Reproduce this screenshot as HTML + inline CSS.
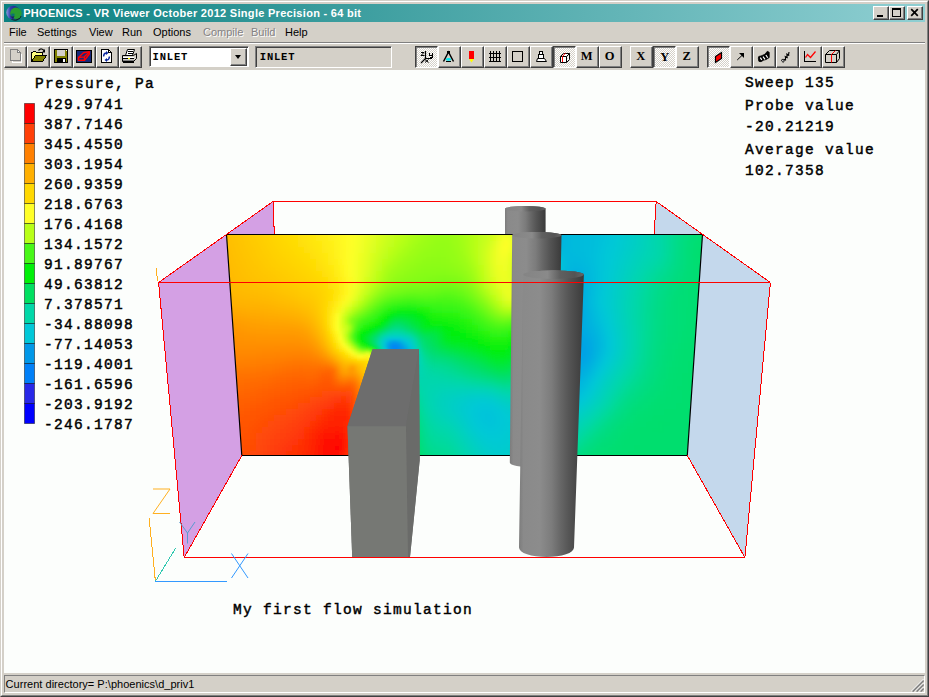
<!DOCTYPE html><html><head><meta charset="utf-8"><title>PHOENICS - VR Viewer</title><style>

*{margin:0;padding:0;box-sizing:border-box}
html,body{width:929px;height:697px;overflow:hidden;background:#d4d0c8}
body{position:relative;font-family:"Liberation Sans",sans-serif;font-size:11px;color:#000}
.abs{position:absolute}
#frame{position:absolute;left:0;top:0;width:929px;height:697px;background:#d4d0c8;
 border-top:1px solid #d4d0c8;border-left:1px solid #d4d0c8;border-right:1px solid #404040;border-bottom:1px solid #404040}
#frame2{position:absolute;left:1px;top:1px;width:927px;height:695px;border-top:1px solid #fff;border-left:1px solid #fff;border-right:1px solid #808080;border-bottom:1px solid #808080}
#title{position:absolute;left:4px;top:4px;width:921px;height:18px;background:linear-gradient(to right,#0a8080 0%,#8fcfd2 100%)}
#title .txt{position:absolute;left:19.2px;top:2px;color:#fff;font-weight:bold;font-size:11px;line-height:14px;white-space:nowrap;letter-spacing:0.295px}
.cap{position:absolute;top:2px;width:16px;height:14px;background:#d4d0c8;border-top:1px solid #fff;border-left:1px solid #fff;border-right:1px solid #404040;border-bottom:1px solid #404040;box-shadow:inset -1px -1px 0 #808080}
#menu{position:absolute;left:4px;top:22px;width:921px;height:20px}
#menu span{position:absolute;top:3px;line-height:14px;white-space:nowrap}
#menu span.dis{color:#848284;text-shadow:1px 1px 0 #fff}
#sep{position:absolute;left:4px;top:42px;width:921px;height:2px;border-top:1px solid #808080;border-bottom:1px solid #fff}
.tb{position:absolute;top:46px;width:23px;height:22px;background:#d4d0c8;border-top:1px solid #fff;border-left:1px solid #fff;border-right:1px solid #404040;border-bottom:1px solid #404040;box-shadow:inset -1px -1px 0 #808080}
.tb.on{border-top:1px solid #404040;border-left:1px solid #404040;border-right:1px solid #fff;border-bottom:1px solid #fff;box-shadow:inset 1px 1px 0 #808080;background:repeating-conic-gradient(#fff 0% 25%,#d4d0c8 0% 50%) 0 0/2px 2px}
.tb.on b{left:0.2px;top:1.4px}
.tb svg{position:absolute;left:0;top:0}
.tb b{position:absolute;left:-0.8px;top:0;width:21px;height:20px;text-align:center;font-family:"Liberation Serif",serif;font-weight:bold;font-size:12.5px;line-height:19px}
#combo{position:absolute;left:149px;top:46px;width:100px;height:21px;background:#fff;border-top:1px solid #808080;border-left:1px solid #808080;border-right:1px solid #fff;border-bottom:1px solid #fff;box-shadow:inset 1px 1px 0 #404040}
#combo .t,#stat .t{position:absolute;left:4.5px;top:3px;font-family:"Liberation Mono",monospace;font-weight:bold;font-size:10.5px;line-height:14px;letter-spacing:0.8px}
#combo .dd{position:absolute;right:1px;top:1px;width:17px;height:18px;background:#d4d0c8;border-top:1px solid #fff;border-left:1px solid #fff;border-right:1px solid #404040;border-bottom:1px solid #404040;box-shadow:inset -1px -1px 0 #808080}
#combo .dd i{position:absolute;left:3.5px;top:6px;width:0;height:0;border-left:3.5px solid transparent;border-right:3.5px solid transparent;border-top:4px solid #000}
#combo .t{left:2.6px !important}
#stat .t{left:3.8px !important}
#stat{position:absolute;left:255px;top:46px;width:137px;height:22px;background:#d4d0c8;border-top:1px solid #808080;border-left:1px solid #808080;border-right:1px solid #fff;border-bottom:1px solid #fff;box-shadow:inset 1px 1px 0 #404040}
#canvas{position:absolute;left:4px;top:70px;width:921px;height:603px;background:#fcfefc;overflow:hidden}
#canvas svg{position:absolute;left:-4px;top:-70px}
.m{font-family:"Liberation Mono",monospace;font-weight:bold}
.m2{font-family:"Liberation Mono",monospace;font-weight:normal;stroke:#000;stroke-width:0.45px;fill:#000}
#status{position:absolute;left:4px;top:675px;width:921px;height:18px;border-top:1px solid #808080;border-left:1px solid #808080;border-right:1px solid #fff;border-bottom:1px solid #fff}
#status span{position:absolute;left:0.6px;top:1px;line-height:14px;white-space:nowrap;letter-spacing:0.02px}

</style></head><body>
<div id="frame"></div><div id="frame2"></div>
<div id="title"><svg class="abs" style="left:1px;top:1px" width="18" height="16" viewBox="5 5 18 16"><defs><linearGradient id="crs" x1="0" x2="1" y1="0" y2="0"><stop offset="0" stop-color="#9098e0"/><stop offset="0.3" stop-color="#3040a8"/><stop offset="1" stop-color="#101c80"/></linearGradient></defs><path d="M11 18.6 A6.4 6.4 0 0 0 21 16" stroke="#0c2a2a" stroke-width="1.3" fill="none"/><circle cx="13.2" cy="12.6" r="6.9" fill="url(#crs)"/><circle cx="15.9" cy="13.3" r="5.7" fill="#2a9d30"/><path d="M11.3 13.6 h3.2 v2.6 h-3.2z" fill="#0a7070"/><path d="M10.5 16.5 L14.5 16.2 L13 19 Z" fill="#18206a"/></svg><span class="txt">PHOENICS - VR Viewer October 2012 Single Precision - 64 bit</span>
<div class="cap" style="left:869px"><svg width="14" height="12" class="abs" style="left:0;top:0" shape-rendering="crispEdges"><rect x="3" y="8" width="6" height="2" fill="#000"/></svg></div><div class="cap" style="left:885px"><svg width="14" height="12" class="abs" style="left:0;top:0" shape-rendering="crispEdges"><rect x="2.5" y="1.5" width="8" height="8" fill="none" stroke="#000"/><rect x="2" y="1" width="9" height="2" fill="#000"/></svg></div><div class="cap" style="left:903px"><svg width="14" height="12" class="abs" style="left:0;top:0"><path d="M3.2 2.2 L9.8 8.8 M9.8 2.2 L3.2 8.8" stroke="#000" stroke-width="1.7"/></svg></div></div>
<div id="menu"><span class="" style="left:5px">File</span><span class="" style="left:33px">Settings</span><span class="" style="left:85px">View</span><span class="" style="left:118px">Run</span><span class="" style="left:149px">Options</span><span class="dis" style="left:199px">Compile</span><span class="dis" style="left:247px">Build</span><span class="" style="left:281px">Help</span></div>
<div id="sep"></div>
<div class="tb" style="left:4px"><svg width="21" height="20" viewBox="5 47 21 20" shape-rendering="crispEdges"><path d="M11.5 50.5 H17.5 L20.5 53.5 V61.5 H11.5 Z" stroke="#fff" fill="none" stroke-width="1" transform="translate(1,1)"/><path d="M10.5 49.5 H17.5 L20.5 52.5 V60.5 H10.5 Z M17.5 49.5 V52.5 H20.5" stroke="#808080" fill="#d4d0c8" stroke-width="1" /></svg></div>
<div class="tb" style="left:27px"><svg width="21" height="20" viewBox="28 47 21 20" shape-rendering="crispEdges"><path d="M31.5 61.5 V52.5 H32.5 L33.5 51.5 H35.5 L36.5 52.5 H42.5 V54.5" stroke="#000" fill="#ffff80" stroke-width="1" /><path d="M31.5 61.5 L35.5 55.5 H46.5 L42.5 61.5 Z" stroke="#000" fill="#808000" stroke-width="1" /><path d="M38.5 50.5 Q41.5 47.3 44.3 50.8" stroke="#000" fill="none" stroke-width="1.2" shape-rendering="auto"/><path d="M45 49 V52.5 H41.8 Z" stroke="none" fill="#000" stroke-width="0" shape-rendering="auto"/></svg></div>
<div class="tb" style="left:50px"><svg width="21" height="20" viewBox="51 47 21 20" shape-rendering="crispEdges"><rect x="54" y="49" width="14" height="14" fill="#000"/><rect x="55" y="50" width="12" height="12" fill="#808000"/><rect x="57" y="50" width="8" height="6" fill="#d4d0c8"/><rect x="57" y="58" width="9" height="4" fill="#000"/><rect x="63" y="59" width="2" height="3" fill="#fff"/><rect x="66" y="50" width="1" height="1" fill="#fff"/></svg></div>
<div class="tb" style="left:73px"><svg width="21" height="20" viewBox="74 47 21 20" shape-rendering="crispEdges"><rect x="76" y="50" width="16" height="13" fill="#000"/><rect x="77" y="51" width="14" height="11" fill="#182878"/><path d="M78.5 57.5 L83.5 52.8 L89.3 51.8 L89.3 54 L84.5 60.3 L78.5 60.3 Z" stroke="#ff0000" fill="none" stroke-width="1.5" shape-rendering="auto" stroke-linejoin="round"/><path d="M78.5 57.5 L84.3 56.8 L89.3 52 M84.3 56.8 L84.5 60.3" stroke="#ff0000" fill="none" stroke-width="1.3" shape-rendering="auto"/></svg></div>
<div class="tb" style="left:96px"><svg width="21" height="20" viewBox="97 47 21 20" shape-rendering="crispEdges"><path d="M101.5 49.5 H108.5 L111.5 52.5 V62.5 H101.5 Z" stroke="#000" fill="#fff" stroke-width="1" /><path d="M108.5 49.5 V52.5 H111.5" stroke="#000" fill="none" stroke-width="1" /><path d="M103.6 56.5 A3 3.5 0 0 1 106.5 53 M109.4 56.5 A3 3.5 0 0 1 106.5 60" stroke="#0c28a0" fill="none" stroke-width="1.4" shape-rendering="auto"/><path d="M106 51 L108.5 53 L106 55 Z M107 62 L104.5 60 L107 58 Z" stroke="none" fill="#0c28a0" stroke-width="0" shape-rendering="auto"/></svg></div>
<div class="tb" style="left:119px"><svg width="21" height="20" viewBox="120 47 21 20" shape-rendering="crispEdges"><path d="M125.5 55.5 L127.5 49.5 H134.5 L132.5 55.5" stroke="#000" fill="#fff" stroke-width="1" shape-rendering="auto"/><path d="M128 51.5 H133 M127.5 53.5 H132.5" stroke="#000" fill="none" stroke-width="1" /><path d="M122.5 55.5 H133.5 L136.5 53.5 V58.5 L133.5 61.5 H122.5 Z" stroke="#000" fill="#d4d0c8" stroke-width="1" shape-rendering="auto"/><rect x="123" y="57" width="11" height="1" fill="#fff"/><rect x="123" y="58" width="11" height="1" fill="#000"/><rect x="128" y="58" width="2" height="1" fill="#ffff00"/><rect x="123" y="60" width="11" height="1" fill="#808080"/><path d="M123.5 61.5 H133.5 V62.5 H123.5 Z" stroke="#000" fill="#000" stroke-width="1" /></svg></div>
<div id="combo"><span class="t">INLET</span><div class="dd"><i></i></div></div>
<div id="stat"><span class="t">INLET</span></div>
<div class="tb on" style="left:415px"><svg width="21" height="20" viewBox="416 47 21 20" shape-rendering="crispEdges"><path d="M425.5 51 V58.5 H432 M425.5 58.5 L421 63" stroke="#000" fill="none" stroke-width="1.2" shape-rendering="auto"/><path d="M421 52.5 H424 L421 55.5 H424.5" stroke="#000" fill="none" stroke-width="1" shape-rendering="auto"/><path d="M429.5 53 V55.5 H432.5 M432.5 53 V57.5 H429.5" stroke="#000" fill="none" stroke-width="1" /><path d="M425 59.5 L428.5 62.5 M428.5 59.5 L425 62.5" stroke="#000" fill="none" stroke-width="1" shape-rendering="auto"/></svg></div>
<div class="tb" style="left:438px"><svg width="21" height="20" viewBox="439 47 21 20" shape-rendering="crispEdges"><path d="M443.5 61.5 L448.5 52 L453.5 61.5" stroke="#000" fill="none" stroke-width="1.5" shape-rendering="auto"/><rect x="447" y="51" width="3" height="2" fill="#000"/><ellipse cx="448.5" cy="59.4" rx="2.7" ry="1.3" fill="#00e8f0" shape-rendering="auto"/><rect x="446" y="61" width="5" height="1" fill="#000"/></svg></div>
<div class="tb" style="left:461px"><svg width="21" height="20" viewBox="462 47 21 20" shape-rendering="crispEdges"><rect x="469" y="51" width="5" height="8" fill="#ff0000"/><path d="M469 59 H474 L471.5 62.5 Z" stroke="none" fill="#ffff00" stroke-width="0" shape-rendering="auto"/></svg></div>
<div class="tb" style="left:484px"><svg width="21" height="20" viewBox="485 47 21 20" shape-rendering="crispEdges"><rect x="490" y="51" width="1" height="11" fill="#000"/><rect x="493" y="51" width="1" height="11" fill="#000"/><rect x="496" y="51" width="1" height="11" fill="#000"/><rect x="499" y="51" width="1" height="11" fill="#000"/><rect x="489" y="53" width="12" height="1" fill="#000"/><rect x="489" y="57" width="12" height="1" fill="#000"/><rect x="489" y="61" width="12" height="1" fill="#000"/></svg></div>
<div class="tb" style="left:507px"><svg width="21" height="20" viewBox="508 47 21 20" shape-rendering="crispEdges"><path d="M512.5 51.5 H522.5 V61.5 H512.5 Z" stroke="#000" fill="none" stroke-width="1" /></svg></div>
<div class="tb" style="left:530px"><svg width="21" height="20" viewBox="531 47 21 20" shape-rendering="crispEdges"><path d="M539.5 51.5 H542.5 V54.5 H539.5 Z" stroke="#000" fill="#fff" stroke-width="1" /><path d="M538.5 54.5 H543.5 V58.5 H538.5 Z" stroke="#000" fill="#fff" stroke-width="1" /><path d="M537.5 58.5 H544.5 L546.5 61.5 H536.5 Z" stroke="#000" fill="#fff" stroke-width="1" shape-rendering="auto"/></svg></div>
<div class="tb on" style="left:553px"><svg width="21" height="20" viewBox="554 47 21 20" shape-rendering="crispEdges"><path d="M560.5 56.5 H566.5 V62.5 H560.5 Z M560.5 56.5 L563.5 53.5 H569.5 L566.5 56.5 M569.5 53.5 V59.5 L566.5 62.5" stroke="#000" fill="#fff" stroke-width="1" shape-rendering="auto"/><path d="M562.5 62 V56.5 L565.5 53" stroke="#ff0000" fill="none" stroke-width="1" shape-rendering="auto"/></svg></div>
<div class="tb" style="left:576px"><b>M</b></div>
<div class="tb" style="left:599px"><b>O</b></div>
<div class="tb" style="left:630px"><b>X</b></div>
<div class="tb on" style="left:653px"><b>Y</b></div>
<div class="tb" style="left:676px"><b>Z</b></div>
<div class="tb on" style="left:707px"><svg width="21" height="20" viewBox="708 47 21 20" shape-rendering="crispEdges"><path d="M715.5 56.5 L721.5 52.5 V58.5 L715.5 62.5 Z" stroke="#000" fill="#ff0000" stroke-width="1.2" shape-rendering="auto"/></svg></div>
<div class="tb" style="left:730px"><svg width="21" height="20" viewBox="731 47 21 20" shape-rendering="crispEdges"><path d="M737.2 60 L743.5 54" stroke="#000" fill="none" stroke-width="1" shape-rendering="auto"/><path d="M739 53 H744 V58 Z" stroke="none" fill="#000" stroke-width="0" shape-rendering="auto"/></svg></div>
<div class="tb" style="left:753px"><svg width="21" height="20" viewBox="754 47 21 20" shape-rendering="crispEdges"><path d="M758.3 58 Q758 55.8 761 56 L765 54.2 L767.3 51.3 L769.2 52.3 L769.2 57.6 Q766 60 763.3 60.3 Q761 62.6 758.8 61.2 Z" stroke="#000" fill="#000" stroke-width="0.8" shape-rendering="auto" stroke-linejoin="round"/><path d="M760.3 57.6 L761.8 59.8 M763 56.6 L765 59.4 M765.9 55 L767.7 57.8" stroke="#fff" fill="none" stroke-width="1.2" shape-rendering="auto"/></svg></div>
<div class="tb" style="left:776px"><svg width="21" height="20" viewBox="777 47 21 20" shape-rendering="crispEdges"><path d="M783.2 61.5 L784 59.5 L785.5 60 L785.5 57 L787 57.5 L787 54.5 L788.5 55 L789 52" stroke="#000" fill="none" stroke-width="1.15" shape-rendering="auto"/><path d="M782.2 59.2 L784.3 60.6 L783.3 62.4 L781.6 61 Z" stroke="#000" fill="#fff" stroke-width="0.9" shape-rendering="auto"/><path d="M784.6 56.2 L787.6 57.8 M786.3 53.6 L789.3 55.3" stroke="#000" fill="none" stroke-width="0.9" shape-rendering="auto"/></svg></div>
<div class="tb" style="left:799px"><svg width="21" height="20" viewBox="800 47 21 20" shape-rendering="crispEdges"><path d="M804.5 51 V61.5 H816" stroke="#000" fill="none" stroke-width="1" /><path d="M805.5 57.5 L807.5 54.5 L810.5 57.5 L815.5 51.5" stroke="#ff0000" fill="none" stroke-width="1.25" shape-rendering="auto"/></svg></div>
<div class="tb" style="left:822px"><svg width="21" height="20" viewBox="823 47 21 20" shape-rendering="crispEdges"><path d="M825.5 54.5 H836.5 V62.5 H825.5 Z M825.5 54.5 L829.5 50.5 H839.5 L836.5 54.5 M839.5 50.5 V58.5 L836.5 62.5" stroke="#000" fill="none" stroke-width="1" shape-rendering="auto"/><path d="M831.5 62.5 V54.5 L835.5 50.5" stroke="#ff0000" fill="none" stroke-width="1" shape-rendering="auto"/></svg></div>
<div id="canvas"><svg width="929" height="697" viewBox="0 0 929 697"><defs>
<linearGradient id="cyl" x1="0" x2="1" y1="0" y2="0"><stop offset="0" stop-color="#7c7c7c"/><stop offset="0.07" stop-color="#8a8a8a"/><stop offset="0.32" stop-color="#8c8c8c"/><stop offset="0.5" stop-color="#7c7c7c"/><stop offset="0.63" stop-color="#686868"/><stop offset="0.76" stop-color="#565656"/><stop offset="0.9" stop-color="#464646"/><stop offset="1" stop-color="#3a3a3a"/></linearGradient>
<linearGradient id="captop" x1="0" x2="1" y1="0" y2="0"><stop offset="0" stop-color="#848484"/><stop offset="0.4" stop-color="#8a8a8a"/><stop offset="0.6" stop-color="#606060"/><stop offset="0.85" stop-color="#545454"/><stop offset="1" stop-color="#666"/></linearGradient>
<pattern id="dots" width="3" height="3" patternUnits="userSpaceOnUse"><rect width="3" height="3" fill="#6e6e6e"/><rect width="1" height="1" fill="#676767"/></pattern>
<filter id="bl" x="-5%" y="-5%" width="110%" height="110%"><feGaussianBlur stdDeviation="3.8"/></filter>
<filter id="bl2" x="-5%" y="-5%" width="110%" height="110%"><feGaussianBlur stdDeviation="1.5"/></filter>
<filter id="bl3" x="-20%" y="-20%" width="140%" height="140%"><feGaussianBlur stdDeviation="3"/></filter>
<mask id="m2" maskUnits="userSpaceOnUse" x="300" y="290" width="160" height="110"><rect x="328" y="314" width="100" height="58" fill="#fff" filter="url(#bl3)"/></mask>
<clipPath id="cp"><polygon points="226.5,234.5 702.5,234.5 687.3,455.5 241.8,455.5"/></clipPath>
</defs><path d="M505 208.8 L505 240 L545.6 240 L545.6 208.8 A20.3 2.8 0 0 0 505 208.8 Z" fill="url(#cyl)"/><ellipse cx="525.3" cy="208.8" rx="20.3" ry="2.8" fill="url(#captop)"/><polygon points="158.6,282.5 273,201.5 274.4,236 226.5,234.5 241.8,455.5 184.2,557.5" fill="#d4a0e4" /><polygon points="770.4,282.5 656.2,201.5 654,236 702.5,234.5 687.3,455.5 744.9,557.5" fill="#c4d8ec" /><line x1="273" y1="201.5" x2="656.2" y2="201.5" stroke="#ff0000" stroke-width="1" shape-rendering="crispEdges"/><line x1="273" y1="201.5" x2="274.4" y2="236" stroke="#ff0000" stroke-width="1" shape-rendering="crispEdges"/><line x1="656.2" y1="201.5" x2="654" y2="236" stroke="#ff0000" stroke-width="1" shape-rendering="crispEdges"/><g clip-path="url(#cp)"><g filter="url(#bl)"><path d="M214 223h6v6h-6z" fill="#ffbe00"/><path d="M220 223h6v6h-6z" fill="#ffc000"/><path d="M226 223h6v6h-6z" fill="#ffc200"/><path d="M232 223h6v6h-6z" fill="#ffc500"/><path d="M238 223h6v6h-6z" fill="#ffc800"/><path d="M244 223h6v6h-6z" fill="#ffca00"/><path d="M250 223h6v6h-6z" fill="#ffcd00"/><path d="M256 223h6v6h-6z" fill="#ffd000"/><path d="M262 223h6v6h-6z" fill="#ffd300"/><path d="M268 223h6v6h-6z" fill="#ffd600"/><path d="M274 223h6v6h-6z" fill="#ffd901"/><path d="M280 223h6v6h-6z" fill="#ffdb03"/><path d="M286 223h6v6h-6z" fill="#ffde06"/><path d="M292 223h6v6h-6z" fill="#ffe109"/><path d="M298 223h6v6h-6z" fill="#ffe40c"/><path d="M304 223h6v6h-6z" fill="#ffe60f"/><path d="M310 223h6v6h-6z" fill="#ffe912"/><path d="M316 223h6v6h-6z" fill="#ffec15"/><path d="M322 223h6v6h-6z" fill="#fff018"/><path d="M328 223h6v6h-6z" fill="#fff31b"/><path d="M334 223h6v6h-6z" fill="#fff61f"/><path d="M340 223h6v6h-6z" fill="#fffa23"/><path d="M346 223h6v6h-6z" fill="#fffd26"/><path d="M352 223h6v6h-6z" fill="#fbff27"/><path d="M358 223h6v6h-6z" fill="#f4ff26"/><path d="M364 223h6v6h-6z" fill="#edff24"/><path d="M370 223h6v6h-6z" fill="#e5ff22"/><path d="M376 223h6v6h-6z" fill="#dcff20"/><path d="M382 223h6v6h-6z" fill="#d4ff1e"/><path d="M388 223h6v6h-6z" fill="#ccff1d"/><path d="M394 223h6v6h-6z" fill="#c5ff1b"/><path d="M400 223h6v6h-6z" fill="#bfff19"/><path d="M406 223h6v6h-6z" fill="#b9ff18"/><path d="M412 223h6v6h-6z" fill="#b1ff18"/><path d="M418 223h6v6h-6z" fill="#aafe18"/><path d="M424 223h6v6h-6z" fill="#a5fe18"/><path d="M430 223h6v6h-6z" fill="#a1fe18"/><path d="M436 223h6v6h-6z" fill="#9efd18"/><path d="M442 223h12v6h-12z" fill="#9dfd18"/><path d="M454 223h6v6h-6z" fill="#a1fe18"/><path d="M460 223h6v6h-6z" fill="#a5fe18"/><path d="M466 223h6v6h-6z" fill="#acfe18"/><path d="M472 223h6v6h-6z" fill="#b4ff18"/><path d="M478 223h6v6h-6z" fill="#bbff19"/><path d="M484 223h6v6h-6z" fill="#c2ff1a"/><path d="M490 223h6v6h-6z" fill="#caff1c"/><path d="M496 223h6v6h-6z" fill="#d0ff1d"/><path d="M502 223h6v6h-6z" fill="#cfff1d"/><path d="M508 223h6v6h-6z" fill="#beff19"/><path d="M514 223h6v6h-6z" fill="#87fc18"/><path d="M520 223h6v6h-6z" fill="#39f615"/><path d="M526 223h6v6h-6z" fill="#00ee13"/><path d="M532 223h6v6h-6z" fill="#00df66"/><path d="M538 223h6v6h-6z" fill="#00d8a5"/><path d="M544 223h6v6h-6z" fill="#00cec7"/><path d="M550 223h6v6h-6z" fill="#00c4d9"/><path d="M556 223h6v6h-6z" fill="#00bbdc"/><path d="M562 223h12v6h-12z" fill="#00b9dd"/><path d="M574 223h6v6h-6z" fill="#00badd"/><path d="M580 223h6v6h-6z" fill="#00bbdc"/><path d="M586 223h6v6h-6z" fill="#00bddc"/><path d="M592 223h6v6h-6z" fill="#00bfdb"/><path d="M598 223h6v6h-6z" fill="#00c1da"/><path d="M604 223h6v6h-6z" fill="#00c4d9"/><path d="M610 223h6v6h-6z" fill="#00c8d8"/><path d="M616 223h6v6h-6z" fill="#00c9d4"/><path d="M622 223h6v6h-6z" fill="#00cbcf"/><path d="M628 223h6v6h-6z" fill="#00cdc9"/><path d="M634 223h6v6h-6z" fill="#00cfc3"/><path d="M640 223h6v6h-6z" fill="#00d1bd"/><path d="M646 223h6v6h-6z" fill="#00d3b6"/><path d="M652 223h6v6h-6z" fill="#00d6af"/><path d="M658 223h6v6h-6z" fill="#00d8a8"/><path d="M664 223h6v6h-6z" fill="#00d99e"/><path d="M670 223h6v6h-6z" fill="#00da94"/><path d="M676 223h6v6h-6z" fill="#00db8b"/><path d="M682 223h6v6h-6z" fill="#00dc83"/><path d="M688 223h6v6h-6z" fill="#00dd7d"/><path d="M694 223h6v6h-6z" fill="#00dd78"/><path d="M700 223h6v6h-6z" fill="#00de74"/><path d="M706 223h6v6h-6z" fill="#00de71"/><path d="M712 223h6v6h-6z" fill="#00de6e"/><path d="M214 229h6v6h-6z" fill="#ffbc00"/><path d="M220 229h6v6h-6z" fill="#ffbf00"/><path d="M226 229h6v6h-6z" fill="#ffc100"/><path d="M232 229h6v6h-6z" fill="#ffc400"/><path d="M238 229h6v6h-6z" fill="#ffc600"/><path d="M244 229h6v6h-6z" fill="#ffc900"/><path d="M250 229h6v6h-6z" fill="#ffcc00"/><path d="M256 229h6v6h-6z" fill="#ffcf00"/><path d="M262 229h6v6h-6z" fill="#ffd200"/><path d="M268 229h6v6h-6z" fill="#ffd500"/><path d="M274 229h6v6h-6z" fill="#ffd700"/><path d="M280 229h6v6h-6z" fill="#ffda02"/><path d="M286 229h6v6h-6z" fill="#ffdd05"/><path d="M292 229h6v6h-6z" fill="#ffe008"/><path d="M298 229h6v6h-6z" fill="#ffe20b"/><path d="M304 229h6v6h-6z" fill="#ffe50e"/><path d="M310 229h6v6h-6z" fill="#ffe811"/><path d="M316 229h6v6h-6z" fill="#ffeb14"/><path d="M322 229h6v6h-6z" fill="#ffee17"/><path d="M328 229h6v6h-6z" fill="#fff21b"/><path d="M334 229h6v6h-6z" fill="#fff61e"/><path d="M340 229h6v6h-6z" fill="#fff922"/><path d="M346 229h6v6h-6z" fill="#fffd26"/><path d="M352 229h6v6h-6z" fill="#fbff27"/><path d="M358 229h6v6h-6z" fill="#f4ff26"/><path d="M364 229h6v6h-6z" fill="#ecff24"/><path d="M370 229h6v6h-6z" fill="#e4ff22"/><path d="M376 229h6v6h-6z" fill="#dbff20"/><path d="M382 229h6v6h-6z" fill="#d2ff1e"/><path d="M388 229h6v6h-6z" fill="#caff1c"/><path d="M394 229h6v6h-6z" fill="#c2ff1a"/><path d="M400 229h6v6h-6z" fill="#bcff19"/><path d="M406 229h6v6h-6z" fill="#b5ff18"/><path d="M412 229h6v6h-6z" fill="#adfe18"/><path d="M418 229h6v6h-6z" fill="#a6fe18"/><path d="M424 229h6v6h-6z" fill="#a1fe18"/><path d="M430 229h6v6h-6z" fill="#9dfd18"/><path d="M436 229h6v6h-6z" fill="#9afd18"/><path d="M442 229h6v6h-6z" fill="#99fd18"/><path d="M448 229h6v6h-6z" fill="#9bfd18"/><path d="M454 229h6v6h-6z" fill="#9ffd18"/><path d="M460 229h6v6h-6z" fill="#a5fe18"/><path d="M466 229h6v6h-6z" fill="#adfe18"/><path d="M472 229h6v6h-6z" fill="#b6ff18"/><path d="M478 229h6v6h-6z" fill="#beff19"/><path d="M484 229h6v6h-6z" fill="#c6ff1b"/><path d="M490 229h6v6h-6z" fill="#d1ff1e"/><path d="M496 229h6v6h-6z" fill="#dfff21"/><path d="M502 229h6v6h-6z" fill="#e7ff23"/><path d="M508 229h6v6h-6z" fill="#dbff20"/><path d="M514 229h6v6h-6z" fill="#aefe18"/><path d="M520 229h6v6h-6z" fill="#4bf818"/><path d="M526 229h6v6h-6z" fill="#00f009"/><path d="M532 229h6v6h-6z" fill="#00df67"/><path d="M538 229h6v6h-6z" fill="#00d6ad"/><path d="M544 229h6v6h-6z" fill="#00cad3"/><path d="M550 229h6v6h-6z" fill="#00b8dd"/><path d="M556 229h6v6h-6z" fill="#00b3df"/><path d="M562 229h6v6h-6z" fill="#00b6de"/><path d="M568 229h6v6h-6z" fill="#00b9dd"/><path d="M574 229h6v6h-6z" fill="#00badd"/><path d="M580 229h6v6h-6z" fill="#00bbdc"/><path d="M586 229h6v6h-6z" fill="#00bddc"/><path d="M592 229h6v6h-6z" fill="#00bedb"/><path d="M598 229h6v6h-6z" fill="#00c1da"/><path d="M604 229h6v6h-6z" fill="#00c4d9"/><path d="M610 229h6v6h-6z" fill="#00c8d8"/><path d="M616 229h6v6h-6z" fill="#00c9d4"/><path d="M622 229h6v6h-6z" fill="#00cbcf"/><path d="M628 229h6v6h-6z" fill="#00cdc9"/><path d="M634 229h6v6h-6z" fill="#00cfc3"/><path d="M640 229h6v6h-6z" fill="#00d1bd"/><path d="M646 229h6v6h-6z" fill="#00d3b6"/><path d="M652 229h6v6h-6z" fill="#00d6af"/><path d="M658 229h6v6h-6z" fill="#00d8a7"/><path d="M664 229h6v6h-6z" fill="#00d99c"/><path d="M670 229h6v6h-6z" fill="#00da92"/><path d="M676 229h6v6h-6z" fill="#00dc88"/><path d="M682 229h6v6h-6z" fill="#00dc80"/><path d="M688 229h6v6h-6z" fill="#00dd7a"/><path d="M694 229h6v6h-6z" fill="#00de75"/><path d="M700 229h6v6h-6z" fill="#00de72"/><path d="M706 229h6v6h-6z" fill="#00de6f"/><path d="M712 229h6v6h-6z" fill="#00df6c"/><path d="M214 235h6v6h-6z" fill="#ffbb00"/><path d="M220 235h6v6h-6z" fill="#ffbe00"/><path d="M226 235h6v6h-6z" fill="#ffc000"/><path d="M232 235h6v6h-6z" fill="#ffc300"/><path d="M238 235h6v6h-6z" fill="#ffc500"/><path d="M244 235h6v6h-6z" fill="#ffc800"/><path d="M250 235h6v6h-6z" fill="#ffcb00"/><path d="M256 235h6v6h-6z" fill="#ffce00"/><path d="M262 235h6v6h-6z" fill="#ffd000"/><path d="M268 235h6v6h-6z" fill="#ffd300"/><path d="M274 235h6v6h-6z" fill="#ffd600"/><path d="M280 235h6v6h-6z" fill="#ffd901"/><path d="M286 235h6v6h-6z" fill="#ffdb03"/><path d="M292 235h6v6h-6z" fill="#ffde06"/><path d="M298 235h6v6h-6z" fill="#ffe109"/><path d="M304 235h6v6h-6z" fill="#ffe40c"/><path d="M310 235h6v6h-6z" fill="#ffe70f"/><path d="M316 235h6v6h-6z" fill="#ffea12"/><path d="M322 235h6v6h-6z" fill="#ffed16"/><path d="M328 235h6v6h-6z" fill="#fff11a"/><path d="M334 235h6v6h-6z" fill="#fff51e"/><path d="M340 235h6v6h-6z" fill="#fff922"/><path d="M346 235h6v6h-6z" fill="#fffd26"/><path d="M352 235h6v6h-6z" fill="#fbff27"/><path d="M358 235h6v6h-6z" fill="#f3ff25"/><path d="M364 235h6v6h-6z" fill="#ebff23"/><path d="M370 235h6v6h-6z" fill="#e2ff21"/><path d="M376 235h6v6h-6z" fill="#d8ff1f"/><path d="M382 235h6v6h-6z" fill="#cfff1d"/><path d="M388 235h6v6h-6z" fill="#c6ff1b"/><path d="M394 235h6v6h-6z" fill="#bfff19"/><path d="M400 235h6v6h-6z" fill="#b8ff18"/><path d="M406 235h6v6h-6z" fill="#affe18"/><path d="M412 235h6v6h-6z" fill="#a8fe18"/><path d="M418 235h6v6h-6z" fill="#a2fe18"/><path d="M424 235h6v6h-6z" fill="#9dfd18"/><path d="M430 235h6v6h-6z" fill="#9afd18"/><path d="M436 235h6v6h-6z" fill="#97fd18"/><path d="M442 235h6v6h-6z" fill="#96fd18"/><path d="M448 235h6v6h-6z" fill="#98fd18"/><path d="M454 235h6v6h-6z" fill="#9dfd18"/><path d="M460 235h6v6h-6z" fill="#a4fe18"/><path d="M466 235h6v6h-6z" fill="#adfe18"/><path d="M472 235h6v6h-6z" fill="#b8ff18"/><path d="M478 235h6v6h-6z" fill="#bfff1a"/><path d="M484 235h6v6h-6z" fill="#c9ff1c"/><path d="M490 235h6v6h-6z" fill="#d4ff1e"/><path d="M496 235h6v6h-6z" fill="#e9ff23"/><path d="M502 235h6v6h-6z" fill="#fcff27"/><path d="M508 235h6v6h-6z" fill="#f5ff26"/><path d="M514 235h6v6h-6z" fill="#c6ff1b"/><path d="M520 235h6v6h-6z" fill="#61fa18"/><path d="M526 235h6v6h-6z" fill="#07f10a"/><path d="M532 235h6v6h-6z" fill="#00df65"/><path d="M538 235h6v6h-6z" fill="#00d5b0"/><path d="M544 235h6v6h-6z" fill="#00c4d9"/><path d="M550 235h6v6h-6z" fill="#00afe0"/><path d="M556 235h6v6h-6z" fill="#00b0e0"/><path d="M562 235h6v6h-6z" fill="#00b7de"/><path d="M568 235h6v6h-6z" fill="#00badd"/><path d="M574 235h6v6h-6z" fill="#00bbdc"/><path d="M580 235h6v6h-6z" fill="#00bcdc"/><path d="M586 235h6v6h-6z" fill="#00bddc"/><path d="M592 235h6v6h-6z" fill="#00bfdb"/><path d="M598 235h6v6h-6z" fill="#00c1da"/><path d="M604 235h6v6h-6z" fill="#00c4d9"/><path d="M610 235h6v6h-6z" fill="#00c8d8"/><path d="M616 235h6v6h-6z" fill="#00cad3"/><path d="M622 235h6v6h-6z" fill="#00cbce"/><path d="M628 235h6v6h-6z" fill="#00cdc9"/><path d="M634 235h6v6h-6z" fill="#00cfc3"/><path d="M640 235h6v6h-6z" fill="#00d1bc"/><path d="M646 235h6v6h-6z" fill="#00d3b6"/><path d="M652 235h6v6h-6z" fill="#00d6ae"/><path d="M658 235h6v6h-6z" fill="#00d8a6"/><path d="M664 235h6v6h-6z" fill="#00d99b"/><path d="M670 235h6v6h-6z" fill="#00db90"/><path d="M676 235h6v6h-6z" fill="#00dc86"/><path d="M682 235h6v6h-6z" fill="#00dd7e"/><path d="M688 235h6v6h-6z" fill="#00dd78"/><path d="M694 235h6v6h-6z" fill="#00de73"/><path d="M700 235h6v6h-6z" fill="#00de70"/><path d="M706 235h6v6h-6z" fill="#00df6d"/><path d="M712 235h6v6h-6z" fill="#00df6b"/><path d="M214 241h6v6h-6z" fill="#ffba00"/><path d="M220 241h6v6h-6z" fill="#ffbd00"/><path d="M226 241h6v6h-6z" fill="#ffbf00"/><path d="M232 241h6v6h-6z" fill="#ffc100"/><path d="M238 241h6v6h-6z" fill="#ffc400"/><path d="M244 241h6v6h-6z" fill="#ffc700"/><path d="M250 241h6v6h-6z" fill="#ffca00"/><path d="M256 241h6v6h-6z" fill="#ffcc00"/><path d="M262 241h6v6h-6z" fill="#ffcf00"/><path d="M268 241h6v6h-6z" fill="#ffd200"/><path d="M274 241h6v6h-6z" fill="#ffd400"/><path d="M280 241h6v6h-6z" fill="#ffd700"/><path d="M286 241h6v6h-6z" fill="#ffda02"/><path d="M292 241h6v6h-6z" fill="#ffdc04"/><path d="M298 241h6v6h-6z" fill="#ffdf07"/><path d="M304 241h6v6h-6z" fill="#ffe20a"/><path d="M310 241h6v6h-6z" fill="#ffe50d"/><path d="M316 241h6v6h-6z" fill="#ffe811"/><path d="M322 241h6v6h-6z" fill="#ffec14"/><path d="M328 241h6v6h-6z" fill="#fff019"/><path d="M334 241h6v6h-6z" fill="#fff41d"/><path d="M340 241h6v6h-6z" fill="#fff921"/><path d="M346 241h6v6h-6z" fill="#fffd26"/><path d="M352 241h6v6h-6z" fill="#faff27"/><path d="M358 241h6v6h-6z" fill="#f2ff25"/><path d="M364 241h6v6h-6z" fill="#e9ff23"/><path d="M370 241h6v6h-6z" fill="#dfff21"/><path d="M376 241h6v6h-6z" fill="#d5ff1e"/><path d="M382 241h6v6h-6z" fill="#cbff1c"/><path d="M388 241h6v6h-6z" fill="#c2ff1a"/><path d="M394 241h6v6h-6z" fill="#baff19"/><path d="M400 241h6v6h-6z" fill="#b2ff18"/><path d="M406 241h6v6h-6z" fill="#aafe18"/><path d="M412 241h6v6h-6z" fill="#a3fe18"/><path d="M418 241h6v6h-6z" fill="#9efd18"/><path d="M424 241h6v6h-6z" fill="#9afd18"/><path d="M430 241h6v6h-6z" fill="#96fd18"/><path d="M436 241h12v6h-12z" fill="#94fd18"/><path d="M448 241h6v6h-6z" fill="#96fd18"/><path d="M454 241h6v6h-6z" fill="#9bfd18"/><path d="M460 241h6v6h-6z" fill="#a2fe18"/><path d="M466 241h6v6h-6z" fill="#acfe18"/><path d="M472 241h6v6h-6z" fill="#b8ff18"/><path d="M478 241h6v6h-6z" fill="#c1ff1a"/><path d="M484 241h6v6h-6z" fill="#cdff1d"/><path d="M490 241h6v6h-6z" fill="#dbff20"/><path d="M496 241h6v6h-6z" fill="#f0ff25"/><path d="M502 241h6v6h-6z" fill="#fffd26"/><path d="M508 241h6v6h-6z" fill="#faff27"/><path d="M514 241h6v6h-6z" fill="#cdff1d"/><path d="M520 241h6v6h-6z" fill="#6efa18"/><path d="M526 241h6v6h-6z" fill="#0ff20b"/><path d="M532 241h6v6h-6z" fill="#00e15d"/><path d="M538 241h6v6h-6z" fill="#00d7ac"/><path d="M544 241h6v6h-6z" fill="#00c8d7"/><path d="M550 241h6v6h-6z" fill="#00b3df"/><path d="M556 241h6v6h-6z" fill="#00b2df"/><path d="M562 241h6v6h-6z" fill="#00b7de"/><path d="M568 241h6v6h-6z" fill="#00badd"/><path d="M574 241h6v6h-6z" fill="#00bbdc"/><path d="M580 241h6v6h-6z" fill="#00bcdc"/><path d="M586 241h6v6h-6z" fill="#00bddc"/><path d="M592 241h6v6h-6z" fill="#00bfdb"/><path d="M598 241h6v6h-6z" fill="#00c2da"/><path d="M604 241h6v6h-6z" fill="#00c5d9"/><path d="M610 241h6v6h-6z" fill="#00c8d7"/><path d="M616 241h6v6h-6z" fill="#00cad2"/><path d="M622 241h6v6h-6z" fill="#00cccd"/><path d="M628 241h6v6h-6z" fill="#00cdc8"/><path d="M634 241h6v6h-6z" fill="#00cfc2"/><path d="M640 241h6v6h-6z" fill="#00d1bc"/><path d="M646 241h6v6h-6z" fill="#00d4b5"/><path d="M652 241h6v6h-6z" fill="#00d6ae"/><path d="M658 241h6v6h-6z" fill="#00d8a7"/><path d="M664 241h6v6h-6z" fill="#00d99b"/><path d="M670 241h6v6h-6z" fill="#00db90"/><path d="M676 241h6v6h-6z" fill="#00dc85"/><path d="M682 241h6v6h-6z" fill="#00dd7d"/><path d="M688 241h6v6h-6z" fill="#00de76"/><path d="M694 241h6v6h-6z" fill="#00de72"/><path d="M700 241h6v6h-6z" fill="#00de6e"/><path d="M706 241h6v6h-6z" fill="#00df6c"/><path d="M712 241h6v6h-6z" fill="#00df6a"/><path d="M214 247h6v6h-6z" fill="#ffb900"/><path d="M220 247h6v6h-6z" fill="#ffbc00"/><path d="M226 247h6v6h-6z" fill="#ffbe00"/><path d="M232 247h6v6h-6z" fill="#ffc100"/><path d="M238 247h6v6h-6z" fill="#ffc300"/><path d="M244 247h6v6h-6z" fill="#ffc600"/><path d="M250 247h6v6h-6z" fill="#ffc800"/><path d="M256 247h6v6h-6z" fill="#ffcb00"/><path d="M262 247h6v6h-6z" fill="#ffce00"/><path d="M268 247h6v6h-6z" fill="#ffd000"/><path d="M274 247h6v6h-6z" fill="#ffd300"/><path d="M280 247h6v6h-6z" fill="#ffd500"/><path d="M286 247h6v6h-6z" fill="#ffd800"/><path d="M292 247h6v6h-6z" fill="#ffda02"/><path d="M298 247h6v6h-6z" fill="#ffdd05"/><path d="M304 247h6v6h-6z" fill="#ffe008"/><path d="M310 247h6v6h-6z" fill="#ffe30b"/><path d="M316 247h6v6h-6z" fill="#ffe60f"/><path d="M322 247h6v6h-6z" fill="#ffea13"/><path d="M328 247h6v6h-6z" fill="#ffef17"/><path d="M334 247h6v6h-6z" fill="#fff31c"/><path d="M340 247h6v6h-6z" fill="#fff821"/><path d="M346 247h6v6h-6z" fill="#fffd26"/><path d="M352 247h6v6h-6z" fill="#f9ff27"/><path d="M358 247h6v6h-6z" fill="#f0ff25"/><path d="M364 247h6v6h-6z" fill="#e6ff22"/><path d="M370 247h6v6h-6z" fill="#dbff20"/><path d="M376 247h6v6h-6z" fill="#d0ff1d"/><path d="M382 247h6v6h-6z" fill="#c6ff1b"/><path d="M388 247h6v6h-6z" fill="#bdff19"/><path d="M394 247h6v6h-6z" fill="#b4ff18"/><path d="M400 247h6v6h-6z" fill="#abfe18"/><path d="M406 247h6v6h-6z" fill="#a4fe18"/><path d="M412 247h6v6h-6z" fill="#9efd18"/><path d="M418 247h6v6h-6z" fill="#99fd18"/><path d="M424 247h6v6h-6z" fill="#96fd18"/><path d="M430 247h6v6h-6z" fill="#94fd18"/><path d="M436 247h12v6h-12z" fill="#92fd18"/><path d="M448 247h6v6h-6z" fill="#95fd18"/><path d="M454 247h6v6h-6z" fill="#99fd18"/><path d="M460 247h6v6h-6z" fill="#a0fe18"/><path d="M466 247h6v6h-6z" fill="#abfe18"/><path d="M472 247h6v6h-6z" fill="#b8ff18"/><path d="M478 247h6v6h-6z" fill="#c3ff1b"/><path d="M484 247h6v6h-6z" fill="#d1ff1e"/><path d="M490 247h6v6h-6z" fill="#e2ff21"/><path d="M496 247h6v6h-6z" fill="#f4ff25"/><path d="M502 247h6v6h-6z" fill="#feff28"/><path d="M508 247h6v6h-6z" fill="#f2ff25"/><path d="M514 247h6v6h-6z" fill="#caff1c"/><path d="M520 247h6v6h-6z" fill="#72fb18"/><path d="M526 247h6v6h-6z" fill="#17f30d"/><path d="M532 247h6v6h-6z" fill="#00e34e"/><path d="M538 247h6v6h-6z" fill="#00d99d"/><path d="M544 247h6v6h-6z" fill="#00cdc9"/><path d="M550 247h6v6h-6z" fill="#00c0db"/><path d="M556 247h12v6h-12z" fill="#00b8dd"/><path d="M568 247h6v6h-6z" fill="#00badd"/><path d="M574 247h6v6h-6z" fill="#00bbdc"/><path d="M580 247h6v6h-6z" fill="#00bcdc"/><path d="M586 247h6v6h-6z" fill="#00bddc"/><path d="M592 247h6v6h-6z" fill="#00c0db"/><path d="M598 247h6v6h-6z" fill="#00c3da"/><path d="M604 247h6v6h-6z" fill="#00c7d8"/><path d="M610 247h6v6h-6z" fill="#00c9d5"/><path d="M616 247h6v6h-6z" fill="#00cad1"/><path d="M622 247h6v6h-6z" fill="#00cccb"/><path d="M628 247h6v6h-6z" fill="#00cec6"/><path d="M634 247h6v6h-6z" fill="#00d0c0"/><path d="M640 247h6v6h-6z" fill="#00d2ba"/><path d="M646 247h6v6h-6z" fill="#00d4b4"/><path d="M652 247h6v6h-6z" fill="#00d6ae"/><path d="M658 247h6v6h-6z" fill="#00d8a7"/><path d="M664 247h6v6h-6z" fill="#00d99b"/><path d="M670 247h6v6h-6z" fill="#00db8f"/><path d="M676 247h6v6h-6z" fill="#00dc85"/><path d="M682 247h6v6h-6z" fill="#00dd7c"/><path d="M688 247h6v6h-6z" fill="#00de75"/><path d="M694 247h6v6h-6z" fill="#00de71"/><path d="M700 247h6v6h-6z" fill="#00df6d"/><path d="M706 247h6v6h-6z" fill="#00df6b"/><path d="M712 247h6v6h-6z" fill="#00df69"/><path d="M214 253h6v6h-6z" fill="#ffb800"/><path d="M220 253h6v6h-6z" fill="#ffbb00"/><path d="M226 253h6v6h-6z" fill="#ffbd00"/><path d="M232 253h6v6h-6z" fill="#ffc000"/><path d="M238 253h6v6h-6z" fill="#ffc200"/><path d="M244 253h6v6h-6z" fill="#ffc500"/><path d="M250 253h6v6h-6z" fill="#ffc700"/><path d="M256 253h6v6h-6z" fill="#ffca00"/><path d="M262 253h6v6h-6z" fill="#ffcc00"/><path d="M268 253h6v6h-6z" fill="#ffce00"/><path d="M274 253h6v6h-6z" fill="#ffd100"/><path d="M280 253h6v6h-6z" fill="#ffd300"/><path d="M286 253h6v6h-6z" fill="#ffd600"/><path d="M292 253h6v6h-6z" fill="#ffd800"/><path d="M298 253h6v6h-6z" fill="#ffdb03"/><path d="M304 253h6v6h-6z" fill="#ffdd05"/><path d="M310 253h6v6h-6z" fill="#ffe009"/><path d="M316 253h6v6h-6z" fill="#ffe40c"/><path d="M322 253h6v6h-6z" fill="#ffe811"/><path d="M328 253h6v6h-6z" fill="#ffed15"/><path d="M334 253h6v6h-6z" fill="#fff21b"/><path d="M340 253h6v6h-6z" fill="#fff821"/><path d="M346 253h6v6h-6z" fill="#fffe27"/><path d="M352 253h6v6h-6z" fill="#f8ff26"/><path d="M358 253h6v6h-6z" fill="#eeff24"/><path d="M364 253h6v6h-6z" fill="#e3ff22"/><path d="M370 253h6v6h-6z" fill="#d7ff1f"/><path d="M376 253h6v6h-6z" fill="#cbff1c"/><path d="M382 253h6v6h-6z" fill="#c0ff1a"/><path d="M388 253h6v6h-6z" fill="#b6ff18"/><path d="M394 253h6v6h-6z" fill="#acfe18"/><path d="M400 253h6v6h-6z" fill="#a4fe18"/><path d="M406 253h6v6h-6z" fill="#9efd18"/><path d="M412 253h6v6h-6z" fill="#99fd18"/><path d="M418 253h6v6h-6z" fill="#95fd18"/><path d="M424 253h6v6h-6z" fill="#92fd18"/><path d="M430 253h6v6h-6z" fill="#91fd18"/><path d="M436 253h6v6h-6z" fill="#90fd18"/><path d="M442 253h6v6h-6z" fill="#91fd18"/><path d="M448 253h6v6h-6z" fill="#93fd18"/><path d="M454 253h6v6h-6z" fill="#97fd18"/><path d="M460 253h6v6h-6z" fill="#9efd18"/><path d="M466 253h6v6h-6z" fill="#a8fe18"/><path d="M472 253h6v6h-6z" fill="#b6ff18"/><path d="M478 253h6v6h-6z" fill="#c3ff1b"/><path d="M484 253h6v6h-6z" fill="#d3ff1e"/><path d="M490 253h6v6h-6z" fill="#e4ff22"/><path d="M496 253h6v6h-6z" fill="#f3ff25"/><path d="M502 253h6v6h-6z" fill="#f8ff26"/><path d="M508 253h6v6h-6z" fill="#eaff23"/><path d="M514 253h6v6h-6z" fill="#c5ff1b"/><path d="M520 253h6v6h-6z" fill="#74fb18"/><path d="M526 253h6v6h-6z" fill="#1ef30f"/><path d="M532 253h6v6h-6z" fill="#00e63e"/><path d="M538 253h6v6h-6z" fill="#00db8a"/><path d="M544 253h6v6h-6z" fill="#00d2ba"/><path d="M550 253h6v6h-6z" fill="#00c9d4"/><path d="M556 253h6v6h-6z" fill="#00bfdb"/><path d="M562 253h6v6h-6z" fill="#00badd"/><path d="M568 253h6v6h-6z" fill="#00b9dd"/><path d="M574 253h6v6h-6z" fill="#00badd"/><path d="M580 253h6v6h-6z" fill="#00bbdc"/><path d="M586 253h6v6h-6z" fill="#00bddc"/><path d="M592 253h6v6h-6z" fill="#00c0db"/><path d="M598 253h6v6h-6z" fill="#00c4d9"/><path d="M604 253h6v6h-6z" fill="#00c8d8"/><path d="M610 253h6v6h-6z" fill="#00c9d4"/><path d="M616 253h6v6h-6z" fill="#00cbcf"/><path d="M622 253h6v6h-6z" fill="#00cdc9"/><path d="M628 253h6v6h-6z" fill="#00cfc3"/><path d="M634 253h6v6h-6z" fill="#00d1bd"/><path d="M640 253h6v6h-6z" fill="#00d3b8"/><path d="M646 253h6v6h-6z" fill="#00d5b2"/><path d="M652 253h6v6h-6z" fill="#00d6ad"/><path d="M658 253h6v6h-6z" fill="#00d8a6"/><path d="M664 253h6v6h-6z" fill="#00da9a"/><path d="M670 253h6v6h-6z" fill="#00db8e"/><path d="M676 253h6v6h-6z" fill="#00dc84"/><path d="M682 253h6v6h-6z" fill="#00dd7b"/><path d="M688 253h6v6h-6z" fill="#00de75"/><path d="M694 253h6v6h-6z" fill="#00de70"/><path d="M700 253h6v6h-6z" fill="#00df6d"/><path d="M706 253h6v6h-6z" fill="#00df6b"/><path d="M712 253h6v6h-6z" fill="#00df69"/><path d="M214 259h6v6h-6z" fill="#ffb800"/><path d="M220 259h6v6h-6z" fill="#ffba00"/><path d="M226 259h6v6h-6z" fill="#ffbc00"/><path d="M232 259h6v6h-6z" fill="#ffbf00"/><path d="M238 259h6v6h-6z" fill="#ffc100"/><path d="M244 259h6v6h-6z" fill="#ffc300"/><path d="M250 259h6v6h-6z" fill="#ffc600"/><path d="M256 259h6v6h-6z" fill="#ffc800"/><path d="M262 259h6v6h-6z" fill="#ffca00"/><path d="M268 259h6v6h-6z" fill="#ffcd00"/><path d="M274 259h6v6h-6z" fill="#ffcf00"/><path d="M280 259h6v6h-6z" fill="#ffd100"/><path d="M286 259h6v6h-6z" fill="#ffd300"/><path d="M292 259h6v6h-6z" fill="#ffd600"/><path d="M298 259h6v6h-6z" fill="#ffd800"/><path d="M304 259h6v6h-6z" fill="#ffdb03"/><path d="M310 259h6v6h-6z" fill="#ffde06"/><path d="M316 259h6v6h-6z" fill="#ffe10a"/><path d="M322 259h6v6h-6z" fill="#ffe60e"/><path d="M328 259h6v6h-6z" fill="#ffeb13"/><path d="M334 259h6v6h-6z" fill="#fff119"/><path d="M340 259h6v6h-6z" fill="#fff720"/><path d="M346 259h6v6h-6z" fill="#fffe27"/><path d="M352 259h6v6h-6z" fill="#f6ff26"/><path d="M358 259h6v6h-6z" fill="#ecff24"/><path d="M364 259h6v6h-6z" fill="#e1ff21"/><path d="M370 259h6v6h-6z" fill="#d3ff1e"/><path d="M376 259h6v6h-6z" fill="#c6ff1b"/><path d="M382 259h6v6h-6z" fill="#b9ff18"/><path d="M388 259h6v6h-6z" fill="#adfe18"/><path d="M394 259h6v6h-6z" fill="#a4fe18"/><path d="M400 259h6v6h-6z" fill="#9dfd18"/><path d="M406 259h6v6h-6z" fill="#98fd18"/><path d="M412 259h6v6h-6z" fill="#94fd18"/><path d="M418 259h6v6h-6z" fill="#91fd18"/><path d="M424 259h6v6h-6z" fill="#8ffc18"/><path d="M430 259h12v6h-12z" fill="#8efc18"/><path d="M442 259h6v6h-6z" fill="#8ffc18"/><path d="M448 259h6v6h-6z" fill="#91fd18"/><path d="M454 259h6v6h-6z" fill="#94fd18"/><path d="M460 259h6v6h-6z" fill="#9afd18"/><path d="M466 259h6v6h-6z" fill="#a3fe18"/><path d="M472 259h6v6h-6z" fill="#b1ff18"/><path d="M478 259h6v6h-6z" fill="#c1ff1a"/><path d="M484 259h6v6h-6z" fill="#d2ff1e"/><path d="M490 259h6v6h-6z" fill="#e4ff22"/><path d="M496 259h6v6h-6z" fill="#f1ff25"/><path d="M502 259h6v6h-6z" fill="#f3ff25"/><path d="M508 259h6v6h-6z" fill="#e5ff22"/><path d="M514 259h6v6h-6z" fill="#c2ff1a"/><path d="M520 259h6v6h-6z" fill="#77fb18"/><path d="M526 259h6v6h-6z" fill="#26f410"/><path d="M532 259h6v6h-6z" fill="#00e92f"/><path d="M538 259h6v6h-6z" fill="#00dd7a"/><path d="M544 259h6v6h-6z" fill="#00d6af"/><path d="M550 259h6v6h-6z" fill="#00cccb"/><path d="M556 259h6v6h-6z" fill="#00c4d9"/><path d="M562 259h6v6h-6z" fill="#00bbdc"/><path d="M568 259h12v6h-12z" fill="#00b8dd"/><path d="M580 259h6v6h-6z" fill="#00b9dd"/><path d="M586 259h6v6h-6z" fill="#00bcdc"/><path d="M592 259h6v6h-6z" fill="#00c0db"/><path d="M598 259h6v6h-6z" fill="#00c4d9"/><path d="M604 259h6v6h-6z" fill="#00c8d8"/><path d="M610 259h6v6h-6z" fill="#00cad3"/><path d="M616 259h6v6h-6z" fill="#00cccd"/><path d="M622 259h6v6h-6z" fill="#00cec7"/><path d="M628 259h6v6h-6z" fill="#00d0c1"/><path d="M634 259h6v6h-6z" fill="#00d2ba"/><path d="M640 259h6v6h-6z" fill="#00d4b4"/><path d="M646 259h6v6h-6z" fill="#00d6ae"/><path d="M652 259h6v6h-6z" fill="#00d8a9"/><path d="M658 259h6v6h-6z" fill="#00d9a0"/><path d="M664 259h6v6h-6z" fill="#00da96"/><path d="M670 259h6v6h-6z" fill="#00db8c"/><path d="M676 259h6v6h-6z" fill="#00dc83"/><path d="M682 259h6v6h-6z" fill="#00dd7b"/><path d="M688 259h6v6h-6z" fill="#00de75"/><path d="M694 259h6v6h-6z" fill="#00de71"/><path d="M700 259h6v6h-6z" fill="#00de6e"/><path d="M706 259h6v6h-6z" fill="#00df6b"/><path d="M712 259h6v6h-6z" fill="#00df69"/><path d="M214 265h6v6h-6z" fill="#ffb700"/><path d="M220 265h6v6h-6z" fill="#ffb900"/><path d="M226 265h6v6h-6z" fill="#ffbb00"/><path d="M232 265h6v6h-6z" fill="#ffbe00"/><path d="M238 265h6v6h-6z" fill="#ffc000"/><path d="M244 265h6v6h-6z" fill="#ffc200"/><path d="M250 265h6v6h-6z" fill="#ffc400"/><path d="M256 265h6v6h-6z" fill="#ffc600"/><path d="M262 265h6v6h-6z" fill="#ffc900"/><path d="M268 265h6v6h-6z" fill="#ffcb00"/><path d="M274 265h6v6h-6z" fill="#ffcd00"/><path d="M280 265h6v6h-6z" fill="#ffcf00"/><path d="M286 265h6v6h-6z" fill="#ffd100"/><path d="M292 265h6v6h-6z" fill="#ffd300"/><path d="M298 265h6v6h-6z" fill="#ffd500"/><path d="M304 265h6v6h-6z" fill="#ffd800"/><path d="M310 265h6v6h-6z" fill="#ffdb03"/><path d="M316 265h6v6h-6z" fill="#ffde07"/><path d="M322 265h6v6h-6z" fill="#ffe30b"/><path d="M328 265h6v6h-6z" fill="#ffe811"/><path d="M334 265h6v6h-6z" fill="#ffef17"/><path d="M340 265h6v6h-6z" fill="#fff61f"/><path d="M346 265h6v6h-6z" fill="#fffe27"/><path d="M352 265h6v6h-6z" fill="#f5ff26"/><path d="M358 265h6v6h-6z" fill="#eaff23"/><path d="M364 265h6v6h-6z" fill="#dfff21"/><path d="M370 265h6v6h-6z" fill="#d0ff1d"/><path d="M376 265h6v6h-6z" fill="#c0ff1a"/><path d="M382 265h6v6h-6z" fill="#b0fe18"/><path d="M388 265h6v6h-6z" fill="#a4fe18"/><path d="M394 265h6v6h-6z" fill="#9cfd18"/><path d="M400 265h6v6h-6z" fill="#97fd18"/><path d="M406 265h6v6h-6z" fill="#93fd18"/><path d="M412 265h6v6h-6z" fill="#8ffc18"/><path d="M418 265h6v6h-6z" fill="#8cfc18"/><path d="M424 265h6v6h-6z" fill="#8bfc18"/><path d="M430 265h12v6h-12z" fill="#8afc18"/><path d="M442 265h6v6h-6z" fill="#8bfc18"/><path d="M448 265h6v6h-6z" fill="#8dfc18"/><path d="M454 265h6v6h-6z" fill="#90fc18"/><path d="M460 265h6v6h-6z" fill="#95fd18"/><path d="M466 265h6v6h-6z" fill="#9dfd18"/><path d="M472 265h6v6h-6z" fill="#aafe18"/><path d="M478 265h6v6h-6z" fill="#bcff19"/><path d="M484 265h6v6h-6z" fill="#cfff1d"/><path d="M490 265h6v6h-6z" fill="#e1ff21"/><path d="M496 265h6v6h-6z" fill="#efff24"/><path d="M502 265h6v6h-6z" fill="#f1ff25"/><path d="M508 265h6v6h-6z" fill="#e3ff22"/><path d="M514 265h6v6h-6z" fill="#c3ff1a"/><path d="M520 265h6v6h-6z" fill="#7dfb18"/><path d="M526 265h6v6h-6z" fill="#2df512"/><path d="M532 265h6v6h-6z" fill="#00eb22"/><path d="M538 265h6v6h-6z" fill="#00de6e"/><path d="M544 265h6v6h-6z" fill="#00d8a7"/><path d="M550 265h6v6h-6z" fill="#00cec5"/><path d="M556 265h6v6h-6z" fill="#00c6d9"/><path d="M562 265h6v6h-6z" fill="#00bbdc"/><path d="M568 265h6v6h-6z" fill="#00b6de"/><path d="M574 265h6v6h-6z" fill="#00b5de"/><path d="M580 265h6v6h-6z" fill="#00b7de"/><path d="M586 265h6v6h-6z" fill="#00badd"/><path d="M592 265h6v6h-6z" fill="#00bfdb"/><path d="M598 265h6v6h-6z" fill="#00c4d9"/><path d="M604 265h6v6h-6z" fill="#00c8d7"/><path d="M610 265h6v6h-6z" fill="#00cad1"/><path d="M616 265h6v6h-6z" fill="#00cccb"/><path d="M622 265h6v6h-6z" fill="#00cfc4"/><path d="M628 265h6v6h-6z" fill="#00d1be"/><path d="M634 265h6v6h-6z" fill="#00d3b7"/><path d="M640 265h6v6h-6z" fill="#00d5b0"/><path d="M646 265h6v6h-6z" fill="#00d7aa"/><path d="M652 265h6v6h-6z" fill="#00d9a2"/><path d="M658 265h6v6h-6z" fill="#00da9a"/><path d="M664 265h6v6h-6z" fill="#00db91"/><path d="M670 265h6v6h-6z" fill="#00dc88"/><path d="M676 265h6v6h-6z" fill="#00dc81"/><path d="M682 265h6v6h-6z" fill="#00dd7a"/><path d="M688 265h6v6h-6z" fill="#00de75"/><path d="M694 265h6v6h-6z" fill="#00de72"/><path d="M700 265h6v6h-6z" fill="#00de6f"/><path d="M706 265h6v6h-6z" fill="#00df6c"/><path d="M712 265h6v6h-6z" fill="#00df6a"/><path d="M214 271h6v6h-6z" fill="#ffb600"/><path d="M220 271h6v6h-6z" fill="#ffb800"/><path d="M226 271h6v6h-6z" fill="#ffba00"/><path d="M232 271h6v6h-6z" fill="#ffbc00"/><path d="M238 271h6v6h-6z" fill="#ffbf00"/><path d="M244 271h6v6h-6z" fill="#ffc100"/><path d="M250 271h6v6h-6z" fill="#ffc300"/><path d="M256 271h6v6h-6z" fill="#ffc500"/><path d="M262 271h6v6h-6z" fill="#ffc600"/><path d="M268 271h6v6h-6z" fill="#ffc800"/><path d="M274 271h6v6h-6z" fill="#ffca00"/><path d="M280 271h6v6h-6z" fill="#ffcc00"/><path d="M286 271h6v6h-6z" fill="#ffce00"/><path d="M292 271h6v6h-6z" fill="#ffd000"/><path d="M298 271h6v6h-6z" fill="#ffd300"/><path d="M304 271h6v6h-6z" fill="#ffd500"/><path d="M310 271h6v6h-6z" fill="#ffd800"/><path d="M316 271h6v6h-6z" fill="#ffdb03"/><path d="M322 271h6v6h-6z" fill="#ffdf08"/><path d="M328 271h6v6h-6z" fill="#ffe50d"/><path d="M334 271h6v6h-6z" fill="#ffec14"/><path d="M340 271h6v6h-6z" fill="#fff41d"/><path d="M346 271h6v6h-6z" fill="#fffd25"/><path d="M352 271h6v6h-6z" fill="#f6ff26"/><path d="M358 271h6v6h-6z" fill="#e9ff23"/><path d="M364 271h6v6h-6z" fill="#dbff20"/><path d="M370 271h6v6h-6z" fill="#cbff1c"/><path d="M376 271h6v6h-6z" fill="#bbff19"/><path d="M382 271h6v6h-6z" fill="#a9fe18"/><path d="M388 271h6v6h-6z" fill="#9dfd18"/><path d="M394 271h6v6h-6z" fill="#96fd18"/><path d="M400 271h6v6h-6z" fill="#92fd18"/><path d="M406 271h6v6h-6z" fill="#8efc18"/><path d="M412 271h6v6h-6z" fill="#8bfc18"/><path d="M418 271h6v6h-6z" fill="#88fc18"/><path d="M424 271h6v6h-6z" fill="#87fc18"/><path d="M430 271h6v6h-6z" fill="#86fc18"/><path d="M436 271h12v6h-12z" fill="#85fc18"/><path d="M448 271h6v6h-6z" fill="#87fc18"/><path d="M454 271h6v6h-6z" fill="#89fc18"/><path d="M460 271h6v6h-6z" fill="#8efc18"/><path d="M466 271h6v6h-6z" fill="#96fd18"/><path d="M472 271h6v6h-6z" fill="#a4fe18"/><path d="M478 271h6v6h-6z" fill="#b9ff18"/><path d="M484 271h6v6h-6z" fill="#cbff1c"/><path d="M490 271h6v6h-6z" fill="#deff20"/><path d="M496 271h6v6h-6z" fill="#ecff24"/><path d="M502 271h6v6h-6z" fill="#efff24"/><path d="M508 271h6v6h-6z" fill="#e3ff22"/><path d="M514 271h6v6h-6z" fill="#c5ff1b"/><path d="M520 271h6v6h-6z" fill="#85fc18"/><path d="M526 271h6v6h-6z" fill="#34f614"/><path d="M532 271h6v6h-6z" fill="#00ed18"/><path d="M538 271h6v6h-6z" fill="#00df67"/><path d="M544 271h6v6h-6z" fill="#00d9a2"/><path d="M550 271h6v6h-6z" fill="#00cfc4"/><path d="M556 271h6v6h-6z" fill="#00c5d9"/><path d="M562 271h6v6h-6z" fill="#00b8dd"/><path d="M568 271h6v6h-6z" fill="#00b2df"/><path d="M574 271h6v6h-6z" fill="#00b1e0"/><path d="M580 271h6v6h-6z" fill="#00b4df"/><path d="M586 271h6v6h-6z" fill="#00b9dd"/><path d="M592 271h6v6h-6z" fill="#00bedb"/><path d="M598 271h6v6h-6z" fill="#00c4d9"/><path d="M604 271h6v6h-6z" fill="#00c9d6"/><path d="M610 271h6v6h-6z" fill="#00cbd0"/><path d="M616 271h6v6h-6z" fill="#00cdc9"/><path d="M622 271h6v6h-6z" fill="#00cfc2"/><path d="M628 271h6v6h-6z" fill="#00d2ba"/><path d="M634 271h6v6h-6z" fill="#00d4b3"/><path d="M640 271h6v6h-6z" fill="#00d7ac"/><path d="M646 271h6v6h-6z" fill="#00d9a3"/><path d="M652 271h6v6h-6z" fill="#00d99b"/><path d="M658 271h6v6h-6z" fill="#00da93"/><path d="M664 271h6v6h-6z" fill="#00db8c"/><path d="M670 271h6v6h-6z" fill="#00dc85"/><path d="M676 271h6v6h-6z" fill="#00dd7e"/><path d="M682 271h6v6h-6z" fill="#00dd79"/><path d="M688 271h6v6h-6z" fill="#00de75"/><path d="M694 271h6v6h-6z" fill="#00de72"/><path d="M700 271h6v6h-6z" fill="#00de70"/><path d="M706 271h6v6h-6z" fill="#00df6d"/><path d="M712 271h6v6h-6z" fill="#00df6b"/><path d="M214 277h6v6h-6z" fill="#ffb400"/><path d="M220 277h6v6h-6z" fill="#ffb700"/><path d="M226 277h6v6h-6z" fill="#ffb900"/><path d="M232 277h6v6h-6z" fill="#ffbb00"/><path d="M238 277h6v6h-6z" fill="#ffbd00"/><path d="M244 277h6v6h-6z" fill="#ffbf00"/><path d="M250 277h6v6h-6z" fill="#ffc100"/><path d="M256 277h6v6h-6z" fill="#ffc200"/><path d="M262 277h6v6h-6z" fill="#ffc400"/><path d="M268 277h6v6h-6z" fill="#ffc600"/><path d="M274 277h6v6h-6z" fill="#ffc800"/><path d="M280 277h6v6h-6z" fill="#ffca00"/><path d="M286 277h6v6h-6z" fill="#ffcc00"/><path d="M292 277h6v6h-6z" fill="#ffce00"/><path d="M298 277h6v6h-6z" fill="#ffd000"/><path d="M304 277h6v6h-6z" fill="#ffd200"/><path d="M310 277h6v6h-6z" fill="#ffd400"/><path d="M316 277h6v6h-6z" fill="#ffd800"/><path d="M322 277h6v6h-6z" fill="#ffdc04"/><path d="M328 277h6v6h-6z" fill="#ffe20a"/><path d="M334 277h6v6h-6z" fill="#ffe911"/><path d="M340 277h6v6h-6z" fill="#fff11a"/><path d="M346 277h6v6h-6z" fill="#fffa23"/><path d="M352 277h6v6h-6z" fill="#f6ff26"/><path d="M358 277h6v6h-6z" fill="#e6ff22"/><path d="M364 277h6v6h-6z" fill="#d5ff1f"/><path d="M370 277h6v6h-6z" fill="#c5ff1b"/><path d="M376 277h6v6h-6z" fill="#b5ff18"/><path d="M382 277h6v6h-6z" fill="#a2fe18"/><path d="M388 277h6v6h-6z" fill="#96fd18"/><path d="M394 277h6v6h-6z" fill="#8ffc18"/><path d="M400 277h6v6h-6z" fill="#8bfc18"/><path d="M406 277h6v6h-6z" fill="#88fc18"/><path d="M412 277h6v6h-6z" fill="#85fc18"/><path d="M418 277h6v6h-6z" fill="#83fc18"/><path d="M424 277h6v6h-6z" fill="#81fc18"/><path d="M430 277h6v6h-6z" fill="#7ffb18"/><path d="M436 277h6v6h-6z" fill="#7dfb18"/><path d="M442 277h6v6h-6z" fill="#7cfb18"/><path d="M448 277h6v6h-6z" fill="#7dfb18"/><path d="M454 277h6v6h-6z" fill="#80fb18"/><path d="M460 277h6v6h-6z" fill="#85fc18"/><path d="M466 277h6v6h-6z" fill="#8ffc18"/><path d="M472 277h6v6h-6z" fill="#9efd18"/><path d="M478 277h6v6h-6z" fill="#b3ff18"/><path d="M484 277h6v6h-6z" fill="#c6ff1b"/><path d="M490 277h6v6h-6z" fill="#d9ff1f"/><path d="M496 277h6v6h-6z" fill="#e8ff23"/><path d="M502 277h6v6h-6z" fill="#eeff24"/><path d="M508 277h6v6h-6z" fill="#e5ff22"/><path d="M514 277h6v6h-6z" fill="#caff1c"/><path d="M520 277h6v6h-6z" fill="#8efc18"/><path d="M526 277h6v6h-6z" fill="#3af615"/><path d="M532 277h6v6h-6z" fill="#00ee12"/><path d="M538 277h6v6h-6z" fill="#00e064"/><path d="M544 277h6v6h-6z" fill="#00d9a2"/><path d="M550 277h6v6h-6z" fill="#00cec7"/><path d="M556 277h6v6h-6z" fill="#00c1da"/><path d="M562 277h6v6h-6z" fill="#00b3df"/><path d="M568 277h12v6h-12z" fill="#00ade1"/><path d="M580 277h6v6h-6z" fill="#00b2df"/><path d="M586 277h6v6h-6z" fill="#00b8dd"/><path d="M592 277h6v6h-6z" fill="#00bedb"/><path d="M598 277h6v6h-6z" fill="#00c4d9"/><path d="M604 277h6v6h-6z" fill="#00c9d5"/><path d="M610 277h6v6h-6z" fill="#00cbce"/><path d="M616 277h6v6h-6z" fill="#00cec7"/><path d="M622 277h6v6h-6z" fill="#00d0bf"/><path d="M628 277h6v6h-6z" fill="#00d3b7"/><path d="M634 277h6v6h-6z" fill="#00d5b0"/><path d="M640 277h6v6h-6z" fill="#00d8a8"/><path d="M646 277h6v6h-6z" fill="#00d99e"/><path d="M652 277h6v6h-6z" fill="#00da96"/><path d="M658 277h6v6h-6z" fill="#00db8e"/><path d="M664 277h6v6h-6z" fill="#00dc87"/><path d="M670 277h6v6h-6z" fill="#00dc81"/><path d="M676 277h6v6h-6z" fill="#00dd7c"/><path d="M682 277h6v6h-6z" fill="#00dd78"/><path d="M688 277h6v6h-6z" fill="#00de75"/><path d="M694 277h6v6h-6z" fill="#00de72"/><path d="M700 277h6v6h-6z" fill="#00de70"/><path d="M706 277h6v6h-6z" fill="#00de6e"/><path d="M712 277h6v6h-6z" fill="#00df6c"/><path d="M214 283h6v6h-6z" fill="#ffb300"/><path d="M220 283h6v6h-6z" fill="#ffb500"/><path d="M226 283h6v6h-6z" fill="#ffb800"/><path d="M232 283h6v6h-6z" fill="#ffba00"/><path d="M238 283h6v6h-6z" fill="#ffbc00"/><path d="M244 283h6v6h-6z" fill="#ffbd00"/><path d="M250 283h6v6h-6z" fill="#ffbe00"/><path d="M256 283h6v6h-6z" fill="#ffc000"/><path d="M262 283h6v6h-6z" fill="#ffc100"/><path d="M268 283h6v6h-6z" fill="#ffc300"/><path d="M274 283h6v6h-6z" fill="#ffc500"/><path d="M280 283h6v6h-6z" fill="#ffc700"/><path d="M286 283h6v6h-6z" fill="#ffc900"/><path d="M292 283h6v6h-6z" fill="#ffcb00"/><path d="M298 283h6v6h-6z" fill="#ffcd00"/><path d="M304 283h6v6h-6z" fill="#ffcf00"/><path d="M310 283h6v6h-6z" fill="#ffd100"/><path d="M316 283h6v6h-6z" fill="#ffd400"/><path d="M322 283h6v6h-6z" fill="#ffd901"/><path d="M328 283h6v6h-6z" fill="#ffdf07"/><path d="M334 283h6v6h-6z" fill="#ffe60f"/><path d="M340 283h6v6h-6z" fill="#ffef18"/><path d="M346 283h6v6h-6z" fill="#fff922"/><path d="M352 283h6v6h-6z" fill="#f5ff26"/><path d="M358 283h6v6h-6z" fill="#e1ff21"/><path d="M364 283h6v6h-6z" fill="#cdff1d"/><path d="M370 283h6v6h-6z" fill="#bcff19"/><path d="M376 283h6v6h-6z" fill="#a8fe18"/><path d="M382 283h6v6h-6z" fill="#97fd18"/><path d="M388 283h6v6h-6z" fill="#8cfc18"/><path d="M394 283h6v6h-6z" fill="#85fc18"/><path d="M400 283h6v6h-6z" fill="#81fc18"/><path d="M406 283h6v6h-6z" fill="#7efb18"/><path d="M412 283h6v6h-6z" fill="#7cfb18"/><path d="M418 283h6v6h-6z" fill="#7afb18"/><path d="M424 283h6v6h-6z" fill="#78fb18"/><path d="M430 283h6v6h-6z" fill="#75fb18"/><path d="M436 283h6v6h-6z" fill="#72fb18"/><path d="M442 283h6v6h-6z" fill="#70fb18"/><path d="M448 283h6v6h-6z" fill="#71fb18"/><path d="M454 283h6v6h-6z" fill="#74fb18"/><path d="M460 283h6v6h-6z" fill="#7afb18"/><path d="M466 283h6v6h-6z" fill="#85fc18"/><path d="M472 283h6v6h-6z" fill="#94fd18"/><path d="M478 283h6v6h-6z" fill="#a9fe18"/><path d="M484 283h6v6h-6z" fill="#bfff1a"/><path d="M490 283h6v6h-6z" fill="#d1ff1e"/><path d="M496 283h6v6h-6z" fill="#e2ff21"/><path d="M502 283h6v6h-6z" fill="#edff24"/><path d="M508 283h6v6h-6z" fill="#e9ff23"/><path d="M514 283h6v6h-6z" fill="#d0ff1d"/><path d="M520 283h6v6h-6z" fill="#98fd18"/><path d="M526 283h6v6h-6z" fill="#3ff716"/><path d="M532 283h6v6h-6z" fill="#00ef0f"/><path d="M538 283h6v6h-6z" fill="#00df65"/><path d="M544 283h6v6h-6z" fill="#00d8a8"/><path d="M550 283h6v6h-6z" fill="#00cccd"/><path d="M556 283h6v6h-6z" fill="#00b9dd"/><path d="M562 283h6v6h-6z" fill="#00ace1"/><path d="M568 283h6v6h-6z" fill="#00a7e3"/><path d="M574 283h6v6h-6z" fill="#00aae2"/><path d="M580 283h6v6h-6z" fill="#00b0e0"/><path d="M586 283h6v6h-6z" fill="#00b7de"/><path d="M592 283h6v6h-6z" fill="#00bedb"/><path d="M598 283h6v6h-6z" fill="#00c5d9"/><path d="M604 283h6v6h-6z" fill="#00c9d4"/><path d="M610 283h6v6h-6z" fill="#00cccd"/><path d="M616 283h6v6h-6z" fill="#00cec5"/><path d="M622 283h6v6h-6z" fill="#00d1bd"/><path d="M628 283h6v6h-6z" fill="#00d4b5"/><path d="M634 283h6v6h-6z" fill="#00d6ad"/><path d="M640 283h6v6h-6z" fill="#00d8a4"/><path d="M646 283h6v6h-6z" fill="#00da9a"/><path d="M652 283h6v6h-6z" fill="#00da92"/><path d="M658 283h6v6h-6z" fill="#00db8a"/><path d="M664 283h6v6h-6z" fill="#00dc84"/><path d="M670 283h6v6h-6z" fill="#00dd7e"/><path d="M676 283h6v6h-6z" fill="#00dd7a"/><path d="M682 283h6v6h-6z" fill="#00de76"/><path d="M688 283h6v6h-6z" fill="#00de74"/><path d="M694 283h6v6h-6z" fill="#00de72"/><path d="M700 283h6v6h-6z" fill="#00de70"/><path d="M706 283h6v6h-6z" fill="#00de6e"/><path d="M712 283h6v6h-6z" fill="#00df6c"/><path d="M214 289h6v6h-6z" fill="#ffb100"/><path d="M220 289h6v6h-6z" fill="#ffb300"/><path d="M226 289h6v6h-6z" fill="#ffb600"/><path d="M232 289h6v6h-6z" fill="#ffb800"/><path d="M238 289h6v6h-6z" fill="#ffb900"/><path d="M244 289h6v6h-6z" fill="#ffbb00"/><path d="M250 289h6v6h-6z" fill="#ffbc00"/><path d="M256 289h6v6h-6z" fill="#ffbd00"/><path d="M262 289h6v6h-6z" fill="#ffbe00"/><path d="M268 289h6v6h-6z" fill="#ffbf00"/><path d="M274 289h6v6h-6z" fill="#ffc100"/><path d="M280 289h6v6h-6z" fill="#ffc300"/><path d="M286 289h6v6h-6z" fill="#ffc500"/><path d="M292 289h6v6h-6z" fill="#ffc700"/><path d="M298 289h6v6h-6z" fill="#ffca00"/><path d="M304 289h6v6h-6z" fill="#ffcc00"/><path d="M310 289h6v6h-6z" fill="#ffce00"/><path d="M316 289h6v6h-6z" fill="#ffd100"/><path d="M322 289h6v6h-6z" fill="#ffd600"/><path d="M328 289h6v6h-6z" fill="#ffdd05"/><path d="M334 289h6v6h-6z" fill="#ffe50d"/><path d="M340 289h6v6h-6z" fill="#ffef17"/><path d="M346 289h6v6h-6z" fill="#fffa23"/><path d="M352 289h6v6h-6z" fill="#f0ff25"/><path d="M358 289h6v6h-6z" fill="#d8ff1f"/><path d="M364 289h6v6h-6z" fill="#c2ff1a"/><path d="M370 289h6v6h-6z" fill="#abfe18"/><path d="M376 289h6v6h-6z" fill="#95fd18"/><path d="M382 289h6v6h-6z" fill="#85fc18"/><path d="M388 289h6v6h-6z" fill="#7afb18"/><path d="M394 289h6v6h-6z" fill="#74fb18"/><path d="M400 289h6v6h-6z" fill="#6ffa18"/><path d="M406 289h6v6h-6z" fill="#6cfa18"/><path d="M412 289h12v6h-12z" fill="#6bfa18"/><path d="M424 289h6v6h-6z" fill="#69fa18"/><path d="M430 289h6v6h-6z" fill="#66fa18"/><path d="M436 289h6v6h-6z" fill="#63fa18"/><path d="M442 289h12v6h-12z" fill="#61fa18"/><path d="M454 289h6v6h-6z" fill="#65fa18"/><path d="M460 289h6v6h-6z" fill="#6cfa18"/><path d="M466 289h6v6h-6z" fill="#77fb18"/><path d="M472 289h6v6h-6z" fill="#87fc18"/><path d="M478 289h6v6h-6z" fill="#9bfd18"/><path d="M484 289h6v6h-6z" fill="#b3ff18"/><path d="M490 289h6v6h-6z" fill="#c6ff1b"/><path d="M496 289h6v6h-6z" fill="#d8ff1f"/><path d="M502 289h6v6h-6z" fill="#eaff23"/><path d="M508 289h6v6h-6z" fill="#edff24"/><path d="M514 289h6v6h-6z" fill="#d6ff1f"/><path d="M520 289h6v6h-6z" fill="#9efd18"/><path d="M526 289h6v6h-6z" fill="#41f717"/><path d="M532 289h6v6h-6z" fill="#00ef0e"/><path d="M538 289h6v6h-6z" fill="#00df68"/><path d="M544 289h6v6h-6z" fill="#00d6ad"/><path d="M550 289h6v6h-6z" fill="#00c9d6"/><path d="M556 289h6v6h-6z" fill="#00b0e0"/><path d="M562 289h6v6h-6z" fill="#00a4e4"/><path d="M568 289h6v6h-6z" fill="#00a2e5"/><path d="M574 289h6v6h-6z" fill="#00a6e3"/><path d="M580 289h6v6h-6z" fill="#00aee1"/><path d="M586 289h6v6h-6z" fill="#00b7de"/><path d="M592 289h6v6h-6z" fill="#00bfdb"/><path d="M598 289h6v6h-6z" fill="#00c6d9"/><path d="M604 289h6v6h-6z" fill="#00cad3"/><path d="M610 289h6v6h-6z" fill="#00cccb"/><path d="M616 289h6v6h-6z" fill="#00cfc3"/><path d="M622 289h6v6h-6z" fill="#00d2bb"/><path d="M628 289h6v6h-6z" fill="#00d5b2"/><path d="M634 289h6v6h-6z" fill="#00d7aa"/><path d="M640 289h6v6h-6z" fill="#00d9a1"/><path d="M646 289h6v6h-6z" fill="#00da97"/><path d="M652 289h6v6h-6z" fill="#00db8e"/><path d="M658 289h6v6h-6z" fill="#00dc87"/><path d="M664 289h6v6h-6z" fill="#00dc81"/><path d="M670 289h6v6h-6z" fill="#00dd7c"/><path d="M676 289h6v6h-6z" fill="#00dd78"/><path d="M682 289h6v6h-6z" fill="#00de75"/><path d="M688 289h6v6h-6z" fill="#00de73"/><path d="M694 289h6v6h-6z" fill="#00de72"/><path d="M700 289h6v6h-6z" fill="#00de70"/><path d="M706 289h6v6h-6z" fill="#00de6e"/><path d="M712 289h6v6h-6z" fill="#00df6c"/><path d="M214 295h6v6h-6z" fill="#ffae00"/><path d="M220 295h6v6h-6z" fill="#ffb100"/><path d="M226 295h6v6h-6z" fill="#ffb300"/><path d="M232 295h6v6h-6z" fill="#ffb500"/><path d="M238 295h6v6h-6z" fill="#ffb600"/><path d="M244 295h6v6h-6z" fill="#ffb700"/><path d="M250 295h6v6h-6z" fill="#ffb800"/><path d="M256 295h6v6h-6z" fill="#ffb900"/><path d="M262 295h6v6h-6z" fill="#ffba00"/><path d="M268 295h6v6h-6z" fill="#ffbb00"/><path d="M274 295h6v6h-6z" fill="#ffbd00"/><path d="M280 295h6v6h-6z" fill="#ffbf00"/><path d="M286 295h6v6h-6z" fill="#ffc100"/><path d="M292 295h6v6h-6z" fill="#ffc300"/><path d="M298 295h6v6h-6z" fill="#ffc600"/><path d="M304 295h6v6h-6z" fill="#ffc800"/><path d="M310 295h6v6h-6z" fill="#ffcb00"/><path d="M316 295h6v6h-6z" fill="#ffcf00"/><path d="M322 295h6v6h-6z" fill="#ffd500"/><path d="M328 295h6v6h-6z" fill="#ffdd05"/><path d="M334 295h6v6h-6z" fill="#ffe710"/><path d="M340 295h6v6h-6z" fill="#fff21b"/><path d="M346 295h6v6h-6z" fill="#ffff28"/><path d="M352 295h6v6h-6z" fill="#e4ff22"/><path d="M358 295h6v6h-6z" fill="#c9ff1c"/><path d="M364 295h6v6h-6z" fill="#affe18"/><path d="M370 295h6v6h-6z" fill="#93fd18"/><path d="M376 295h6v6h-6z" fill="#7dfb18"/><path d="M382 295h6v6h-6z" fill="#6bfa18"/><path d="M388 295h6v6h-6z" fill="#5ff918"/><path d="M394 295h6v6h-6z" fill="#58f918"/><path d="M400 295h6v6h-6z" fill="#52f918"/><path d="M406 295h6v6h-6z" fill="#4df818"/><path d="M412 295h6v6h-6z" fill="#4ff818"/><path d="M418 295h12v6h-12z" fill="#53f918"/><path d="M430 295h6v6h-6z" fill="#51f918"/><path d="M436 295h6v6h-6z" fill="#50f818"/><path d="M442 295h6v6h-6z" fill="#4ef818"/><path d="M448 295h6v6h-6z" fill="#4ff818"/><path d="M454 295h6v6h-6z" fill="#53f918"/><path d="M460 295h6v6h-6z" fill="#5bf918"/><path d="M466 295h6v6h-6z" fill="#67fa18"/><path d="M472 295h6v6h-6z" fill="#77fb18"/><path d="M478 295h6v6h-6z" fill="#8afc18"/><path d="M484 295h6v6h-6z" fill="#9ffd18"/><path d="M490 295h6v6h-6z" fill="#b7ff18"/><path d="M496 295h6v6h-6z" fill="#c9ff1c"/><path d="M502 295h6v6h-6z" fill="#e1ff21"/><path d="M508 295h6v6h-6z" fill="#edff24"/><path d="M514 295h6v6h-6z" fill="#d4ff1e"/><path d="M520 295h6v6h-6z" fill="#99fd18"/><path d="M526 295h6v6h-6z" fill="#3ef716"/><path d="M532 295h6v6h-6z" fill="#00ee12"/><path d="M538 295h6v6h-6z" fill="#00df6b"/><path d="M544 295h6v6h-6z" fill="#00d4b3"/><path d="M550 295h6v6h-6z" fill="#00c2da"/><path d="M556 295h6v6h-6z" fill="#00a8e3"/><path d="M562 295h12v6h-12z" fill="#009fe6"/><path d="M574 295h6v6h-6z" fill="#00a4e4"/><path d="M580 295h6v6h-6z" fill="#00aee1"/><path d="M586 295h6v6h-6z" fill="#00b8dd"/><path d="M592 295h6v6h-6z" fill="#00c0db"/><path d="M598 295h6v6h-6z" fill="#00c7d8"/><path d="M604 295h6v6h-6z" fill="#00cad2"/><path d="M610 295h6v6h-6z" fill="#00cccb"/><path d="M616 295h6v6h-6z" fill="#00cfc2"/><path d="M622 295h6v6h-6z" fill="#00d2b9"/><path d="M628 295h6v6h-6z" fill="#00d5b1"/><path d="M634 295h6v6h-6z" fill="#00d8a9"/><path d="M640 295h6v6h-6z" fill="#00d99e"/><path d="M646 295h6v6h-6z" fill="#00da95"/><path d="M652 295h6v6h-6z" fill="#00db8c"/><path d="M658 295h6v6h-6z" fill="#00dc85"/><path d="M664 295h6v6h-6z" fill="#00dd7f"/><path d="M670 295h6v6h-6z" fill="#00dd7a"/><path d="M676 295h6v6h-6z" fill="#00de76"/><path d="M682 295h6v6h-6z" fill="#00de74"/><path d="M688 295h6v6h-6z" fill="#00de73"/><path d="M694 295h6v6h-6z" fill="#00de72"/><path d="M700 295h6v6h-6z" fill="#00de70"/><path d="M706 295h6v6h-6z" fill="#00de6e"/><path d="M712 295h6v6h-6z" fill="#00df6d"/><path d="M214 301h6v6h-6z" fill="#ffaa00"/><path d="M220 301h6v6h-6z" fill="#ffac00"/><path d="M226 301h6v6h-6z" fill="#ffaf00"/><path d="M232 301h6v6h-6z" fill="#ffb100"/><path d="M238 301h6v6h-6z" fill="#ffb200"/><path d="M244 301h6v6h-6z" fill="#ffb300"/><path d="M250 301h12v6h-12z" fill="#ffb400"/><path d="M262 301h6v6h-6z" fill="#ffb500"/><path d="M268 301h6v6h-6z" fill="#ffb600"/><path d="M274 301h6v6h-6z" fill="#ffb800"/><path d="M280 301h6v6h-6z" fill="#ffba00"/><path d="M286 301h6v6h-6z" fill="#ffbc00"/><path d="M292 301h6v6h-6z" fill="#ffbe00"/><path d="M298 301h6v6h-6z" fill="#ffc100"/><path d="M304 301h6v6h-6z" fill="#ffc300"/><path d="M310 301h6v6h-6z" fill="#ffc700"/><path d="M316 301h6v6h-6z" fill="#ffcd00"/><path d="M322 301h6v6h-6z" fill="#ffd500"/><path d="M328 301h6v6h-6z" fill="#ffe008"/><path d="M334 301h6v6h-6z" fill="#ffed16"/><path d="M340 301h6v6h-6z" fill="#fffb24"/><path d="M346 301h6v6h-6z" fill="#ebff23"/><path d="M352 301h6v6h-6z" fill="#ceff1d"/><path d="M358 301h6v6h-6z" fill="#b4ff18"/><path d="M364 301h6v6h-6z" fill="#92fd18"/><path d="M370 301h6v6h-6z" fill="#77fb18"/><path d="M376 301h6v6h-6z" fill="#5ff918"/><path d="M382 301h6v6h-6z" fill="#49f818"/><path d="M388 301h6v6h-6z" fill="#3df716"/><path d="M394 301h6v6h-6z" fill="#35f614"/><path d="M400 301h6v6h-6z" fill="#30f513"/><path d="M406 301h6v6h-6z" fill="#2df512"/><path d="M412 301h6v6h-6z" fill="#30f513"/><path d="M418 301h6v6h-6z" fill="#37f614"/><path d="M424 301h6v6h-6z" fill="#3bf715"/><path d="M430 301h6v6h-6z" fill="#3df716"/><path d="M436 301h6v6h-6z" fill="#3ef716"/><path d="M442 301h6v6h-6z" fill="#3ff716"/><path d="M448 301h6v6h-6z" fill="#40f716"/><path d="M454 301h6v6h-6z" fill="#43f717"/><path d="M460 301h6v6h-6z" fill="#49f818"/><path d="M466 301h6v6h-6z" fill="#55f918"/><path d="M472 301h6v6h-6z" fill="#64fa18"/><path d="M478 301h6v6h-6z" fill="#76fb18"/><path d="M484 301h6v6h-6z" fill="#8afc18"/><path d="M490 301h6v6h-6z" fill="#a0fe18"/><path d="M496 301h6v6h-6z" fill="#b9ff18"/><path d="M502 301h6v6h-6z" fill="#ceff1d"/><path d="M508 301h6v6h-6z" fill="#d7ff1f"/><path d="M514 301h6v6h-6z" fill="#c2ff1a"/><path d="M520 301h6v6h-6z" fill="#82fc18"/><path d="M526 301h6v6h-6z" fill="#32f613"/><path d="M532 301h6v6h-6z" fill="#00ec1c"/><path d="M538 301h6v6h-6z" fill="#00de71"/><path d="M544 301h6v6h-6z" fill="#00d4b4"/><path d="M550 301h6v6h-6z" fill="#00c2da"/><path d="M556 301h6v6h-6z" fill="#00a8e3"/><path d="M562 301h12v6h-12z" fill="#009ee6"/><path d="M574 301h6v6h-6z" fill="#00a4e4"/><path d="M580 301h6v6h-6z" fill="#00ade1"/><path d="M586 301h6v6h-6z" fill="#00b7de"/><path d="M592 301h6v6h-6z" fill="#00bfdb"/><path d="M598 301h6v6h-6z" fill="#00c7d8"/><path d="M604 301h6v6h-6z" fill="#00cad2"/><path d="M610 301h6v6h-6z" fill="#00cdca"/><path d="M616 301h6v6h-6z" fill="#00d0c1"/><path d="M622 301h6v6h-6z" fill="#00d3b8"/><path d="M628 301h6v6h-6z" fill="#00d5b0"/><path d="M634 301h6v6h-6z" fill="#00d8a7"/><path d="M640 301h6v6h-6z" fill="#00d99d"/><path d="M646 301h6v6h-6z" fill="#00da93"/><path d="M652 301h6v6h-6z" fill="#00db8b"/><path d="M658 301h6v6h-6z" fill="#00dc84"/><path d="M664 301h6v6h-6z" fill="#00dd7e"/><path d="M670 301h6v6h-6z" fill="#00dd79"/><path d="M676 301h6v6h-6z" fill="#00de76"/><path d="M682 301h6v6h-6z" fill="#00de74"/><path d="M688 301h6v6h-6z" fill="#00de73"/><path d="M694 301h6v6h-6z" fill="#00de71"/><path d="M700 301h6v6h-6z" fill="#00de70"/><path d="M706 301h6v6h-6z" fill="#00de6e"/><path d="M712 301h6v6h-6z" fill="#00df6d"/><path d="M214 307h6v6h-6z" fill="#ffa500"/><path d="M220 307h6v6h-6z" fill="#ffa700"/><path d="M226 307h6v6h-6z" fill="#ffa900"/><path d="M232 307h6v6h-6z" fill="#ffab00"/><path d="M238 307h6v6h-6z" fill="#ffac00"/><path d="M244 307h6v6h-6z" fill="#ffad00"/><path d="M250 307h6v6h-6z" fill="#ffae00"/><path d="M256 307h6v6h-6z" fill="#ffaf00"/><path d="M262 307h6v6h-6z" fill="#ffb000"/><path d="M268 307h6v6h-6z" fill="#ffb100"/><path d="M274 307h6v6h-6z" fill="#ffb200"/><path d="M280 307h6v6h-6z" fill="#ffb400"/><path d="M286 307h6v6h-6z" fill="#ffb500"/><path d="M292 307h6v6h-6z" fill="#ffb700"/><path d="M298 307h6v6h-6z" fill="#ffba00"/><path d="M304 307h6v6h-6z" fill="#ffbe00"/><path d="M310 307h6v6h-6z" fill="#ffc300"/><path d="M316 307h6v6h-6z" fill="#ffcb00"/><path d="M322 307h6v6h-6z" fill="#ffd600"/><path d="M328 307h6v6h-6z" fill="#ffe50d"/><path d="M334 307h6v6h-6z" fill="#fff61f"/><path d="M340 307h6v6h-6z" fill="#eeff24"/><path d="M346 307h6v6h-6z" fill="#cdff1d"/><path d="M352 307h6v6h-6z" fill="#affe18"/><path d="M358 307h6v6h-6z" fill="#8efc18"/><path d="M364 307h6v6h-6z" fill="#72fb18"/><path d="M370 307h6v6h-6z" fill="#59f918"/><path d="M376 307h6v6h-6z" fill="#42f717"/><path d="M382 307h6v6h-6z" fill="#2ff512"/><path d="M388 307h6v6h-6z" fill="#1cf30e"/><path d="M394 307h6v6h-6z" fill="#0ff20b"/><path d="M400 307h6v6h-6z" fill="#09f10a"/><path d="M406 307h6v6h-6z" fill="#08f10a"/><path d="M412 307h6v6h-6z" fill="#0ef20b"/><path d="M418 307h6v6h-6z" fill="#19f30d"/><path d="M424 307h6v6h-6z" fill="#23f410"/><path d="M430 307h6v6h-6z" fill="#2bf512"/><path d="M436 307h6v6h-6z" fill="#2ff512"/><path d="M442 307h6v6h-6z" fill="#30f513"/><path d="M448 307h6v6h-6z" fill="#32f613"/><path d="M454 307h6v6h-6z" fill="#35f614"/><path d="M460 307h6v6h-6z" fill="#3bf715"/><path d="M466 307h6v6h-6z" fill="#43f717"/><path d="M472 307h6v6h-6z" fill="#51f918"/><path d="M478 307h6v6h-6z" fill="#62fa18"/><path d="M484 307h6v6h-6z" fill="#75fb18"/><path d="M490 307h6v6h-6z" fill="#8afc18"/><path d="M496 307h6v6h-6z" fill="#a0fd18"/><path d="M502 307h6v6h-6z" fill="#b3ff18"/><path d="M508 307h6v6h-6z" fill="#b6ff18"/><path d="M514 307h6v6h-6z" fill="#9afd18"/><path d="M520 307h6v6h-6z" fill="#5ef918"/><path d="M526 307h6v6h-6z" fill="#21f40f"/><path d="M532 307h6v6h-6z" fill="#00ea2c"/><path d="M538 307h6v6h-6z" fill="#00dd78"/><path d="M544 307h6v6h-6z" fill="#00d4b4"/><path d="M550 307h6v6h-6z" fill="#00c8d8"/><path d="M556 307h6v6h-6z" fill="#00afe0"/><path d="M562 307h6v6h-6z" fill="#00a3e4"/><path d="M568 307h6v6h-6z" fill="#00a0e5"/><path d="M574 307h6v6h-6z" fill="#00a4e4"/><path d="M580 307h6v6h-6z" fill="#00ace1"/><path d="M586 307h6v6h-6z" fill="#00b5de"/><path d="M592 307h6v6h-6z" fill="#00bddc"/><path d="M598 307h6v6h-6z" fill="#00c5d9"/><path d="M604 307h6v6h-6z" fill="#00cad3"/><path d="M610 307h6v6h-6z" fill="#00cccb"/><path d="M616 307h6v6h-6z" fill="#00cfc2"/><path d="M622 307h6v6h-6z" fill="#00d3b8"/><path d="M628 307h6v6h-6z" fill="#00d6af"/><path d="M634 307h6v6h-6z" fill="#00d8a7"/><path d="M640 307h6v6h-6z" fill="#00d99b"/><path d="M646 307h6v6h-6z" fill="#00da92"/><path d="M652 307h6v6h-6z" fill="#00db89"/><path d="M658 307h6v6h-6z" fill="#00dc83"/><path d="M664 307h6v6h-6z" fill="#00dd7d"/><path d="M670 307h6v6h-6z" fill="#00dd79"/><path d="M676 307h6v6h-6z" fill="#00de76"/><path d="M682 307h6v6h-6z" fill="#00de74"/><path d="M688 307h6v6h-6z" fill="#00de72"/><path d="M694 307h6v6h-6z" fill="#00de71"/><path d="M700 307h6v6h-6z" fill="#00de70"/><path d="M706 307h6v6h-6z" fill="#00de6e"/><path d="M712 307h6v6h-6z" fill="#00df6d"/><path d="M214 313h6v6h-6z" fill="#ffa000"/><path d="M220 313h6v6h-6z" fill="#ffa100"/><path d="M226 313h6v6h-6z" fill="#ffa300"/><path d="M232 313h6v6h-6z" fill="#ffa400"/><path d="M238 313h6v6h-6z" fill="#ffa500"/><path d="M244 313h6v6h-6z" fill="#ffa700"/><path d="M250 313h6v6h-6z" fill="#ffa800"/><path d="M256 313h6v6h-6z" fill="#ffa900"/><path d="M262 313h6v6h-6z" fill="#ffaa00"/><path d="M268 313h6v6h-6z" fill="#ffab00"/><path d="M274 313h6v6h-6z" fill="#ffac00"/><path d="M280 313h6v6h-6z" fill="#ffad00"/><path d="M286 313h6v6h-6z" fill="#ffae00"/><path d="M292 313h6v6h-6z" fill="#ffb000"/><path d="M298 313h6v6h-6z" fill="#ffb300"/><path d="M304 313h6v6h-6z" fill="#ffb700"/><path d="M310 313h6v6h-6z" fill="#ffbe00"/><path d="M316 313h6v6h-6z" fill="#ffc800"/><path d="M322 313h6v6h-6z" fill="#ffd600"/><path d="M328 313h6v6h-6z" fill="#ffe810"/><path d="M334 313h6v6h-6z" fill="#fffd26"/><path d="M340 313h6v6h-6z" fill="#d8ff1f"/><path d="M346 313h6v6h-6z" fill="#acfe18"/><path d="M352 313h6v6h-6z" fill="#84fc18"/><path d="M358 313h6v6h-6z" fill="#68fa18"/><path d="M364 313h6v6h-6z" fill="#50f918"/><path d="M370 313h6v6h-6z" fill="#3ef716"/><path d="M376 313h6v6h-6z" fill="#2bf512"/><path d="M382 313h6v6h-6z" fill="#12f20c"/><path d="M388 313h6v6h-6z" fill="#00ee13"/><path d="M394 313h6v6h-6z" fill="#00ea27"/><path d="M400 313h6v6h-6z" fill="#00ea2b"/><path d="M406 313h6v6h-6z" fill="#00ea27"/><path d="M412 313h6v6h-6z" fill="#00ec1c"/><path d="M418 313h6v6h-6z" fill="#00ef0c"/><path d="M424 313h6v6h-6z" fill="#0df10b"/><path d="M430 313h6v6h-6z" fill="#1af30e"/><path d="M436 313h6v6h-6z" fill="#1ff30f"/><path d="M442 313h6v6h-6z" fill="#20f40f"/><path d="M448 313h6v6h-6z" fill="#22f410"/><path d="M454 313h6v6h-6z" fill="#26f411"/><path d="M460 313h6v6h-6z" fill="#2df512"/><path d="M466 313h6v6h-6z" fill="#36f614"/><path d="M472 313h6v6h-6z" fill="#40f716"/><path d="M478 313h6v6h-6z" fill="#4df818"/><path d="M484 313h6v6h-6z" fill="#5ff918"/><path d="M490 313h6v6h-6z" fill="#71fb18"/><path d="M496 313h6v6h-6z" fill="#81fc18"/><path d="M502 313h6v6h-6z" fill="#8bfc18"/><path d="M508 313h6v6h-6z" fill="#86fc18"/><path d="M514 313h6v6h-6z" fill="#6afa18"/><path d="M520 313h6v6h-6z" fill="#3cf715"/><path d="M526 313h6v6h-6z" fill="#0df10b"/><path d="M532 313h6v6h-6z" fill="#00e73c"/><path d="M538 313h6v6h-6z" fill="#00dd7e"/><path d="M544 313h6v6h-6z" fill="#00d5b2"/><path d="M550 313h6v6h-6z" fill="#00cad3"/><path d="M556 313h6v6h-6z" fill="#00b6de"/><path d="M562 313h6v6h-6z" fill="#00a9e2"/><path d="M568 313h6v6h-6z" fill="#00a4e4"/><path d="M574 313h6v6h-6z" fill="#00a6e3"/><path d="M580 313h6v6h-6z" fill="#00ace1"/><path d="M586 313h6v6h-6z" fill="#00b3df"/><path d="M592 313h6v6h-6z" fill="#00bbdc"/><path d="M598 313h6v6h-6z" fill="#00c3da"/><path d="M604 313h6v6h-6z" fill="#00c9d4"/><path d="M610 313h6v6h-6z" fill="#00cccc"/><path d="M616 313h6v6h-6z" fill="#00cfc2"/><path d="M622 313h6v6h-6z" fill="#00d2b9"/><path d="M628 313h6v6h-6z" fill="#00d6af"/><path d="M634 313h6v6h-6z" fill="#00d8a6"/><path d="M640 313h6v6h-6z" fill="#00d99b"/><path d="M646 313h6v6h-6z" fill="#00db91"/><path d="M652 313h6v6h-6z" fill="#00db89"/><path d="M658 313h6v6h-6z" fill="#00dc82"/><path d="M664 313h6v6h-6z" fill="#00dd7d"/><path d="M670 313h6v6h-6z" fill="#00dd79"/><path d="M676 313h6v6h-6z" fill="#00de76"/><path d="M682 313h6v6h-6z" fill="#00de74"/><path d="M688 313h6v6h-6z" fill="#00de72"/><path d="M694 313h6v6h-6z" fill="#00de71"/><path d="M700 313h6v6h-6z" fill="#00de6f"/><path d="M706 313h6v6h-6z" fill="#00de6e"/><path d="M712 313h6v6h-6z" fill="#00df6d"/><path d="M214 319h6v6h-6z" fill="#ff9b00"/><path d="M220 319h6v6h-6z" fill="#ff9c00"/><path d="M226 319h6v6h-6z" fill="#ff9d00"/><path d="M232 319h6v6h-6z" fill="#ff9e00"/><path d="M238 319h6v6h-6z" fill="#ff9f00"/><path d="M244 319h6v6h-6z" fill="#ffa000"/><path d="M250 319h6v6h-6z" fill="#ffa200"/><path d="M256 319h6v6h-6z" fill="#ffa300"/><path d="M262 319h6v6h-6z" fill="#ffa400"/><path d="M268 319h12v6h-12z" fill="#ffa500"/><path d="M280 319h6v6h-6z" fill="#ffa600"/><path d="M286 319h6v6h-6z" fill="#ffa700"/><path d="M292 319h6v6h-6z" fill="#ffa800"/><path d="M298 319h6v6h-6z" fill="#ffab00"/><path d="M304 319h6v6h-6z" fill="#ffb000"/><path d="M310 319h6v6h-6z" fill="#ffb700"/><path d="M316 319h6v6h-6z" fill="#ffc300"/><path d="M322 319h6v6h-6z" fill="#ffd300"/><path d="M328 319h6v6h-6z" fill="#ffe811"/><path d="M334 319h6v6h-6z" fill="#ffff28"/><path d="M340 319h6v6h-6z" fill="#d2ff1e"/><path d="M346 319h6v6h-6z" fill="#97fd18"/><path d="M352 319h6v6h-6z" fill="#6afa18"/><path d="M358 319h6v6h-6z" fill="#46f818"/><path d="M364 319h6v6h-6z" fill="#35f614"/><path d="M370 319h6v6h-6z" fill="#26f410"/><path d="M376 319h6v6h-6z" fill="#11f20c"/><path d="M382 319h6v6h-6z" fill="#00ed19"/><path d="M388 319h6v6h-6z" fill="#00e544"/><path d="M394 319h6v6h-6z" fill="#00e15a"/><path d="M400 319h6v6h-6z" fill="#00e254"/><path d="M406 319h6v6h-6z" fill="#00e545"/><path d="M412 319h6v6h-6z" fill="#00e835"/><path d="M418 319h6v6h-6z" fill="#00eb25"/><path d="M424 319h6v6h-6z" fill="#00ef0b"/><path d="M430 319h6v6h-6z" fill="#0cf10b"/><path d="M436 319h6v6h-6z" fill="#0df10b"/><path d="M442 319h6v6h-6z" fill="#0ff20b"/><path d="M448 319h6v6h-6z" fill="#12f20c"/><path d="M454 319h6v6h-6z" fill="#17f30d"/><path d="M460 319h6v6h-6z" fill="#1ff30f"/><path d="M466 319h6v6h-6z" fill="#28f411"/><path d="M472 319h6v6h-6z" fill="#32f613"/><path d="M478 319h6v6h-6z" fill="#3df716"/><path d="M484 319h6v6h-6z" fill="#48f818"/><path d="M490 319h6v6h-6z" fill="#56f918"/><path d="M496 319h6v6h-6z" fill="#61fa18"/><path d="M502 319h6v6h-6z" fill="#64fa18"/><path d="M508 319h6v6h-6z" fill="#5af918"/><path d="M514 319h6v6h-6z" fill="#41f717"/><path d="M520 319h6v6h-6z" fill="#23f410"/><path d="M526 319h6v6h-6z" fill="#00ee11"/><path d="M532 319h6v6h-6z" fill="#00e44c"/><path d="M538 319h6v6h-6z" fill="#00dc84"/><path d="M544 319h6v6h-6z" fill="#00d5b1"/><path d="M550 319h6v6h-6z" fill="#00cbce"/><path d="M556 319h6v6h-6z" fill="#00bcdc"/><path d="M562 319h6v6h-6z" fill="#00aee1"/><path d="M568 319h12v6h-12z" fill="#00a7e3"/><path d="M580 319h6v6h-6z" fill="#00abe2"/><path d="M586 319h6v6h-6z" fill="#00b2df"/><path d="M592 319h6v6h-6z" fill="#00b9dd"/><path d="M598 319h6v6h-6z" fill="#00c1da"/><path d="M604 319h6v6h-6z" fill="#00c8d7"/><path d="M610 319h6v6h-6z" fill="#00cccd"/><path d="M616 319h6v6h-6z" fill="#00cfc3"/><path d="M622 319h6v6h-6z" fill="#00d2b9"/><path d="M628 319h6v6h-6z" fill="#00d5b0"/><path d="M634 319h6v6h-6z" fill="#00d8a6"/><path d="M640 319h6v6h-6z" fill="#00d99b"/><path d="M646 319h6v6h-6z" fill="#00db91"/><path d="M652 319h6v6h-6z" fill="#00dc88"/><path d="M658 319h6v6h-6z" fill="#00dc82"/><path d="M664 319h6v6h-6z" fill="#00dd7d"/><path d="M670 319h6v6h-6z" fill="#00dd79"/><path d="M676 319h6v6h-6z" fill="#00de76"/><path d="M682 319h6v6h-6z" fill="#00de74"/><path d="M688 319h6v6h-6z" fill="#00de72"/><path d="M694 319h6v6h-6z" fill="#00de70"/><path d="M700 319h6v6h-6z" fill="#00de6f"/><path d="M706 319h6v6h-6z" fill="#00de6e"/><path d="M712 319h6v6h-6z" fill="#00df6c"/><path d="M214 325h6v6h-6z" fill="#ff9600"/><path d="M220 325h12v6h-12z" fill="#ff9700"/><path d="M232 325h6v6h-6z" fill="#ff9800"/><path d="M238 325h6v6h-6z" fill="#ff9900"/><path d="M244 325h6v6h-6z" fill="#ff9b00"/><path d="M250 325h6v6h-6z" fill="#ff9c00"/><path d="M256 325h6v6h-6z" fill="#ff9d00"/><path d="M262 325h6v6h-6z" fill="#ff9e00"/><path d="M268 325h24v6h-24z" fill="#ff9f00"/><path d="M292 325h6v6h-6z" fill="#ffa000"/><path d="M298 325h6v6h-6z" fill="#ffa200"/><path d="M304 325h6v6h-6z" fill="#ffa700"/><path d="M310 325h6v6h-6z" fill="#ffb000"/><path d="M316 325h6v6h-6z" fill="#ffbc00"/><path d="M322 325h6v6h-6z" fill="#ffce00"/><path d="M328 325h6v6h-6z" fill="#ffe60e"/><path d="M334 325h6v6h-6z" fill="#ffff28"/><path d="M340 325h6v6h-6z" fill="#dbff20"/><path d="M346 325h6v6h-6z" fill="#b8ff18"/><path d="M352 325h6v6h-6z" fill="#5df918"/><path d="M358 325h6v6h-6z" fill="#2df512"/><path d="M364 325h6v6h-6z" fill="#15f20d"/><path d="M370 325h6v6h-6z" fill="#03f009"/><path d="M376 325h6v6h-6z" fill="#00eb24"/><path d="M382 325h6v6h-6z" fill="#00e34f"/><path d="M388 325h6v6h-6z" fill="#00de75"/><path d="M394 325h6v6h-6z" fill="#00dc82"/><path d="M400 325h6v6h-6z" fill="#00dd79"/><path d="M406 325h6v6h-6z" fill="#00df65"/><path d="M412 325h6v6h-6z" fill="#00e34f"/><path d="M418 325h6v6h-6z" fill="#00e834"/><path d="M424 325h6v6h-6z" fill="#00ed1b"/><path d="M430 325h6v6h-6z" fill="#00ee15"/><path d="M436 325h6v6h-6z" fill="#00ee16"/><path d="M442 325h6v6h-6z" fill="#00ef0b"/><path d="M448 325h6v6h-6z" fill="#04f009"/><path d="M454 325h6v6h-6z" fill="#0af10a"/><path d="M460 325h6v6h-6z" fill="#12f20c"/><path d="M466 325h6v6h-6z" fill="#1bf30e"/><path d="M472 325h6v6h-6z" fill="#24f410"/><path d="M478 325h6v6h-6z" fill="#2ef512"/><path d="M484 325h6v6h-6z" fill="#37f614"/><path d="M490 325h6v6h-6z" fill="#3ff716"/><path d="M496 325h6v6h-6z" fill="#44f817"/><path d="M502 325h6v6h-6z" fill="#43f717"/><path d="M508 325h6v6h-6z" fill="#3bf715"/><path d="M514 325h6v6h-6z" fill="#28f411"/><path d="M520 325h6v6h-6z" fill="#0cf10b"/><path d="M526 325h6v6h-6z" fill="#00ea27"/><path d="M532 325h6v6h-6z" fill="#00e15c"/><path d="M538 325h6v6h-6z" fill="#00db8b"/><path d="M544 325h6v6h-6z" fill="#00d5b2"/><path d="M550 325h6v6h-6z" fill="#00cccc"/><path d="M556 325h6v6h-6z" fill="#00bfdb"/><path d="M562 325h6v6h-6z" fill="#00b1e0"/><path d="M568 325h6v6h-6z" fill="#00a9e2"/><path d="M574 325h6v6h-6z" fill="#00a8e3"/><path d="M580 325h6v6h-6z" fill="#00aae2"/><path d="M586 325h6v6h-6z" fill="#00b0e0"/><path d="M592 325h6v6h-6z" fill="#00b6de"/><path d="M598 325h6v6h-6z" fill="#00bedb"/><path d="M604 325h6v6h-6z" fill="#00c7d8"/><path d="M610 325h6v6h-6z" fill="#00cbcf"/><path d="M616 325h6v6h-6z" fill="#00cec5"/><path d="M622 325h6v6h-6z" fill="#00d2ba"/><path d="M628 325h6v6h-6z" fill="#00d5b0"/><path d="M634 325h6v6h-6z" fill="#00d8a7"/><path d="M640 325h6v6h-6z" fill="#00d99b"/><path d="M646 325h6v6h-6z" fill="#00db90"/><path d="M652 325h6v6h-6z" fill="#00dc88"/><path d="M658 325h6v6h-6z" fill="#00dc81"/><path d="M664 325h6v6h-6z" fill="#00dd7c"/><path d="M670 325h6v6h-6z" fill="#00dd78"/><path d="M676 325h6v6h-6z" fill="#00de76"/><path d="M682 325h6v6h-6z" fill="#00de73"/><path d="M688 325h6v6h-6z" fill="#00de71"/><path d="M694 325h6v6h-6z" fill="#00de70"/><path d="M700 325h6v6h-6z" fill="#00de6f"/><path d="M706 325h6v6h-6z" fill="#00df6d"/><path d="M712 325h6v6h-6z" fill="#00df6c"/><path d="M214 331h12v6h-12z" fill="#ff9200"/><path d="M226 331h6v6h-6z" fill="#ff9300"/><path d="M232 331h6v6h-6z" fill="#ff9400"/><path d="M238 331h6v6h-6z" fill="#ff9500"/><path d="M244 331h6v6h-6z" fill="#ff9600"/><path d="M250 331h6v6h-6z" fill="#ff9700"/><path d="M256 331h12v6h-12z" fill="#ff9800"/><path d="M268 331h30v6h-30z" fill="#ff9900"/><path d="M298 331h6v6h-6z" fill="#ff9b00"/><path d="M304 331h6v6h-6z" fill="#ff9f00"/><path d="M310 331h6v6h-6z" fill="#ffa800"/><path d="M316 331h6v6h-6z" fill="#ffb500"/><path d="M322 331h6v6h-6z" fill="#ffc600"/><path d="M328 331h6v6h-6z" fill="#ffde06"/><path d="M334 331h6v6h-6z" fill="#fff720"/><path d="M340 331h6v6h-6z" fill="#dfff21"/><path d="M346 331h6v6h-6z" fill="#98fd18"/><path d="M352 331h6v6h-6z" fill="#3ef716"/><path d="M358 331h6v6h-6z" fill="#0cf10b"/><path d="M364 331h6v6h-6z" fill="#00ec1e"/><path d="M370 331h6v6h-6z" fill="#00e63f"/><path d="M376 331h6v6h-6z" fill="#00df6c"/><path d="M382 331h6v6h-6z" fill="#00da97"/><path d="M388 331h6v6h-6z" fill="#00d6af"/><path d="M394 331h6v6h-6z" fill="#00d5b2"/><path d="M400 331h6v6h-6z" fill="#00d7ac"/><path d="M406 331h6v6h-6z" fill="#00da98"/><path d="M412 331h6v6h-6z" fill="#00dd7b"/><path d="M418 331h6v6h-6z" fill="#00e15b"/><path d="M424 331h6v6h-6z" fill="#00e447"/><path d="M430 331h6v6h-6z" fill="#00e44b"/><path d="M436 331h6v6h-6z" fill="#00e834"/><path d="M442 331h6v6h-6z" fill="#00ec1b"/><path d="M448 331h6v6h-6z" fill="#00ef0e"/><path d="M454 331h6v6h-6z" fill="#00f008"/><path d="M460 331h6v6h-6z" fill="#06f109"/><path d="M466 331h6v6h-6z" fill="#0df10b"/><path d="M472 331h6v6h-6z" fill="#15f20d"/><path d="M478 331h6v6h-6z" fill="#1ef30f"/><path d="M484 331h6v6h-6z" fill="#27f411"/><path d="M490 331h6v6h-6z" fill="#2ef512"/><path d="M496 331h6v6h-6z" fill="#31f513"/><path d="M502 331h6v6h-6z" fill="#2ef512"/><path d="M508 331h6v6h-6z" fill="#25f410"/><path d="M514 331h6v6h-6z" fill="#13f20c"/><path d="M520 331h6v6h-6z" fill="#00ee12"/><path d="M526 331h6v6h-6z" fill="#00e73b"/><path d="M532 331h6v6h-6z" fill="#00df69"/><path d="M538 331h6v6h-6z" fill="#00da92"/><path d="M544 331h6v6h-6z" fill="#00d4b4"/><path d="M550 331h6v6h-6z" fill="#00cccc"/><path d="M556 331h6v6h-6z" fill="#00c1da"/><path d="M562 331h6v6h-6z" fill="#00b3df"/><path d="M568 331h6v6h-6z" fill="#00aae2"/><path d="M574 331h6v6h-6z" fill="#00a7e3"/><path d="M580 331h6v6h-6z" fill="#00a8e3"/><path d="M586 331h6v6h-6z" fill="#00ade1"/><path d="M592 331h6v6h-6z" fill="#00b3df"/><path d="M598 331h6v6h-6z" fill="#00bbdc"/><path d="M604 331h6v6h-6z" fill="#00c5d9"/><path d="M610 331h6v6h-6z" fill="#00cad1"/><path d="M616 331h6v6h-6z" fill="#00cec6"/><path d="M622 331h6v6h-6z" fill="#00d1bc"/><path d="M628 331h6v6h-6z" fill="#00d5b1"/><path d="M634 331h6v6h-6z" fill="#00d8a7"/><path d="M640 331h6v6h-6z" fill="#00da9a"/><path d="M646 331h6v6h-6z" fill="#00db90"/><path d="M652 331h6v6h-6z" fill="#00dc87"/><path d="M658 331h6v6h-6z" fill="#00dc80"/><path d="M664 331h6v6h-6z" fill="#00dd7b"/><path d="M670 331h6v6h-6z" fill="#00dd78"/><path d="M676 331h6v6h-6z" fill="#00de75"/><path d="M682 331h6v6h-6z" fill="#00de73"/><path d="M688 331h6v6h-6z" fill="#00de71"/><path d="M694 331h6v6h-6z" fill="#00de6f"/><path d="M700 331h6v6h-6z" fill="#00de6e"/><path d="M706 331h6v6h-6z" fill="#00df6d"/><path d="M712 331h6v6h-6z" fill="#00df6c"/><path d="M214 337h6v6h-6z" fill="#ff8e00"/><path d="M220 337h6v6h-6z" fill="#ff8f00"/><path d="M226 337h12v6h-12z" fill="#ff9000"/><path d="M238 337h6v6h-6z" fill="#ff9100"/><path d="M244 337h12v6h-12z" fill="#ff9200"/><path d="M256 337h42v6h-42z" fill="#ff9300"/><path d="M298 337h6v6h-6z" fill="#ff9400"/><path d="M304 337h6v6h-6z" fill="#ff9800"/><path d="M310 337h6v6h-6z" fill="#ff9f00"/><path d="M316 337h6v6h-6z" fill="#ffac00"/><path d="M322 337h6v6h-6z" fill="#ffbe00"/><path d="M328 337h6v6h-6z" fill="#ffd400"/><path d="M334 337h6v6h-6z" fill="#ffed16"/><path d="M340 337h6v6h-6z" fill="#ecff24"/><path d="M346 337h6v6h-6z" fill="#a4fe18"/><path d="M352 337h6v6h-6z" fill="#40f716"/><path d="M358 337h6v6h-6z" fill="#03f009"/><path d="M364 337h6v6h-6z" fill="#00e833"/><path d="M370 337h6v6h-6z" fill="#00df65"/><path d="M376 337h6v6h-6z" fill="#00d99f"/><path d="M382 337h6v6h-6z" fill="#00cccd"/><path d="M388 337h6v6h-6z" fill="#00b7de"/><path d="M394 337h6v6h-6z" fill="#00b6de"/><path d="M400 337h6v6h-6z" fill="#00c6d9"/><path d="M406 337h6v6h-6z" fill="#00cdc8"/><path d="M412 337h6v6h-6z" fill="#00d8a8"/><path d="M418 337h6v6h-6z" fill="#00dd7a"/><path d="M424 337h6v6h-6z" fill="#00e062"/><path d="M430 337h6v6h-6z" fill="#00e257"/><path d="M436 337h6v6h-6z" fill="#00e640"/><path d="M442 337h6v6h-6z" fill="#00eb24"/><path d="M448 337h6v6h-6z" fill="#00ed19"/><path d="M454 337h6v6h-6z" fill="#00ee15"/><path d="M460 337h6v6h-6z" fill="#00ee11"/><path d="M466 337h6v6h-6z" fill="#00f00a"/><path d="M472 337h6v6h-6z" fill="#06f109"/><path d="M478 337h6v6h-6z" fill="#0ef20b"/><path d="M484 337h6v6h-6z" fill="#16f20d"/><path d="M490 337h6v6h-6z" fill="#1cf30e"/><path d="M496 337h6v6h-6z" fill="#1ff30f"/><path d="M502 337h6v6h-6z" fill="#1cf30e"/><path d="M508 337h6v6h-6z" fill="#12f20c"/><path d="M514 337h6v6h-6z" fill="#00f008"/><path d="M520 337h6v6h-6z" fill="#00ea27"/><path d="M526 337h6v6h-6z" fill="#00e34d"/><path d="M532 337h6v6h-6z" fill="#00de74"/><path d="M538 337h6v6h-6z" fill="#00da99"/><path d="M544 337h6v6h-6z" fill="#00d3b6"/><path d="M550 337h6v6h-6z" fill="#00cccc"/><path d="M556 337h6v6h-6z" fill="#00c1da"/><path d="M562 337h6v6h-6z" fill="#00b3df"/><path d="M568 337h6v6h-6z" fill="#00a9e2"/><path d="M574 337h12v6h-12z" fill="#00a5e4"/><path d="M586 337h6v6h-6z" fill="#00a9e2"/><path d="M592 337h6v6h-6z" fill="#00b1e0"/><path d="M598 337h6v6h-6z" fill="#00b9dd"/><path d="M604 337h6v6h-6z" fill="#00c3da"/><path d="M610 337h6v6h-6z" fill="#00cad3"/><path d="M616 337h6v6h-6z" fill="#00cec7"/><path d="M622 337h6v6h-6z" fill="#00d1bc"/><path d="M628 337h6v6h-6z" fill="#00d5b1"/><path d="M634 337h6v6h-6z" fill="#00d8a7"/><path d="M640 337h6v6h-6z" fill="#00da9a"/><path d="M646 337h6v6h-6z" fill="#00db8f"/><path d="M652 337h6v6h-6z" fill="#00dc86"/><path d="M658 337h6v6h-6z" fill="#00dc80"/><path d="M664 337h6v6h-6z" fill="#00dd7a"/><path d="M670 337h6v6h-6z" fill="#00dd77"/><path d="M676 337h6v6h-6z" fill="#00de74"/><path d="M682 337h6v6h-6z" fill="#00de72"/><path d="M688 337h6v6h-6z" fill="#00de70"/><path d="M694 337h6v6h-6z" fill="#00de6f"/><path d="M700 337h6v6h-6z" fill="#00de6e"/><path d="M706 337h6v6h-6z" fill="#00df6d"/><path d="M712 337h6v6h-6z" fill="#00df6c"/><path d="M214 343h6v6h-6z" fill="#ff8a00"/><path d="M220 343h6v6h-6z" fill="#ff8b00"/><path d="M226 343h6v6h-6z" fill="#ff8c00"/><path d="M232 343h6v6h-6z" fill="#ff8d00"/><path d="M238 343h24v6h-24z" fill="#ff8e00"/><path d="M262 343h42v6h-42z" fill="#ff8d00"/><path d="M304 343h6v6h-6z" fill="#ff9000"/><path d="M310 343h6v6h-6z" fill="#ff9600"/><path d="M316 343h6v6h-6z" fill="#ffa100"/><path d="M322 343h6v6h-6z" fill="#ffb300"/><path d="M328 343h6v6h-6z" fill="#ffc900"/><path d="M334 343h6v6h-6z" fill="#ffe109"/><path d="M340 343h6v6h-6z" fill="#fff821"/><path d="M346 343h6v6h-6z" fill="#d9ff1f"/><path d="M352 343h6v6h-6z" fill="#8bfc18"/><path d="M358 343h6v6h-6z" fill="#34f614"/><path d="M364 343h6v6h-6z" fill="#0bf10a"/><path d="M370 343h6v6h-6z" fill="#00e641"/><path d="M376 343h6v6h-6z" fill="#00da96"/><path d="M382 343h6v6h-6z" fill="#00c1da"/><path d="M388 343h6v6h-6z" fill="#008fee"/><path d="M394 343h6v6h-6z" fill="#0088f2"/><path d="M400 343h6v6h-6z" fill="#00a2e5"/><path d="M406 343h6v6h-6z" fill="#00c0db"/><path d="M412 343h6v6h-6z" fill="#00d2bb"/><path d="M418 343h6v6h-6z" fill="#00db8b"/><path d="M424 343h6v6h-6z" fill="#00df6d"/><path d="M430 343h6v6h-6z" fill="#00e05f"/><path d="M436 343h6v6h-6z" fill="#00e34d"/><path d="M442 343h6v6h-6z" fill="#00e739"/><path d="M448 343h6v6h-6z" fill="#00e92f"/><path d="M454 343h6v6h-6z" fill="#00ea2a"/><path d="M460 343h6v6h-6z" fill="#00eb25"/><path d="M466 343h6v6h-6z" fill="#00ec1f"/><path d="M472 343h6v6h-6z" fill="#00ed16"/><path d="M478 343h6v6h-6z" fill="#00ef0c"/><path d="M484 343h6v6h-6z" fill="#05f109"/><path d="M490 343h6v6h-6z" fill="#0bf10a"/><path d="M496 343h6v6h-6z" fill="#0ef20b"/><path d="M502 343h6v6h-6z" fill="#0bf10a"/><path d="M508 343h6v6h-6z" fill="#01f008"/><path d="M514 343h6v6h-6z" fill="#00ec1c"/><path d="M520 343h6v6h-6z" fill="#00e73a"/><path d="M526 343h6v6h-6z" fill="#00e15d"/><path d="M532 343h6v6h-6z" fill="#00dd7e"/><path d="M538 343h6v6h-6z" fill="#00d9a0"/><path d="M544 343h6v6h-6z" fill="#00d2b9"/><path d="M550 343h6v6h-6z" fill="#00cbce"/><path d="M556 343h6v6h-6z" fill="#00c0db"/><path d="M562 343h6v6h-6z" fill="#00b2df"/><path d="M568 343h6v6h-6z" fill="#00a8e3"/><path d="M574 343h6v6h-6z" fill="#00a3e4"/><path d="M580 343h6v6h-6z" fill="#00a2e5"/><path d="M586 343h6v6h-6z" fill="#00a7e3"/><path d="M592 343h6v6h-6z" fill="#00afe0"/><path d="M598 343h6v6h-6z" fill="#00b8dd"/><path d="M604 343h6v6h-6z" fill="#00c2da"/><path d="M610 343h6v6h-6z" fill="#00cad3"/><path d="M616 343h6v6h-6z" fill="#00cec7"/><path d="M622 343h6v6h-6z" fill="#00d1bc"/><path d="M628 343h6v6h-6z" fill="#00d5b1"/><path d="M634 343h6v6h-6z" fill="#00d8a6"/><path d="M640 343h6v6h-6z" fill="#00da99"/><path d="M646 343h6v6h-6z" fill="#00db8e"/><path d="M652 343h6v6h-6z" fill="#00dc85"/><path d="M658 343h6v6h-6z" fill="#00dd7e"/><path d="M664 343h6v6h-6z" fill="#00dd79"/><path d="M670 343h6v6h-6z" fill="#00de76"/><path d="M676 343h6v6h-6z" fill="#00de73"/><path d="M682 343h6v6h-6z" fill="#00de71"/><path d="M688 343h6v6h-6z" fill="#00de70"/><path d="M694 343h12v6h-12z" fill="#00de6e"/><path d="M706 343h6v6h-6z" fill="#00df6d"/><path d="M712 343h6v6h-6z" fill="#00df6c"/><path d="M214 349h6v6h-6z" fill="#ff8600"/><path d="M220 349h6v6h-6z" fill="#ff8700"/><path d="M226 349h6v6h-6z" fill="#ff8800"/><path d="M232 349h24v6h-24z" fill="#ff8900"/><path d="M256 349h18v6h-18z" fill="#ff8800"/><path d="M274 349h12v6h-12z" fill="#ff8700"/><path d="M286 349h18v6h-18z" fill="#ff8600"/><path d="M304 349h6v6h-6z" fill="#ff8700"/><path d="M310 349h6v6h-6z" fill="#ff8c00"/><path d="M316 349h6v6h-6z" fill="#ff9500"/><path d="M322 349h6v6h-6z" fill="#ffa400"/><path d="M328 349h6v6h-6z" fill="#ffb900"/><path d="M334 349h6v6h-6z" fill="#ffce00"/><path d="M340 349h6v6h-6z" fill="#ffe20a"/><path d="M346 349h6v6h-6z" fill="#fff51e"/><path d="M352 349h6v6h-6z" fill="#e0ff21"/><path d="M358 349h6v6h-6z" fill="#b9ff18"/><path d="M364 349h6v6h-6z" fill="#c2ff1a"/><path d="M370 349h6v6h-6z" fill="#64fa18"/><path d="M376 349h6v6h-6z" fill="#00e640"/><path d="M382 349h6v6h-6z" fill="#00d0c1"/><path d="M388 349h6v6h-6z" fill="#0098e8"/><path d="M394 349h6v6h-6z" fill="#008cf0"/><path d="M400 349h6v6h-6z" fill="#0097e9"/><path d="M406 349h6v6h-6z" fill="#00b7de"/><path d="M412 349h6v6h-6z" fill="#00cfc4"/><path d="M418 349h6v6h-6z" fill="#00d99f"/><path d="M424 349h6v6h-6z" fill="#00dd7e"/><path d="M430 349h6v6h-6z" fill="#00de6e"/><path d="M436 349h6v6h-6z" fill="#00e063"/><path d="M442 349h6v6h-6z" fill="#00e158"/><path d="M448 349h6v6h-6z" fill="#00e34e"/><path d="M454 349h6v6h-6z" fill="#00e546"/><path d="M460 349h6v6h-6z" fill="#00e63e"/><path d="M466 349h6v6h-6z" fill="#00e836"/><path d="M472 349h6v6h-6z" fill="#00e92e"/><path d="M478 349h6v6h-6z" fill="#00eb24"/><path d="M484 349h6v6h-6z" fill="#00ed19"/><path d="M490 349h6v6h-6z" fill="#00ef0f"/><path d="M496 349h6v6h-6z" fill="#00f00a"/><path d="M502 349h6v6h-6z" fill="#00ef0d"/><path d="M508 349h6v6h-6z" fill="#00ed1a"/><path d="M514 349h6v6h-6z" fill="#00e92f"/><path d="M520 349h6v6h-6z" fill="#00e44b"/><path d="M526 349h6v6h-6z" fill="#00df6a"/><path d="M532 349h6v6h-6z" fill="#00dc88"/><path d="M538 349h6v6h-6z" fill="#00d8a8"/><path d="M544 349h6v6h-6z" fill="#00d1bd"/><path d="M550 349h6v6h-6z" fill="#00cbd0"/><path d="M556 349h6v6h-6z" fill="#00bfdb"/><path d="M562 349h6v6h-6z" fill="#00b2df"/><path d="M568 349h6v6h-6z" fill="#00a7e3"/><path d="M574 349h6v6h-6z" fill="#00a2e5"/><path d="M580 349h6v6h-6z" fill="#00a1e5"/><path d="M586 349h6v6h-6z" fill="#00a6e3"/><path d="M592 349h6v6h-6z" fill="#00b0e0"/><path d="M598 349h6v6h-6z" fill="#00badd"/><path d="M604 349h6v6h-6z" fill="#00c4d9"/><path d="M610 349h6v6h-6z" fill="#00cad2"/><path d="M616 349h6v6h-6z" fill="#00cec6"/><path d="M622 349h6v6h-6z" fill="#00d2ba"/><path d="M628 349h6v6h-6z" fill="#00d6af"/><path d="M634 349h6v6h-6z" fill="#00d8a4"/><path d="M640 349h6v6h-6z" fill="#00da97"/><path d="M646 349h6v6h-6z" fill="#00db8c"/><path d="M652 349h6v6h-6z" fill="#00dc84"/><path d="M658 349h6v6h-6z" fill="#00dd7d"/><path d="M664 349h6v6h-6z" fill="#00dd78"/><path d="M670 349h6v6h-6z" fill="#00de75"/><path d="M676 349h6v6h-6z" fill="#00de72"/><path d="M682 349h6v6h-6z" fill="#00de70"/><path d="M688 349h6v6h-6z" fill="#00de6f"/><path d="M694 349h6v6h-6z" fill="#00de6e"/><path d="M700 349h6v6h-6z" fill="#00df6d"/><path d="M706 349h12v6h-12z" fill="#00df6c"/><path d="M214 355h6v6h-6z" fill="#ff8200"/><path d="M220 355h6v6h-6z" fill="#ff8300"/><path d="M226 355h30v6h-30z" fill="#ff8400"/><path d="M256 355h6v6h-6z" fill="#ff8300"/><path d="M262 355h12v6h-12z" fill="#ff8200"/><path d="M274 355h6v6h-6z" fill="#ff8100"/><path d="M280 355h6v6h-6z" fill="#ff8000"/><path d="M286 355h6v6h-6z" fill="#ff7f00"/><path d="M292 355h12v6h-12z" fill="#ff7e00"/><path d="M304 355h6v6h-6z" fill="#ff7f00"/><path d="M310 355h6v6h-6z" fill="#ff8200"/><path d="M316 355h6v6h-6z" fill="#ff8700"/><path d="M322 355h6v6h-6z" fill="#ff9100"/><path d="M328 355h6v6h-6z" fill="#ffa200"/><path d="M334 355h6v6h-6z" fill="#ffb700"/><path d="M340 355h6v6h-6z" fill="#ffcb00"/><path d="M346 355h6v6h-6z" fill="#ffd800"/><path d="M352 355h6v6h-6z" fill="#ffe60e"/><path d="M358 355h6v6h-6z" fill="#fff21b"/><path d="M364 355h6v6h-6z" fill="#ffee17"/><path d="M370 355h6v6h-6z" fill="#daff20"/><path d="M376 355h6v6h-6z" fill="#27f411"/><path d="M382 355h6v6h-6z" fill="#00dd7f"/><path d="M388 355h6v6h-6z" fill="#00c9d6"/><path d="M394 355h6v6h-6z" fill="#00a7e3"/><path d="M400 355h6v6h-6z" fill="#00a8e3"/><path d="M406 355h6v6h-6z" fill="#00bddc"/><path d="M412 355h6v6h-6z" fill="#00cec7"/><path d="M418 355h6v6h-6z" fill="#00d7ab"/><path d="M424 355h6v6h-6z" fill="#00db90"/><path d="M430 355h6v6h-6z" fill="#00dc81"/><path d="M436 355h6v6h-6z" fill="#00dd7a"/><path d="M442 355h6v6h-6z" fill="#00de75"/><path d="M448 355h6v6h-6z" fill="#00df6c"/><path d="M454 355h6v6h-6z" fill="#00e063"/><path d="M460 355h6v6h-6z" fill="#00e159"/><path d="M466 355h6v6h-6z" fill="#00e350"/><path d="M472 355h6v6h-6z" fill="#00e546"/><path d="M478 355h6v6h-6z" fill="#00e73c"/><path d="M484 355h6v6h-6z" fill="#00e930"/><path d="M490 355h6v6h-6z" fill="#00eb25"/><path d="M496 355h6v6h-6z" fill="#00ec1e"/><path d="M502 355h6v6h-6z" fill="#00ec20"/><path d="M508 355h6v6h-6z" fill="#00e92c"/><path d="M514 355h6v6h-6z" fill="#00e640"/><path d="M520 355h6v6h-6z" fill="#00e15b"/><path d="M526 355h6v6h-6z" fill="#00de76"/><path d="M532 355h6v6h-6z" fill="#00da93"/><path d="M538 355h6v6h-6z" fill="#00d6ad"/><path d="M544 355h6v6h-6z" fill="#00d0c0"/><path d="M550 355h6v6h-6z" fill="#00cad2"/><path d="M556 355h6v6h-6z" fill="#00bedb"/><path d="M562 355h6v6h-6z" fill="#00b1e0"/><path d="M568 355h6v6h-6z" fill="#00a8e3"/><path d="M574 355h6v6h-6z" fill="#00a3e4"/><path d="M580 355h6v6h-6z" fill="#00a2e5"/><path d="M586 355h6v6h-6z" fill="#00a8e3"/><path d="M592 355h6v6h-6z" fill="#00b3df"/><path d="M598 355h6v6h-6z" fill="#00bddc"/><path d="M604 355h6v6h-6z" fill="#00c8d8"/><path d="M610 355h6v6h-6z" fill="#00cbce"/><path d="M616 355h6v6h-6z" fill="#00cfc2"/><path d="M622 355h6v6h-6z" fill="#00d3b7"/><path d="M628 355h6v6h-6z" fill="#00d6ad"/><path d="M634 355h6v6h-6z" fill="#00d9a1"/><path d="M640 355h6v6h-6z" fill="#00da95"/><path d="M646 355h6v6h-6z" fill="#00db8b"/><path d="M652 355h6v6h-6z" fill="#00dc83"/><path d="M658 355h6v6h-6z" fill="#00dd7c"/><path d="M664 355h6v6h-6z" fill="#00dd77"/><path d="M670 355h6v6h-6z" fill="#00de74"/><path d="M676 355h6v6h-6z" fill="#00de71"/><path d="M682 355h6v6h-6z" fill="#00de70"/><path d="M688 355h6v6h-6z" fill="#00de6f"/><path d="M694 355h6v6h-6z" fill="#00de6e"/><path d="M700 355h6v6h-6z" fill="#00df6d"/><path d="M706 355h12v6h-12z" fill="#00df6c"/><path d="M214 361h12v6h-12z" fill="#ff7e00"/><path d="M226 361h18v6h-18z" fill="#ff7f00"/><path d="M244 361h12v6h-12z" fill="#ff7e00"/><path d="M256 361h6v6h-6z" fill="#ff7d00"/><path d="M262 361h6v6h-6z" fill="#ff7c01"/><path d="M268 361h6v6h-6z" fill="#ff7b01"/><path d="M274 361h6v6h-6z" fill="#ff7901"/><path d="M280 361h6v6h-6z" fill="#ff7801"/><path d="M286 361h6v6h-6z" fill="#ff7601"/><path d="M292 361h18v6h-18z" fill="#ff7501"/><path d="M310 361h6v6h-6z" fill="#ff7701"/><path d="M316 361h6v6h-6z" fill="#ff7801"/><path d="M322 361h6v6h-6z" fill="#ff7c00"/><path d="M328 361h6v6h-6z" fill="#ff8700"/><path d="M334 361h6v6h-6z" fill="#ff9c00"/><path d="M340 361h6v6h-6z" fill="#ffb400"/><path d="M346 361h6v6h-6z" fill="#ffb900"/><path d="M352 361h6v6h-6z" fill="#ffbb00"/><path d="M358 361h6v6h-6z" fill="#ffca00"/><path d="M364 361h6v6h-6z" fill="#ffd800"/><path d="M370 361h6v6h-6z" fill="#fcff27"/><path d="M376 361h6v6h-6z" fill="#6afa18"/><path d="M382 361h6v6h-6z" fill="#00e931"/><path d="M388 361h6v6h-6z" fill="#00d9a1"/><path d="M394 361h6v6h-6z" fill="#00cccd"/><path d="M400 361h6v6h-6z" fill="#00c6d9"/><path d="M406 361h6v6h-6z" fill="#00c9d4"/><path d="M412 361h6v6h-6z" fill="#00cfc3"/><path d="M418 361h6v6h-6z" fill="#00d6af"/><path d="M424 361h6v6h-6z" fill="#00d99d"/><path d="M430 361h6v6h-6z" fill="#00da92"/><path d="M436 361h6v6h-6z" fill="#00db8e"/><path d="M442 361h6v6h-6z" fill="#00db8b"/><path d="M448 361h6v6h-6z" fill="#00dc83"/><path d="M454 361h6v6h-6z" fill="#00dd78"/><path d="M460 361h6v6h-6z" fill="#00de6f"/><path d="M466 361h6v6h-6z" fill="#00df66"/><path d="M472 361h6v6h-6z" fill="#00e05e"/><path d="M478 361h6v6h-6z" fill="#00e254"/><path d="M484 361h6v6h-6z" fill="#00e447"/><path d="M490 361h6v6h-6z" fill="#00e73c"/><path d="M496 361h12v6h-12z" fill="#00e834"/><path d="M508 361h6v6h-6z" fill="#00e63f"/><path d="M514 361h6v6h-6z" fill="#00e253"/><path d="M520 361h6v6h-6z" fill="#00df6a"/><path d="M526 361h6v6h-6z" fill="#00dc82"/><path d="M532 361h6v6h-6z" fill="#00d99d"/><path d="M538 361h6v6h-6z" fill="#00d4b3"/><path d="M544 361h6v6h-6z" fill="#00cfc4"/><path d="M550 361h6v6h-6z" fill="#00c9d4"/><path d="M556 361h6v6h-6z" fill="#00bddc"/><path d="M562 361h6v6h-6z" fill="#00b2df"/><path d="M568 361h6v6h-6z" fill="#00aae2"/><path d="M574 361h6v6h-6z" fill="#00a6e3"/><path d="M580 361h6v6h-6z" fill="#00a7e3"/><path d="M586 361h6v6h-6z" fill="#00ade1"/><path d="M592 361h6v6h-6z" fill="#00b7de"/><path d="M598 361h6v6h-6z" fill="#00c2da"/><path d="M604 361h6v6h-6z" fill="#00cad3"/><path d="M610 361h6v6h-6z" fill="#00cdc8"/><path d="M616 361h6v6h-6z" fill="#00d1be"/><path d="M622 361h6v6h-6z" fill="#00d4b3"/><path d="M628 361h6v6h-6z" fill="#00d7aa"/><path d="M634 361h6v6h-6z" fill="#00d99e"/><path d="M640 361h6v6h-6z" fill="#00da92"/><path d="M646 361h6v6h-6z" fill="#00db89"/><path d="M652 361h6v6h-6z" fill="#00dc81"/><path d="M658 361h6v6h-6z" fill="#00dd7b"/><path d="M664 361h6v6h-6z" fill="#00de76"/><path d="M670 361h6v6h-6z" fill="#00de73"/><path d="M676 361h6v6h-6z" fill="#00de71"/><path d="M682 361h6v6h-6z" fill="#00de6f"/><path d="M688 361h12v6h-12z" fill="#00de6e"/><path d="M700 361h6v6h-6z" fill="#00df6d"/><path d="M706 361h12v6h-12z" fill="#00df6c"/><path d="M214 367h24v6h-24z" fill="#ff7901"/><path d="M238 367h12v6h-12z" fill="#ff7801"/><path d="M250 367h6v6h-6z" fill="#ff7701"/><path d="M256 367h6v6h-6z" fill="#ff7601"/><path d="M262 367h6v6h-6z" fill="#ff7501"/><path d="M268 367h6v6h-6z" fill="#ff7402"/><path d="M274 367h6v6h-6z" fill="#ff7202"/><path d="M280 367h6v6h-6z" fill="#ff7002"/><path d="M286 367h6v6h-6z" fill="#ff6e02"/><path d="M292 367h6v6h-6z" fill="#ff6d02"/><path d="M298 367h6v6h-6z" fill="#ff6c02"/><path d="M304 367h6v6h-6z" fill="#ff6d02"/><path d="M310 367h6v6h-6z" fill="#ff6e02"/><path d="M316 367h6v6h-6z" fill="#ff6b03"/><path d="M322 367h6v6h-6z" fill="#ff6703"/><path d="M328 367h6v6h-6z" fill="#ff6803"/><path d="M334 367h6v6h-6z" fill="#ff8300"/><path d="M340 367h6v6h-6z" fill="#ffa300"/><path d="M346 367h6v6h-6z" fill="#ff9d00"/><path d="M352 367h6v6h-6z" fill="#ffa100"/><path d="M358 367h6v6h-6z" fill="#ffbb00"/><path d="M364 367h6v6h-6z" fill="#ffd100"/><path d="M370 367h6v6h-6z" fill="#fff820"/><path d="M376 367h6v6h-6z" fill="#9ffd18"/><path d="M382 367h6v6h-6z" fill="#12f20c"/><path d="M388 367h6v6h-6z" fill="#00e064"/><path d="M394 367h6v6h-6z" fill="#00d8a6"/><path d="M400 367h6v6h-6z" fill="#00d1bd"/><path d="M406 367h6v6h-6z" fill="#00d0c1"/><path d="M412 367h6v6h-6z" fill="#00d2bb"/><path d="M418 367h6v6h-6z" fill="#00d5b0"/><path d="M424 367h6v6h-6z" fill="#00d8a7"/><path d="M430 367h6v6h-6z" fill="#00d99f"/><path d="M436 367h6v6h-6z" fill="#00d99c"/><path d="M442 367h6v6h-6z" fill="#00da98"/><path d="M448 367h6v6h-6z" fill="#00da92"/><path d="M454 367h6v6h-6z" fill="#00db8a"/><path d="M460 367h6v6h-6z" fill="#00dc81"/><path d="M466 367h6v6h-6z" fill="#00dd79"/><path d="M472 367h6v6h-6z" fill="#00de71"/><path d="M478 367h6v6h-6z" fill="#00df69"/><path d="M484 367h6v6h-6z" fill="#00e060"/><path d="M490 367h6v6h-6z" fill="#00e255"/><path d="M496 367h6v6h-6z" fill="#00e34d"/><path d="M502 367h6v6h-6z" fill="#00e44c"/><path d="M508 367h6v6h-6z" fill="#00e256"/><path d="M514 367h6v6h-6z" fill="#00df66"/><path d="M520 367h6v6h-6z" fill="#00dd79"/><path d="M526 367h6v6h-6z" fill="#00db8f"/><path d="M532 367h6v6h-6z" fill="#00d8a8"/><path d="M538 367h6v6h-6z" fill="#00d3b8"/><path d="M544 367h6v6h-6z" fill="#00cdc8"/><path d="M550 367h6v6h-6z" fill="#00c8d7"/><path d="M556 367h6v6h-6z" fill="#00bddc"/><path d="M562 367h6v6h-6z" fill="#00b3df"/><path d="M568 367h6v6h-6z" fill="#00ace1"/><path d="M574 367h6v6h-6z" fill="#00aae2"/><path d="M580 367h6v6h-6z" fill="#00ace1"/><path d="M586 367h6v6h-6z" fill="#00b3df"/><path d="M592 367h6v6h-6z" fill="#00bddc"/><path d="M598 367h6v6h-6z" fill="#00c8d8"/><path d="M604 367h6v6h-6z" fill="#00cccd"/><path d="M610 367h6v6h-6z" fill="#00cfc2"/><path d="M616 367h6v6h-6z" fill="#00d3b8"/><path d="M622 367h6v6h-6z" fill="#00d6af"/><path d="M628 367h6v6h-6z" fill="#00d8a5"/><path d="M634 367h6v6h-6z" fill="#00da99"/><path d="M640 367h6v6h-6z" fill="#00db8f"/><path d="M646 367h6v6h-6z" fill="#00dc86"/><path d="M652 367h6v6h-6z" fill="#00dd7f"/><path d="M658 367h6v6h-6z" fill="#00dd7a"/><path d="M664 367h6v6h-6z" fill="#00de75"/><path d="M670 367h6v6h-6z" fill="#00de72"/><path d="M676 367h6v6h-6z" fill="#00de70"/><path d="M682 367h6v6h-6z" fill="#00de6f"/><path d="M688 367h6v6h-6z" fill="#00de6e"/><path d="M694 367h12v6h-12z" fill="#00df6d"/><path d="M706 367h12v6h-12z" fill="#00df6c"/><path d="M214 373h18v6h-18z" fill="#ff7402"/><path d="M232 373h6v6h-6z" fill="#ff7302"/><path d="M238 373h12v6h-12z" fill="#ff7202"/><path d="M250 373h6v6h-6z" fill="#ff7102"/><path d="M256 373h6v6h-6z" fill="#ff7002"/><path d="M262 373h6v6h-6z" fill="#ff6f02"/><path d="M268 373h6v6h-6z" fill="#ff6d02"/><path d="M274 373h6v6h-6z" fill="#ff6b03"/><path d="M280 373h6v6h-6z" fill="#ff6903"/><path d="M286 373h6v6h-6z" fill="#ff6703"/><path d="M292 373h6v6h-6z" fill="#ff6603"/><path d="M298 373h6v6h-6z" fill="#ff6503"/><path d="M304 373h6v6h-6z" fill="#ff6703"/><path d="M310 373h6v6h-6z" fill="#ff6803"/><path d="M316 373h6v6h-6z" fill="#ff6403"/><path d="M322 373h6v6h-6z" fill="#ff5c04"/><path d="M328 373h6v6h-6z" fill="#ff5c05"/><path d="M334 373h6v6h-6z" fill="#ff7601"/><path d="M340 373h6v6h-6z" fill="#ff9800"/><path d="M346 373h12v6h-12z" fill="#ff9000"/><path d="M358 373h6v6h-6z" fill="#ffac00"/><path d="M364 373h6v6h-6z" fill="#ffc900"/><path d="M370 373h6v6h-6z" fill="#fff119"/><path d="M376 373h6v6h-6z" fill="#bfff1a"/><path d="M382 373h6v6h-6z" fill="#36f614"/><path d="M388 373h6v6h-6z" fill="#00e92f"/><path d="M394 373h6v6h-6z" fill="#00dd7a"/><path d="M400 373h6v6h-6z" fill="#00d9a2"/><path d="M406 373h6v6h-6z" fill="#00d5b0"/><path d="M412 373h6v6h-6z" fill="#00d5b2"/><path d="M418 373h6v6h-6z" fill="#00d6af"/><path d="M424 373h6v6h-6z" fill="#00d7ab"/><path d="M430 373h6v6h-6z" fill="#00d8a8"/><path d="M436 373h6v6h-6z" fill="#00d8a6"/><path d="M442 373h6v6h-6z" fill="#00d9a3"/><path d="M448 373h6v6h-6z" fill="#00d99f"/><path d="M454 373h6v6h-6z" fill="#00da9a"/><path d="M460 373h6v6h-6z" fill="#00da93"/><path d="M466 373h6v6h-6z" fill="#00db8b"/><path d="M472 373h6v6h-6z" fill="#00dc84"/><path d="M478 373h6v6h-6z" fill="#00dd7e"/><path d="M484 373h6v6h-6z" fill="#00dd77"/><path d="M490 373h6v6h-6z" fill="#00de6f"/><path d="M496 373h6v6h-6z" fill="#00df68"/><path d="M502 373h6v6h-6z" fill="#00df66"/><path d="M508 373h6v6h-6z" fill="#00df6b"/><path d="M514 373h6v6h-6z" fill="#00dd78"/><path d="M520 373h6v6h-6z" fill="#00db89"/><path d="M526 373h6v6h-6z" fill="#00d99d"/><path d="M532 373h6v6h-6z" fill="#00d6af"/><path d="M538 373h6v6h-6z" fill="#00d1be"/><path d="M544 373h6v6h-6z" fill="#00cccc"/><path d="M550 373h6v6h-6z" fill="#00c8d8"/><path d="M556 373h6v6h-6z" fill="#00bddc"/><path d="M562 373h6v6h-6z" fill="#00b5de"/><path d="M568 373h6v6h-6z" fill="#00afe0"/><path d="M574 373h6v6h-6z" fill="#00aee1"/><path d="M580 373h6v6h-6z" fill="#00b1e0"/><path d="M586 373h6v6h-6z" fill="#00b9dd"/><path d="M592 373h6v6h-6z" fill="#00c3da"/><path d="M598 373h6v6h-6z" fill="#00cad1"/><path d="M604 373h6v6h-6z" fill="#00cec6"/><path d="M610 373h6v6h-6z" fill="#00d1bc"/><path d="M616 373h6v6h-6z" fill="#00d5b2"/><path d="M622 373h6v6h-6z" fill="#00d8a9"/><path d="M628 373h6v6h-6z" fill="#00d99e"/><path d="M634 373h6v6h-6z" fill="#00da94"/><path d="M640 373h6v6h-6z" fill="#00db8b"/><path d="M646 373h6v6h-6z" fill="#00dc84"/><path d="M652 373h6v6h-6z" fill="#00dd7d"/><path d="M658 373h6v6h-6z" fill="#00dd78"/><path d="M664 373h6v6h-6z" fill="#00de74"/><path d="M670 373h6v6h-6z" fill="#00de71"/><path d="M676 373h6v6h-6z" fill="#00de6f"/><path d="M682 373h6v6h-6z" fill="#00de6e"/><path d="M688 373h18v6h-18z" fill="#00df6d"/><path d="M706 373h12v6h-12z" fill="#00df6c"/><path d="M214 379h18v6h-18z" fill="#ff6f02"/><path d="M232 379h6v6h-6z" fill="#ff6e02"/><path d="M238 379h6v6h-6z" fill="#ff6d02"/><path d="M244 379h6v6h-6z" fill="#ff6c02"/><path d="M250 379h6v6h-6z" fill="#ff6b03"/><path d="M256 379h6v6h-6z" fill="#ff6a03"/><path d="M262 379h6v6h-6z" fill="#ff6903"/><path d="M268 379h6v6h-6z" fill="#ff6703"/><path d="M274 379h6v6h-6z" fill="#ff6503"/><path d="M280 379h6v6h-6z" fill="#ff6404"/><path d="M286 379h6v6h-6z" fill="#ff6204"/><path d="M292 379h24v6h-24z" fill="#ff6004"/><path d="M316 379h6v6h-6z" fill="#ff5c04"/><path d="M322 379h6v6h-6z" fill="#ff5705"/><path d="M328 379h6v6h-6z" fill="#ff5905"/><path d="M334 379h6v6h-6z" fill="#ff6703"/><path d="M340 379h6v6h-6z" fill="#ff7501"/><path d="M346 379h6v6h-6z" fill="#ff6803"/><path d="M352 379h6v6h-6z" fill="#ff6e02"/><path d="M358 379h6v6h-6z" fill="#ff9500"/><path d="M364 379h6v6h-6z" fill="#ffbe00"/><path d="M370 379h6v6h-6z" fill="#ffe912"/><path d="M376 379h6v6h-6z" fill="#cfff1d"/><path d="M382 379h6v6h-6z" fill="#51f918"/><path d="M388 379h6v6h-6z" fill="#00ef0b"/><path d="M394 379h6v6h-6z" fill="#00e158"/><path d="M400 379h6v6h-6z" fill="#00dc85"/><path d="M406 379h6v6h-6z" fill="#00d99f"/><path d="M412 379h6v6h-6z" fill="#00d7aa"/><path d="M418 379h24v6h-24z" fill="#00d6ad"/><path d="M442 379h6v6h-6z" fill="#00d7ac"/><path d="M448 379h6v6h-6z" fill="#00d7ab"/><path d="M454 379h6v6h-6z" fill="#00d8a9"/><path d="M460 379h6v6h-6z" fill="#00d8a7"/><path d="M466 379h6v6h-6z" fill="#00d9a1"/><path d="M472 379h6v6h-6z" fill="#00d99b"/><path d="M478 379h6v6h-6z" fill="#00da98"/><path d="M484 379h6v6h-6z" fill="#00da93"/><path d="M490 379h6v6h-6z" fill="#00db8c"/><path d="M496 379h6v6h-6z" fill="#00dc83"/><path d="M502 379h6v6h-6z" fill="#00dd7f"/><path d="M508 379h6v6h-6z" fill="#00dc82"/><path d="M514 379h6v6h-6z" fill="#00db8c"/><path d="M520 379h6v6h-6z" fill="#00da9a"/><path d="M526 379h6v6h-6z" fill="#00d7aa"/><path d="M532 379h6v6h-6z" fill="#00d3b7"/><path d="M538 379h6v6h-6z" fill="#00cfc3"/><path d="M544 379h6v6h-6z" fill="#00cbd0"/><path d="M550 379h6v6h-6z" fill="#00c6d9"/><path d="M556 379h6v6h-6z" fill="#00bddc"/><path d="M562 379h6v6h-6z" fill="#00b6de"/><path d="M568 379h12v6h-12z" fill="#00b3df"/><path d="M580 379h6v6h-6z" fill="#00b7de"/><path d="M586 379h6v6h-6z" fill="#00bfdb"/><path d="M592 379h6v6h-6z" fill="#00c9d6"/><path d="M598 379h6v6h-6z" fill="#00cccb"/><path d="M604 379h6v6h-6z" fill="#00d0c0"/><path d="M610 379h6v6h-6z" fill="#00d3b6"/><path d="M616 379h6v6h-6z" fill="#00d7ac"/><path d="M622 379h6v6h-6z" fill="#00d9a2"/><path d="M628 379h6v6h-6z" fill="#00da97"/><path d="M634 379h6v6h-6z" fill="#00db8e"/><path d="M640 379h6v6h-6z" fill="#00dc87"/><path d="M646 379h6v6h-6z" fill="#00dc80"/><path d="M652 379h6v6h-6z" fill="#00dd7b"/><path d="M658 379h6v6h-6z" fill="#00de76"/><path d="M664 379h6v6h-6z" fill="#00de73"/><path d="M670 379h6v6h-6z" fill="#00de70"/><path d="M676 379h6v6h-6z" fill="#00de6f"/><path d="M682 379h6v6h-6z" fill="#00de6e"/><path d="M688 379h18v6h-18z" fill="#00df6d"/><path d="M706 379h12v6h-12z" fill="#00df6c"/><path d="M214 385h12v6h-12z" fill="#ff6b03"/><path d="M226 385h12v6h-12z" fill="#ff6a03"/><path d="M238 385h6v6h-6z" fill="#ff6903"/><path d="M244 385h6v6h-6z" fill="#ff6803"/><path d="M250 385h6v6h-6z" fill="#ff6703"/><path d="M256 385h6v6h-6z" fill="#ff6503"/><path d="M262 385h6v6h-6z" fill="#ff6404"/><path d="M268 385h6v6h-6z" fill="#ff6204"/><path d="M274 385h6v6h-6z" fill="#ff6004"/><path d="M280 385h6v6h-6z" fill="#ff5e04"/><path d="M286 385h6v6h-6z" fill="#ff5d04"/><path d="M292 385h6v6h-6z" fill="#ff5b05"/><path d="M298 385h12v6h-12z" fill="#ff5a05"/><path d="M310 385h6v6h-6z" fill="#ff5805"/><path d="M316 385h6v6h-6z" fill="#ff5505"/><path d="M322 385h12v6h-12z" fill="#ff5206"/><path d="M334 385h6v6h-6z" fill="#ff5505"/><path d="M340 385h6v6h-6z" fill="#ff5605"/><path d="M346 385h6v6h-6z" fill="#ff5206"/><path d="M352 385h6v6h-6z" fill="#ff6004"/><path d="M358 385h6v6h-6z" fill="#ff8800"/><path d="M364 385h6v6h-6z" fill="#ffb600"/><path d="M370 385h6v6h-6z" fill="#ffe30c"/><path d="M376 385h6v6h-6z" fill="#daff20"/><path d="M382 385h6v6h-6z" fill="#68fa18"/><path d="M388 385h6v6h-6z" fill="#11f20c"/><path d="M394 385h6v6h-6z" fill="#00e63d"/><path d="M400 385h6v6h-6z" fill="#00de71"/><path d="M406 385h6v6h-6z" fill="#00db8f"/><path d="M412 385h6v6h-6z" fill="#00d9a2"/><path d="M418 385h6v6h-6z" fill="#00d7ab"/><path d="M424 385h6v6h-6z" fill="#00d6af"/><path d="M430 385h6v6h-6z" fill="#00d5b1"/><path d="M436 385h6v6h-6z" fill="#00d4b3"/><path d="M442 385h6v6h-6z" fill="#00d4b4"/><path d="M448 385h18v6h-18z" fill="#00d4b5"/><path d="M466 385h6v6h-6z" fill="#00d4b4"/><path d="M472 385h6v6h-6z" fill="#00d5b2"/><path d="M478 385h6v6h-6z" fill="#00d5b1"/><path d="M484 385h6v6h-6z" fill="#00d6af"/><path d="M490 385h6v6h-6z" fill="#00d7aa"/><path d="M496 385h6v6h-6z" fill="#00d9a1"/><path d="M502 385h6v6h-6z" fill="#00d99b"/><path d="M508 385h6v6h-6z" fill="#00da9a"/><path d="M514 385h6v6h-6z" fill="#00d9a1"/><path d="M520 385h6v6h-6z" fill="#00d7ab"/><path d="M526 385h6v6h-6z" fill="#00d4b4"/><path d="M532 385h6v6h-6z" fill="#00d0bf"/><path d="M538 385h6v6h-6z" fill="#00cdc9"/><path d="M544 385h6v6h-6z" fill="#00cad3"/><path d="M550 385h6v6h-6z" fill="#00c4d9"/><path d="M556 385h6v6h-6z" fill="#00bddc"/><path d="M562 385h6v6h-6z" fill="#00b9dd"/><path d="M568 385h6v6h-6z" fill="#00b7de"/><path d="M574 385h6v6h-6z" fill="#00b8dd"/><path d="M580 385h6v6h-6z" fill="#00bcdc"/><path d="M586 385h6v6h-6z" fill="#00c5d9"/><path d="M592 385h6v6h-6z" fill="#00cad1"/><path d="M598 385h6v6h-6z" fill="#00cec5"/><path d="M604 385h6v6h-6z" fill="#00d2ba"/><path d="M610 385h6v6h-6z" fill="#00d5b0"/><path d="M616 385h6v6h-6z" fill="#00d8a6"/><path d="M622 385h6v6h-6z" fill="#00da9a"/><path d="M628 385h6v6h-6z" fill="#00db90"/><path d="M634 385h6v6h-6z" fill="#00dc88"/><path d="M640 385h6v6h-6z" fill="#00dc82"/><path d="M646 385h6v6h-6z" fill="#00dd7d"/><path d="M652 385h6v6h-6z" fill="#00dd78"/><path d="M658 385h6v6h-6z" fill="#00de75"/><path d="M664 385h6v6h-6z" fill="#00de72"/><path d="M670 385h6v6h-6z" fill="#00de70"/><path d="M676 385h12v6h-12z" fill="#00de6e"/><path d="M688 385h24v6h-24z" fill="#00df6d"/><path d="M712 385h6v6h-6z" fill="#00df6c"/><path d="M214 391h12v6h-12z" fill="#ff6703"/><path d="M226 391h12v6h-12z" fill="#ff6603"/><path d="M238 391h6v6h-6z" fill="#ff6503"/><path d="M244 391h6v6h-6z" fill="#ff6304"/><path d="M250 391h6v6h-6z" fill="#ff6204"/><path d="M256 391h6v6h-6z" fill="#ff6104"/><path d="M262 391h6v6h-6z" fill="#ff5f04"/><path d="M268 391h6v6h-6z" fill="#ff5d04"/><path d="M274 391h6v6h-6z" fill="#ff5c05"/><path d="M280 391h6v6h-6z" fill="#ff5a05"/><path d="M286 391h6v6h-6z" fill="#ff5805"/><path d="M292 391h6v6h-6z" fill="#ff5605"/><path d="M298 391h6v6h-6z" fill="#ff5505"/><path d="M304 391h6v6h-6z" fill="#ff5306"/><path d="M310 391h6v6h-6z" fill="#ff5106"/><path d="M316 391h6v6h-6z" fill="#ff4e06"/><path d="M322 391h6v6h-6z" fill="#ff4b07"/><path d="M328 391h6v6h-6z" fill="#ff4907"/><path d="M334 391h6v6h-6z" fill="#ff4607"/><path d="M340 391h12v6h-12z" fill="#ff4408"/><path d="M352 391h6v6h-6z" fill="#ff5705"/><path d="M358 391h6v6h-6z" fill="#ff8200"/><path d="M364 391h6v6h-6z" fill="#ffb100"/><path d="M370 391h6v6h-6z" fill="#ffdf08"/><path d="M376 391h6v6h-6z" fill="#e1ff21"/><path d="M382 391h6v6h-6z" fill="#75fb18"/><path d="M388 391h6v6h-6z" fill="#1df30f"/><path d="M394 391h6v6h-6z" fill="#00ea2b"/><path d="M400 391h6v6h-6z" fill="#00e061"/><path d="M406 391h6v6h-6z" fill="#00dc82"/><path d="M412 391h6v6h-6z" fill="#00da99"/><path d="M418 391h6v6h-6z" fill="#00d8a8"/><path d="M424 391h6v6h-6z" fill="#00d6af"/><path d="M430 391h6v6h-6z" fill="#00d4b4"/><path d="M436 391h6v6h-6z" fill="#00d3b8"/><path d="M442 391h6v6h-6z" fill="#00d2bb"/><path d="M448 391h6v6h-6z" fill="#00d1bd"/><path d="M454 391h6v6h-6z" fill="#00d0bf"/><path d="M460 391h6v6h-6z" fill="#00d0c1"/><path d="M466 391h6v6h-6z" fill="#00cfc3"/><path d="M472 391h12v6h-12z" fill="#00cfc4"/><path d="M484 391h6v6h-6z" fill="#00cfc3"/><path d="M490 391h6v6h-6z" fill="#00d1be"/><path d="M496 391h6v6h-6z" fill="#00d3b7"/><path d="M502 391h6v6h-6z" fill="#00d5b1"/><path d="M508 391h6v6h-6z" fill="#00d6ae"/><path d="M514 391h6v6h-6z" fill="#00d5b1"/><path d="M520 391h6v6h-6z" fill="#00d3b6"/><path d="M526 391h6v6h-6z" fill="#00d1bd"/><path d="M532 391h6v6h-6z" fill="#00cec6"/><path d="M538 391h6v6h-6z" fill="#00cbce"/><path d="M544 391h6v6h-6z" fill="#00c9d6"/><path d="M550 391h6v6h-6z" fill="#00c3da"/><path d="M556 391h6v6h-6z" fill="#00bfdb"/><path d="M562 391h6v6h-6z" fill="#00bcdc"/><path d="M568 391h6v6h-6z" fill="#00bbdc"/><path d="M574 391h6v6h-6z" fill="#00bddc"/><path d="M580 391h6v6h-6z" fill="#00c2da"/><path d="M586 391h6v6h-6z" fill="#00c9d5"/><path d="M592 391h6v6h-6z" fill="#00cccb"/><path d="M598 391h6v6h-6z" fill="#00d0c0"/><path d="M604 391h6v6h-6z" fill="#00d4b4"/><path d="M610 391h6v6h-6z" fill="#00d7aa"/><path d="M616 391h6v6h-6z" fill="#00d99d"/><path d="M622 391h6v6h-6z" fill="#00da92"/><path d="M628 391h6v6h-6z" fill="#00db89"/><path d="M634 391h6v6h-6z" fill="#00dc83"/><path d="M640 391h6v6h-6z" fill="#00dd7e"/><path d="M646 391h6v6h-6z" fill="#00dd79"/><path d="M652 391h6v6h-6z" fill="#00de76"/><path d="M658 391h6v6h-6z" fill="#00de73"/><path d="M664 391h6v6h-6z" fill="#00de71"/><path d="M670 391h12v6h-12z" fill="#00de6f"/><path d="M682 391h18v6h-18z" fill="#00de6e"/><path d="M700 391h18v6h-18z" fill="#00df6d"/><path d="M214 397h6v6h-6z" fill="#ff6404"/><path d="M220 397h12v6h-12z" fill="#ff6304"/><path d="M232 397h6v6h-6z" fill="#ff6204"/><path d="M238 397h6v6h-6z" fill="#ff6104"/><path d="M244 397h6v6h-6z" fill="#ff6004"/><path d="M250 397h6v6h-6z" fill="#ff5e04"/><path d="M256 397h6v6h-6z" fill="#ff5d04"/><path d="M262 397h6v6h-6z" fill="#ff5b05"/><path d="M268 397h6v6h-6z" fill="#ff5905"/><path d="M274 397h6v6h-6z" fill="#ff5705"/><path d="M280 397h6v6h-6z" fill="#ff5505"/><path d="M286 397h6v6h-6z" fill="#ff5406"/><path d="M292 397h6v6h-6z" fill="#ff5106"/><path d="M298 397h6v6h-6z" fill="#ff4f06"/><path d="M304 397h6v6h-6z" fill="#ff4d06"/><path d="M310 397h6v6h-6z" fill="#ff4a07"/><path d="M316 397h6v6h-6z" fill="#ff4707"/><path d="M322 397h6v6h-6z" fill="#ff4308"/><path d="M328 397h6v6h-6z" fill="#ff3f08"/><path d="M334 397h6v6h-6z" fill="#ff3907"/><path d="M340 397h6v6h-6z" fill="#ff3406"/><path d="M346 397h6v6h-6z" fill="#ff3707"/><path d="M352 397h6v6h-6z" fill="#ff5006"/><path d="M358 397h6v6h-6z" fill="#ff7e00"/><path d="M364 397h6v6h-6z" fill="#ffae00"/><path d="M370 397h6v6h-6z" fill="#ffdc04"/><path d="M376 397h6v6h-6z" fill="#e7ff23"/><path d="M382 397h6v6h-6z" fill="#80fc18"/><path d="M388 397h6v6h-6z" fill="#28f411"/><path d="M394 397h6v6h-6z" fill="#00ec1b"/><path d="M400 397h6v6h-6z" fill="#00e252"/><path d="M406 397h6v6h-6z" fill="#00dd77"/><path d="M412 397h6v6h-6z" fill="#00db91"/><path d="M418 397h6v6h-6z" fill="#00d8a4"/><path d="M424 397h6v6h-6z" fill="#00d6ae"/><path d="M430 397h6v6h-6z" fill="#00d4b5"/><path d="M436 397h6v6h-6z" fill="#00d2ba"/><path d="M442 397h6v6h-6z" fill="#00d0bf"/><path d="M448 397h6v6h-6z" fill="#00cfc3"/><path d="M454 397h6v6h-6z" fill="#00cec6"/><path d="M460 397h6v6h-6z" fill="#00cdca"/><path d="M466 397h6v6h-6z" fill="#00cbce"/><path d="M472 397h6v6h-6z" fill="#00cbd0"/><path d="M478 397h12v6h-12z" fill="#00cad1"/><path d="M490 397h6v6h-6z" fill="#00cccd"/><path d="M496 397h6v6h-6z" fill="#00cec6"/><path d="M502 397h6v6h-6z" fill="#00d0c0"/><path d="M508 397h6v6h-6z" fill="#00d1bc"/><path d="M514 397h6v6h-6z" fill="#00d1bd"/><path d="M520 397h6v6h-6z" fill="#00d0c0"/><path d="M526 397h6v6h-6z" fill="#00cec6"/><path d="M532 397h6v6h-6z" fill="#00cccc"/><path d="M538 397h6v6h-6z" fill="#00cad2"/><path d="M544 397h6v6h-6z" fill="#00c8d8"/><path d="M550 397h6v6h-6z" fill="#00c4d9"/><path d="M556 397h6v6h-6z" fill="#00c1da"/><path d="M562 397h6v6h-6z" fill="#00c0db"/><path d="M568 397h6v6h-6z" fill="#00c1da"/><path d="M574 397h6v6h-6z" fill="#00c4d9"/><path d="M580 397h6v6h-6z" fill="#00c8d7"/><path d="M586 397h6v6h-6z" fill="#00cbce"/><path d="M592 397h6v6h-6z" fill="#00cfc4"/><path d="M598 397h6v6h-6z" fill="#00d2b9"/><path d="M604 397h6v6h-6z" fill="#00d6ae"/><path d="M610 397h6v6h-6z" fill="#00d9a2"/><path d="M616 397h6v6h-6z" fill="#00da94"/><path d="M622 397h6v6h-6z" fill="#00db8a"/><path d="M628 397h6v6h-6z" fill="#00dc83"/><path d="M634 397h6v6h-6z" fill="#00dd7e"/><path d="M640 397h6v6h-6z" fill="#00dd79"/><path d="M646 397h6v6h-6z" fill="#00de76"/><path d="M652 397h6v6h-6z" fill="#00de73"/><path d="M658 397h6v6h-6z" fill="#00de71"/><path d="M664 397h6v6h-6z" fill="#00de70"/><path d="M670 397h12v6h-12z" fill="#00de6f"/><path d="M682 397h24v6h-24z" fill="#00de6e"/><path d="M706 397h12v6h-12z" fill="#00df6d"/><path d="M214 403h12v6h-12z" fill="#ff6004"/><path d="M226 403h6v6h-6z" fill="#ff5f04"/><path d="M232 403h6v6h-6z" fill="#ff5e04"/><path d="M238 403h6v6h-6z" fill="#ff5d04"/><path d="M244 403h6v6h-6z" fill="#ff5c05"/><path d="M250 403h6v6h-6z" fill="#ff5a05"/><path d="M256 403h6v6h-6z" fill="#ff5905"/><path d="M262 403h6v6h-6z" fill="#ff5705"/><path d="M268 403h6v6h-6z" fill="#ff5505"/><path d="M274 403h6v6h-6z" fill="#ff5306"/><path d="M280 403h6v6h-6z" fill="#ff5106"/><path d="M286 403h6v6h-6z" fill="#ff4f06"/><path d="M292 403h6v6h-6z" fill="#ff4d06"/><path d="M298 403h6v6h-6z" fill="#ff4a07"/><path d="M304 403h6v6h-6z" fill="#ff4707"/><path d="M310 403h6v6h-6z" fill="#ff4308"/><path d="M316 403h6v6h-6z" fill="#ff3f08"/><path d="M322 403h6v6h-6z" fill="#ff3a07"/><path d="M328 403h6v6h-6z" fill="#ff3407"/><path d="M334 403h6v6h-6z" fill="#ff2d06"/><path d="M340 403h6v6h-6z" fill="#ff2905"/><path d="M346 403h6v6h-6z" fill="#ff3006"/><path d="M352 403h6v6h-6z" fill="#ff4b07"/><path d="M358 403h6v6h-6z" fill="#ff7a01"/><path d="M364 403h6v6h-6z" fill="#ffab00"/><path d="M370 403h6v6h-6z" fill="#ffd901"/><path d="M376 403h6v6h-6z" fill="#f1ff25"/><path d="M382 403h6v6h-6z" fill="#94fd18"/><path d="M388 403h6v6h-6z" fill="#35f614"/><path d="M394 403h6v6h-6z" fill="#00ef0c"/><path d="M400 403h6v6h-6z" fill="#00e544"/><path d="M406 403h6v6h-6z" fill="#00de6e"/><path d="M412 403h6v6h-6z" fill="#00db8a"/><path d="M418 403h6v6h-6z" fill="#00d99e"/><path d="M424 403h6v6h-6z" fill="#00d7ac"/><path d="M430 403h6v6h-6z" fill="#00d4b4"/><path d="M436 403h6v6h-6z" fill="#00d2ba"/><path d="M442 403h6v6h-6z" fill="#00d0bf"/><path d="M448 403h6v6h-6z" fill="#00cfc4"/><path d="M454 403h6v6h-6z" fill="#00cdc9"/><path d="M460 403h6v6h-6z" fill="#00cbce"/><path d="M466 403h6v6h-6z" fill="#00cad2"/><path d="M472 403h6v6h-6z" fill="#00c9d6"/><path d="M478 403h6v6h-6z" fill="#00c8d8"/><path d="M484 403h6v6h-6z" fill="#00c7d8"/><path d="M490 403h6v6h-6z" fill="#00c9d6"/><path d="M496 403h6v6h-6z" fill="#00cad1"/><path d="M502 403h6v6h-6z" fill="#00cccb"/><path d="M508 403h6v6h-6z" fill="#00cdc8"/><path d="M514 403h6v6h-6z" fill="#00cec7"/><path d="M520 403h6v6h-6z" fill="#00cdc9"/><path d="M526 403h6v6h-6z" fill="#00cccc"/><path d="M532 403h6v6h-6z" fill="#00cad1"/><path d="M538 403h6v6h-6z" fill="#00c9d5"/><path d="M544 403h6v6h-6z" fill="#00c7d8"/><path d="M550 403h6v6h-6z" fill="#00c5d9"/><path d="M556 403h6v6h-6z" fill="#00c4d9"/><path d="M562 403h6v6h-6z" fill="#00c5d9"/><path d="M568 403h6v6h-6z" fill="#00c7d8"/><path d="M574 403h6v6h-6z" fill="#00c9d4"/><path d="M580 403h6v6h-6z" fill="#00cbce"/><path d="M586 403h6v6h-6z" fill="#00cec5"/><path d="M592 403h6v6h-6z" fill="#00d1bc"/><path d="M598 403h6v6h-6z" fill="#00d5b1"/><path d="M604 403h6v6h-6z" fill="#00d8a7"/><path d="M610 403h6v6h-6z" fill="#00da99"/><path d="M616 403h6v6h-6z" fill="#00db8d"/><path d="M622 403h6v6h-6z" fill="#00dc84"/><path d="M628 403h6v6h-6z" fill="#00dd7e"/><path d="M634 403h6v6h-6z" fill="#00dd79"/><path d="M640 403h6v6h-6z" fill="#00de76"/><path d="M646 403h6v6h-6z" fill="#00de73"/><path d="M652 403h6v6h-6z" fill="#00de71"/><path d="M658 403h6v6h-6z" fill="#00de70"/><path d="M664 403h12v6h-12z" fill="#00de6f"/><path d="M676 403h36v6h-36z" fill="#00de6e"/><path d="M712 403h6v6h-6z" fill="#00df6d"/><path d="M214 409h12v6h-12z" fill="#ff5d04"/><path d="M226 409h6v6h-6z" fill="#ff5c04"/><path d="M232 409h6v6h-6z" fill="#ff5b05"/><path d="M238 409h6v6h-6z" fill="#ff5a05"/><path d="M244 409h6v6h-6z" fill="#ff5905"/><path d="M250 409h6v6h-6z" fill="#ff5705"/><path d="M256 409h6v6h-6z" fill="#ff5505"/><path d="M262 409h6v6h-6z" fill="#ff5406"/><path d="M268 409h6v6h-6z" fill="#ff5206"/><path d="M274 409h6v6h-6z" fill="#ff4f06"/><path d="M280 409h6v6h-6z" fill="#ff4d06"/><path d="M286 409h6v6h-6z" fill="#ff4b07"/><path d="M292 409h6v6h-6z" fill="#ff4807"/><path d="M298 409h6v6h-6z" fill="#ff4507"/><path d="M304 409h6v6h-6z" fill="#ff4108"/><path d="M310 409h6v6h-6z" fill="#ff3d08"/><path d="M316 409h6v6h-6z" fill="#ff3807"/><path d="M322 409h6v6h-6z" fill="#ff3206"/><path d="M328 409h6v6h-6z" fill="#ff2b05"/><path d="M334 409h6v6h-6z" fill="#ff2505"/><path d="M340 409h6v6h-6z" fill="#ff2204"/><path d="M346 409h6v6h-6z" fill="#ff2b05"/><path d="M352 409h6v6h-6z" fill="#ff4807"/><path d="M358 409h6v6h-6z" fill="#ff7701"/><path d="M364 409h6v6h-6z" fill="#ffa800"/><path d="M370 409h6v6h-6z" fill="#ffd500"/><path d="M376 409h6v6h-6z" fill="#fbff27"/><path d="M382 409h6v6h-6z" fill="#a9fe18"/><path d="M388 409h6v6h-6z" fill="#42f717"/><path d="M394 409h6v6h-6z" fill="#09f10a"/><path d="M400 409h6v6h-6z" fill="#00e737"/><path d="M406 409h6v6h-6z" fill="#00e064"/><path d="M412 409h6v6h-6z" fill="#00dc82"/><path d="M418 409h6v6h-6z" fill="#00da98"/><path d="M424 409h6v6h-6z" fill="#00d8a9"/><path d="M430 409h6v6h-6z" fill="#00d5b1"/><path d="M436 409h6v6h-6z" fill="#00d3b8"/><path d="M442 409h6v6h-6z" fill="#00d1bd"/><path d="M448 409h6v6h-6z" fill="#00cfc3"/><path d="M454 409h6v6h-6z" fill="#00cdc8"/><path d="M460 409h6v6h-6z" fill="#00cbce"/><path d="M466 409h6v6h-6z" fill="#00cad3"/><path d="M472 409h6v6h-6z" fill="#00c8d8"/><path d="M478 409h6v6h-6z" fill="#00c5d9"/><path d="M484 409h6v6h-6z" fill="#00c4d9"/><path d="M490 409h6v6h-6z" fill="#00c5d9"/><path d="M496 409h6v6h-6z" fill="#00c8d7"/><path d="M502 409h6v6h-6z" fill="#00cad3"/><path d="M508 409h6v6h-6z" fill="#00cbcf"/><path d="M514 409h12v6h-12z" fill="#00cbce"/><path d="M526 409h6v6h-6z" fill="#00cbd0"/><path d="M532 409h6v6h-6z" fill="#00cad3"/><path d="M538 409h6v6h-6z" fill="#00c9d6"/><path d="M544 409h12v6h-12z" fill="#00c8d8"/><path d="M556 409h6v6h-6z" fill="#00c8d7"/><path d="M562 409h6v6h-6z" fill="#00c9d5"/><path d="M568 409h6v6h-6z" fill="#00cad1"/><path d="M574 409h6v6h-6z" fill="#00cccb"/><path d="M580 409h6v6h-6z" fill="#00cfc4"/><path d="M586 409h6v6h-6z" fill="#00d1bc"/><path d="M592 409h6v6h-6z" fill="#00d5b2"/><path d="M598 409h6v6h-6z" fill="#00d8a8"/><path d="M604 409h6v6h-6z" fill="#00d99b"/><path d="M610 409h6v6h-6z" fill="#00db90"/><path d="M616 409h6v6h-6z" fill="#00dc86"/><path d="M622 409h6v6h-6z" fill="#00dd7f"/><path d="M628 409h6v6h-6z" fill="#00dd79"/><path d="M634 409h6v6h-6z" fill="#00de75"/><path d="M640 409h6v6h-6z" fill="#00de73"/><path d="M646 409h6v6h-6z" fill="#00de71"/><path d="M652 409h12v6h-12z" fill="#00de6f"/><path d="M664 409h54v6h-54z" fill="#00de6e"/><path d="M214 415h6v6h-6z" fill="#ff5b05"/><path d="M220 415h12v6h-12z" fill="#ff5a05"/><path d="M232 415h6v6h-6z" fill="#ff5905"/><path d="M238 415h6v6h-6z" fill="#ff5705"/><path d="M244 415h6v6h-6z" fill="#ff5605"/><path d="M250 415h6v6h-6z" fill="#ff5405"/><path d="M256 415h6v6h-6z" fill="#ff5206"/><path d="M262 415h6v6h-6z" fill="#ff5006"/><path d="M268 415h6v6h-6z" fill="#ff4e06"/><path d="M274 415h6v6h-6z" fill="#ff4c07"/><path d="M280 415h6v6h-6z" fill="#ff4907"/><path d="M286 415h6v6h-6z" fill="#ff4707"/><path d="M292 415h6v6h-6z" fill="#ff4408"/><path d="M298 415h6v6h-6z" fill="#ff4008"/><path d="M304 415h6v6h-6z" fill="#ff3c07"/><path d="M310 415h6v6h-6z" fill="#ff3707"/><path d="M316 415h6v6h-6z" fill="#ff3106"/><path d="M322 415h6v6h-6z" fill="#ff2b05"/><path d="M328 415h6v6h-6z" fill="#ff2605"/><path d="M334 415h6v6h-6z" fill="#ff2104"/><path d="M340 415h6v6h-6z" fill="#ff1f04"/><path d="M346 415h6v6h-6z" fill="#ff2705"/><path d="M352 415h6v6h-6z" fill="#ff4507"/><path d="M358 415h6v6h-6z" fill="#ff7601"/><path d="M364 415h6v6h-6z" fill="#ffa600"/><path d="M370 415h6v6h-6z" fill="#ffd300"/><path d="M376 415h6v6h-6z" fill="#fffd26"/><path d="M382 415h6v6h-6z" fill="#b8ff18"/><path d="M388 415h6v6h-6z" fill="#4ff818"/><path d="M394 415h6v6h-6z" fill="#13f20c"/><path d="M400 415h6v6h-6z" fill="#00e92c"/><path d="M406 415h6v6h-6z" fill="#00e15b"/><path d="M412 415h6v6h-6z" fill="#00dd7b"/><path d="M418 415h6v6h-6z" fill="#00da92"/><path d="M424 415h6v6h-6z" fill="#00d9a3"/><path d="M430 415h6v6h-6z" fill="#00d6ad"/><path d="M436 415h6v6h-6z" fill="#00d4b3"/><path d="M442 415h6v6h-6z" fill="#00d2b9"/><path d="M448 415h6v6h-6z" fill="#00d1be"/><path d="M454 415h6v6h-6z" fill="#00cfc4"/><path d="M460 415h6v6h-6z" fill="#00cccb"/><path d="M466 415h6v6h-6z" fill="#00cad1"/><path d="M472 415h6v6h-6z" fill="#00c8d7"/><path d="M478 415h6v6h-6z" fill="#00c5d9"/><path d="M484 415h6v6h-6z" fill="#00c3da"/><path d="M490 415h6v6h-6z" fill="#00c4d9"/><path d="M496 415h6v6h-6z" fill="#00c7d8"/><path d="M502 415h6v6h-6z" fill="#00c9d6"/><path d="M508 415h6v6h-6z" fill="#00cad3"/><path d="M514 415h12v6h-12z" fill="#00cad1"/><path d="M526 415h6v6h-6z" fill="#00cad2"/><path d="M532 415h6v6h-6z" fill="#00cad3"/><path d="M538 415h6v6h-6z" fill="#00c9d4"/><path d="M544 415h6v6h-6z" fill="#00c9d5"/><path d="M550 415h6v6h-6z" fill="#00cad3"/><path d="M556 415h6v6h-6z" fill="#00cad1"/><path d="M562 415h6v6h-6z" fill="#00cccd"/><path d="M568 415h6v6h-6z" fill="#00cdc8"/><path d="M574 415h6v6h-6z" fill="#00cfc2"/><path d="M580 415h6v6h-6z" fill="#00d2ba"/><path d="M586 415h6v6h-6z" fill="#00d5b2"/><path d="M592 415h6v6h-6z" fill="#00d8a9"/><path d="M598 415h6v6h-6z" fill="#00d99c"/><path d="M604 415h6v6h-6z" fill="#00db91"/><path d="M610 415h6v6h-6z" fill="#00dc87"/><path d="M616 415h6v6h-6z" fill="#00dc80"/><path d="M622 415h6v6h-6z" fill="#00dd7a"/><path d="M628 415h6v6h-6z" fill="#00de76"/><path d="M634 415h6v6h-6z" fill="#00de73"/><path d="M640 415h6v6h-6z" fill="#00de70"/><path d="M646 415h6v6h-6z" fill="#00de6f"/><path d="M652 415h66v6h-66z" fill="#00de6e"/><path d="M214 421h12v6h-12z" fill="#ff5805"/><path d="M226 421h12v6h-12z" fill="#ff5705"/><path d="M238 421h6v6h-6z" fill="#ff5505"/><path d="M244 421h6v6h-6z" fill="#ff5406"/><path d="M250 421h6v6h-6z" fill="#ff5206"/><path d="M256 421h6v6h-6z" fill="#ff5006"/><path d="M262 421h6v6h-6z" fill="#ff4e06"/><path d="M268 421h6v6h-6z" fill="#ff4b07"/><path d="M274 421h6v6h-6z" fill="#ff4807"/><path d="M280 421h6v6h-6z" fill="#ff4607"/><path d="M286 421h6v6h-6z" fill="#ff4308"/><path d="M292 421h6v6h-6z" fill="#ff3f08"/><path d="M298 421h6v6h-6z" fill="#ff3c07"/><path d="M304 421h6v6h-6z" fill="#ff3707"/><path d="M310 421h6v6h-6z" fill="#ff3106"/><path d="M316 421h6v6h-6z" fill="#ff2b05"/><path d="M322 421h6v6h-6z" fill="#ff2505"/><path d="M328 421h6v6h-6z" fill="#ff2104"/><path d="M334 421h12v6h-12z" fill="#ff2004"/><path d="M346 421h6v6h-6z" fill="#ff2905"/><path d="M352 421h6v6h-6z" fill="#ff4707"/><path d="M358 421h6v6h-6z" fill="#ff7801"/><path d="M364 421h6v6h-6z" fill="#ffa700"/><path d="M370 421h6v6h-6z" fill="#ffd200"/><path d="M376 421h6v6h-6z" fill="#fffb24"/><path d="M382 421h6v6h-6z" fill="#beff19"/><path d="M388 421h6v6h-6z" fill="#5bf918"/><path d="M394 421h6v6h-6z" fill="#1bf30e"/><path d="M400 421h6v6h-6z" fill="#00eb23"/><path d="M406 421h6v6h-6z" fill="#00e253"/><path d="M412 421h6v6h-6z" fill="#00de75"/><path d="M418 421h6v6h-6z" fill="#00db8d"/><path d="M424 421h6v6h-6z" fill="#00d99d"/><path d="M430 421h6v6h-6z" fill="#00d8a9"/><path d="M436 421h6v6h-6z" fill="#00d6ae"/><path d="M442 421h6v6h-6z" fill="#00d5b2"/><path d="M448 421h6v6h-6z" fill="#00d3b8"/><path d="M454 421h6v6h-6z" fill="#00d0bf"/><path d="M460 421h6v6h-6z" fill="#00cec6"/><path d="M466 421h6v6h-6z" fill="#00cbce"/><path d="M472 421h6v6h-6z" fill="#00c9d5"/><path d="M478 421h6v6h-6z" fill="#00c7d8"/><path d="M484 421h12v6h-12z" fill="#00c5d9"/><path d="M496 421h6v6h-6z" fill="#00c7d8"/><path d="M502 421h6v6h-6z" fill="#00c9d6"/><path d="M508 421h6v6h-6z" fill="#00c9d4"/><path d="M514 421h12v6h-12z" fill="#00cad2"/><path d="M526 421h18v6h-18z" fill="#00cad1"/><path d="M544 421h6v6h-6z" fill="#00cbd0"/><path d="M550 421h6v6h-6z" fill="#00cccd"/><path d="M556 421h6v6h-6z" fill="#00cdca"/><path d="M562 421h6v6h-6z" fill="#00cec5"/><path d="M568 421h6v6h-6z" fill="#00d0bf"/><path d="M574 421h6v6h-6z" fill="#00d2b9"/><path d="M580 421h6v6h-6z" fill="#00d5b1"/><path d="M586 421h6v6h-6z" fill="#00d8a9"/><path d="M592 421h6v6h-6z" fill="#00d99c"/><path d="M598 421h6v6h-6z" fill="#00db91"/><path d="M604 421h6v6h-6z" fill="#00dc88"/><path d="M610 421h6v6h-6z" fill="#00dc80"/><path d="M616 421h6v6h-6z" fill="#00dd7a"/><path d="M622 421h6v6h-6z" fill="#00de76"/><path d="M628 421h6v6h-6z" fill="#00de73"/><path d="M634 421h6v6h-6z" fill="#00de71"/><path d="M640 421h6v6h-6z" fill="#00de6f"/><path d="M646 421h12v6h-12z" fill="#00de6e"/><path d="M658 421h12v6h-12z" fill="#00df6d"/><path d="M670 421h48v6h-48z" fill="#00de6e"/><path d="M214 427h18v6h-18z" fill="#ff5605"/><path d="M232 427h6v6h-6z" fill="#ff5505"/><path d="M238 427h6v6h-6z" fill="#ff5306"/><path d="M244 427h6v6h-6z" fill="#ff5206"/><path d="M250 427h6v6h-6z" fill="#ff5006"/><path d="M256 427h6v6h-6z" fill="#ff4e06"/><path d="M262 427h6v6h-6z" fill="#ff4b07"/><path d="M268 427h6v6h-6z" fill="#ff4807"/><path d="M274 427h6v6h-6z" fill="#ff4507"/><path d="M280 427h6v6h-6z" fill="#ff4208"/><path d="M286 427h6v6h-6z" fill="#ff3f08"/><path d="M292 427h6v6h-6z" fill="#ff3c07"/><path d="M298 427h6v6h-6z" fill="#ff3807"/><path d="M304 427h6v6h-6z" fill="#ff3206"/><path d="M310 427h6v6h-6z" fill="#ff2c05"/><path d="M316 427h6v6h-6z" fill="#ff2505"/><path d="M322 427h6v6h-6z" fill="#ff1e04"/><path d="M328 427h12v6h-12z" fill="#ff1a03"/><path d="M340 427h6v6h-6z" fill="#ff1e04"/><path d="M346 427h6v6h-6z" fill="#ff2c06"/><path d="M352 427h6v6h-6z" fill="#ff4b07"/><path d="M358 427h6v6h-6z" fill="#ff7b01"/><path d="M364 427h6v6h-6z" fill="#ffa800"/><path d="M370 427h6v6h-6z" fill="#ffd200"/><path d="M376 427h6v6h-6z" fill="#fffb23"/><path d="M382 427h6v6h-6z" fill="#c1ff1a"/><path d="M388 427h6v6h-6z" fill="#61fa18"/><path d="M394 427h6v6h-6z" fill="#20f40f"/><path d="M400 427h6v6h-6z" fill="#00ec1c"/><path d="M406 427h6v6h-6z" fill="#00e34d"/><path d="M412 427h6v6h-6z" fill="#00de70"/><path d="M418 427h6v6h-6z" fill="#00dc88"/><path d="M424 427h6v6h-6z" fill="#00da99"/><path d="M430 427h6v6h-6z" fill="#00d9a3"/><path d="M436 427h6v6h-6z" fill="#00d8a9"/><path d="M442 427h6v6h-6z" fill="#00d7ac"/><path d="M448 427h6v6h-6z" fill="#00d5b0"/><path d="M454 427h6v6h-6z" fill="#00d3b8"/><path d="M460 427h6v6h-6z" fill="#00d0c1"/><path d="M466 427h6v6h-6z" fill="#00cdca"/><path d="M472 427h6v6h-6z" fill="#00cad1"/><path d="M478 427h6v6h-6z" fill="#00c9d6"/><path d="M484 427h12v6h-12z" fill="#00c7d8"/><path d="M496 427h6v6h-6z" fill="#00c8d7"/><path d="M502 427h6v6h-6z" fill="#00c9d4"/><path d="M508 427h6v6h-6z" fill="#00cad2"/><path d="M514 427h6v6h-6z" fill="#00cad1"/><path d="M520 427h12v6h-12z" fill="#00cbd0"/><path d="M532 427h6v6h-6z" fill="#00cbce"/><path d="M538 427h6v6h-6z" fill="#00cccd"/><path d="M544 427h6v6h-6z" fill="#00cdca"/><path d="M550 427h6v6h-6z" fill="#00cec7"/><path d="M556 427h6v6h-6z" fill="#00cfc2"/><path d="M562 427h6v6h-6z" fill="#00d1bd"/><path d="M568 427h6v6h-6z" fill="#00d3b7"/><path d="M574 427h6v6h-6z" fill="#00d5b0"/><path d="M580 427h6v6h-6z" fill="#00d8a8"/><path d="M586 427h6v6h-6z" fill="#00d99c"/><path d="M592 427h6v6h-6z" fill="#00db91"/><path d="M598 427h6v6h-6z" fill="#00dc88"/><path d="M604 427h6v6h-6z" fill="#00dc80"/><path d="M610 427h6v6h-6z" fill="#00dd7b"/><path d="M616 427h6v6h-6z" fill="#00de76"/><path d="M622 427h6v6h-6z" fill="#00de73"/><path d="M628 427h6v6h-6z" fill="#00de71"/><path d="M634 427h6v6h-6z" fill="#00de6f"/><path d="M640 427h12v6h-12z" fill="#00de6e"/><path d="M652 427h12v6h-12z" fill="#00df6d"/><path d="M664 427h54v6h-54z" fill="#00de6e"/><path d="M214 433h18v6h-18z" fill="#ff5406"/><path d="M232 433h6v6h-6z" fill="#ff5306"/><path d="M238 433h6v6h-6z" fill="#ff5206"/><path d="M244 433h6v6h-6z" fill="#ff5106"/><path d="M250 433h6v6h-6z" fill="#ff4f06"/><path d="M256 433h6v6h-6z" fill="#ff4c07"/><path d="M262 433h6v6h-6z" fill="#ff4907"/><path d="M268 433h6v6h-6z" fill="#ff4507"/><path d="M274 433h6v6h-6z" fill="#ff4208"/><path d="M280 433h6v6h-6z" fill="#ff3f08"/><path d="M286 433h6v6h-6z" fill="#ff3c07"/><path d="M292 433h6v6h-6z" fill="#ff3807"/><path d="M298 433h6v6h-6z" fill="#ff3407"/><path d="M304 433h6v6h-6z" fill="#ff2f06"/><path d="M310 433h6v6h-6z" fill="#ff2705"/><path d="M316 433h6v6h-6z" fill="#ff1f04"/><path d="M322 433h6v6h-6z" fill="#ff1703"/><path d="M328 433h6v6h-6z" fill="#ff1202"/><path d="M334 433h6v6h-6z" fill="#ff1102"/><path d="M340 433h6v6h-6z" fill="#ff1803"/><path d="M346 433h6v6h-6z" fill="#ff2b05"/><path d="M352 433h6v6h-6z" fill="#ff4d06"/><path d="M358 433h6v6h-6z" fill="#ff7e00"/><path d="M364 433h6v6h-6z" fill="#ffab00"/><path d="M370 433h6v6h-6z" fill="#ffd400"/><path d="M376 433h6v6h-6z" fill="#fffc25"/><path d="M382 433h6v6h-6z" fill="#c0ff1a"/><path d="M388 433h6v6h-6z" fill="#64fa18"/><path d="M394 433h6v6h-6z" fill="#23f410"/><path d="M400 433h6v6h-6z" fill="#00ed17"/><path d="M406 433h6v6h-6z" fill="#00e448"/><path d="M412 433h6v6h-6z" fill="#00df6c"/><path d="M418 433h6v6h-6z" fill="#00dc84"/><path d="M424 433h6v6h-6z" fill="#00da94"/><path d="M430 433h6v6h-6z" fill="#00d99e"/><path d="M436 433h6v6h-6z" fill="#00d9a2"/><path d="M442 433h6v6h-6z" fill="#00d8a6"/><path d="M448 433h6v6h-6z" fill="#00d7ab"/><path d="M454 433h6v6h-6z" fill="#00d5b2"/><path d="M460 433h6v6h-6z" fill="#00d2bb"/><path d="M466 433h6v6h-6z" fill="#00cfc4"/><path d="M472 433h6v6h-6z" fill="#00cccc"/><path d="M478 433h6v6h-6z" fill="#00cad2"/><path d="M484 433h6v6h-6z" fill="#00c9d5"/><path d="M490 433h6v6h-6z" fill="#00c9d6"/><path d="M496 433h6v6h-6z" fill="#00c9d5"/><path d="M502 433h6v6h-6z" fill="#00cad2"/><path d="M508 433h6v6h-6z" fill="#00cad1"/><path d="M514 433h6v6h-6z" fill="#00cbd0"/><path d="M520 433h6v6h-6z" fill="#00cbce"/><path d="M526 433h6v6h-6z" fill="#00cccd"/><path d="M532 433h6v6h-6z" fill="#00cdca"/><path d="M538 433h6v6h-6z" fill="#00cdc8"/><path d="M544 433h6v6h-6z" fill="#00cfc4"/><path d="M550 433h6v6h-6z" fill="#00d0c0"/><path d="M556 433h6v6h-6z" fill="#00d2bb"/><path d="M562 433h6v6h-6z" fill="#00d4b5"/><path d="M568 433h6v6h-6z" fill="#00d6ae"/><path d="M574 433h6v6h-6z" fill="#00d8a7"/><path d="M580 433h6v6h-6z" fill="#00d99c"/><path d="M586 433h6v6h-6z" fill="#00db91"/><path d="M592 433h6v6h-6z" fill="#00dc88"/><path d="M598 433h6v6h-6z" fill="#00dc80"/><path d="M604 433h6v6h-6z" fill="#00dd7b"/><path d="M610 433h6v6h-6z" fill="#00dd77"/><path d="M616 433h6v6h-6z" fill="#00de74"/><path d="M622 433h6v6h-6z" fill="#00de71"/><path d="M628 433h6v6h-6z" fill="#00de70"/><path d="M634 433h6v6h-6z" fill="#00de6f"/><path d="M640 433h78v6h-78z" fill="#00de6e"/><path d="M214 439h24v6h-24z" fill="#ff5206"/><path d="M238 439h6v6h-6z" fill="#ff5106"/><path d="M244 439h6v6h-6z" fill="#ff5006"/><path d="M250 439h6v6h-6z" fill="#ff4d06"/><path d="M256 439h6v6h-6z" fill="#ff4a07"/><path d="M262 439h6v6h-6z" fill="#ff4707"/><path d="M268 439h6v6h-6z" fill="#ff4308"/><path d="M274 439h6v6h-6z" fill="#ff3f08"/><path d="M280 439h6v6h-6z" fill="#ff3c07"/><path d="M286 439h6v6h-6z" fill="#ff3907"/><path d="M292 439h6v6h-6z" fill="#ff3607"/><path d="M298 439h6v6h-6z" fill="#ff3206"/><path d="M304 439h6v6h-6z" fill="#ff2c06"/><path d="M310 439h6v6h-6z" fill="#ff2405"/><path d="M316 439h6v6h-6z" fill="#ff1b03"/><path d="M322 439h6v6h-6z" fill="#ff1102"/><path d="M328 439h6v6h-6z" fill="#ff0b01"/><path d="M334 439h6v6h-6z" fill="#ff0901"/><path d="M340 439h6v6h-6z" fill="#ff1102"/><path d="M346 439h6v6h-6z" fill="#ff2805"/><path d="M352 439h6v6h-6z" fill="#ff4e06"/><path d="M358 439h6v6h-6z" fill="#ff8100"/><path d="M364 439h6v6h-6z" fill="#ffae00"/><path d="M370 439h6v6h-6z" fill="#ffd700"/><path d="M376 439h6v6h-6z" fill="#fffe27"/><path d="M382 439h6v6h-6z" fill="#beff19"/><path d="M388 439h6v6h-6z" fill="#65fa18"/><path d="M394 439h6v6h-6z" fill="#25f410"/><path d="M400 439h6v6h-6z" fill="#00ee13"/><path d="M406 439h6v6h-6z" fill="#00e543"/><path d="M412 439h6v6h-6z" fill="#00df68"/><path d="M418 439h6v6h-6z" fill="#00dc80"/><path d="M424 439h6v6h-6z" fill="#00db90"/><path d="M430 439h6v6h-6z" fill="#00da99"/><path d="M436 439h6v6h-6z" fill="#00d99d"/><path d="M442 439h6v6h-6z" fill="#00d9a0"/><path d="M448 439h6v6h-6z" fill="#00d8a5"/><path d="M454 439h6v6h-6z" fill="#00d6ad"/><path d="M460 439h6v6h-6z" fill="#00d3b6"/><path d="M466 439h6v6h-6z" fill="#00d1be"/><path d="M472 439h6v6h-6z" fill="#00cec6"/><path d="M478 439h6v6h-6z" fill="#00cccd"/><path d="M484 439h6v6h-6z" fill="#00cad1"/><path d="M490 439h12v6h-12z" fill="#00cad3"/><path d="M502 439h6v6h-6z" fill="#00cad1"/><path d="M508 439h6v6h-6z" fill="#00cbcf"/><path d="M514 439h6v6h-6z" fill="#00cccd"/><path d="M520 439h6v6h-6z" fill="#00cccb"/><path d="M526 439h6v6h-6z" fill="#00cdc9"/><path d="M532 439h6v6h-6z" fill="#00cec6"/><path d="M538 439h6v6h-6z" fill="#00cfc3"/><path d="M544 439h6v6h-6z" fill="#00d1be"/><path d="M550 439h6v6h-6z" fill="#00d2b9"/><path d="M556 439h6v6h-6z" fill="#00d4b3"/><path d="M562 439h6v6h-6z" fill="#00d6ad"/><path d="M568 439h6v6h-6z" fill="#00d8a5"/><path d="M574 439h6v6h-6z" fill="#00d99b"/><path d="M580 439h6v6h-6z" fill="#00db91"/><path d="M586 439h6v6h-6z" fill="#00dc88"/><path d="M592 439h6v6h-6z" fill="#00dc80"/><path d="M598 439h6v6h-6z" fill="#00dd7a"/><path d="M604 439h6v6h-6z" fill="#00dd77"/><path d="M610 439h6v6h-6z" fill="#00de74"/><path d="M616 439h6v6h-6z" fill="#00de72"/><path d="M622 439h6v6h-6z" fill="#00de70"/><path d="M628 439h12v6h-12z" fill="#00de6f"/><path d="M640 439h78v6h-78z" fill="#00de6e"/><path d="M214 445h6v6h-6z" fill="#ff4f06"/><path d="M220 445h18v6h-18z" fill="#ff5006"/><path d="M238 445h6v6h-6z" fill="#ff4f06"/><path d="M244 445h6v6h-6z" fill="#ff4e06"/><path d="M250 445h6v6h-6z" fill="#ff4c06"/><path d="M256 445h6v6h-6z" fill="#ff4907"/><path d="M262 445h6v6h-6z" fill="#ff4507"/><path d="M268 445h6v6h-6z" fill="#ff4008"/><path d="M274 445h6v6h-6z" fill="#ff3c08"/><path d="M280 445h6v6h-6z" fill="#ff3907"/><path d="M286 445h6v6h-6z" fill="#ff3607"/><path d="M292 445h6v6h-6z" fill="#ff3306"/><path d="M298 445h6v6h-6z" fill="#ff2f06"/><path d="M304 445h6v6h-6z" fill="#ff2a05"/><path d="M310 445h6v6h-6z" fill="#ff2204"/><path d="M316 445h6v6h-6z" fill="#ff1803"/><path d="M322 445h6v6h-6z" fill="#ff0e02"/><path d="M328 445h6v6h-6z" fill="#ff0701"/><path d="M334 445h6v6h-6z" fill="#ff0501"/><path d="M340 445h6v6h-6z" fill="#ff0d02"/><path d="M346 445h6v6h-6z" fill="#ff2605"/><path d="M352 445h6v6h-6z" fill="#ff5006"/><path d="M358 445h6v6h-6z" fill="#ff8400"/><path d="M364 445h6v6h-6z" fill="#ffb100"/><path d="M370 445h6v6h-6z" fill="#ffd901"/><path d="M376 445h6v6h-6z" fill="#fdff28"/><path d="M382 445h6v6h-6z" fill="#bdff19"/><path d="M388 445h6v6h-6z" fill="#67fa18"/><path d="M394 445h6v6h-6z" fill="#29f511"/><path d="M400 445h6v6h-6z" fill="#00ef0c"/><path d="M406 445h6v6h-6z" fill="#00e73c"/><path d="M412 445h6v6h-6z" fill="#00e063"/><path d="M418 445h6v6h-6z" fill="#00dd7c"/><path d="M424 445h6v6h-6z" fill="#00db8c"/><path d="M430 445h6v6h-6z" fill="#00da94"/><path d="M436 445h6v6h-6z" fill="#00da98"/><path d="M442 445h6v6h-6z" fill="#00da9a"/><path d="M448 445h6v6h-6z" fill="#00d99f"/><path d="M454 445h6v6h-6z" fill="#00d8a8"/><path d="M460 445h6v6h-6z" fill="#00d5b0"/><path d="M466 445h6v6h-6z" fill="#00d2b9"/><path d="M472 445h6v6h-6z" fill="#00d0c1"/><path d="M478 445h6v6h-6z" fill="#00cdc8"/><path d="M484 445h6v6h-6z" fill="#00cccd"/><path d="M490 445h6v6h-6z" fill="#00cbd0"/><path d="M496 445h6v6h-6z" fill="#00cad1"/><path d="M502 445h6v6h-6z" fill="#00cbcf"/><path d="M508 445h6v6h-6z" fill="#00cccd"/><path d="M514 445h6v6h-6z" fill="#00cccb"/><path d="M520 445h6v6h-6z" fill="#00cdc8"/><path d="M526 445h6v6h-6z" fill="#00cec5"/><path d="M532 445h6v6h-6z" fill="#00d0c1"/><path d="M538 445h6v6h-6z" fill="#00d1bd"/><path d="M544 445h6v6h-6z" fill="#00d3b8"/><path d="M550 445h6v6h-6z" fill="#00d4b3"/><path d="M556 445h6v6h-6z" fill="#00d6ad"/><path d="M562 445h6v6h-6z" fill="#00d8a5"/><path d="M568 445h6v6h-6z" fill="#00da9a"/><path d="M574 445h6v6h-6z" fill="#00db90"/><path d="M580 445h6v6h-6z" fill="#00dc87"/><path d="M586 445h6v6h-6z" fill="#00dc80"/><path d="M592 445h6v6h-6z" fill="#00dd7a"/><path d="M598 445h6v6h-6z" fill="#00de76"/><path d="M604 445h6v6h-6z" fill="#00de74"/><path d="M610 445h6v6h-6z" fill="#00de72"/><path d="M616 445h6v6h-6z" fill="#00de71"/><path d="M622 445h12v6h-12z" fill="#00de6f"/><path d="M634 445h48v6h-48z" fill="#00de6e"/><path d="M682 445h6v6h-6z" fill="#00de6f"/><path d="M688 445h30v6h-30z" fill="#00de6e"/><path d="M214 451h12v6h-12z" fill="#ff4d06"/><path d="M226 451h12v6h-12z" fill="#ff4e06"/><path d="M238 451h6v6h-6z" fill="#ff4d06"/><path d="M244 451h6v6h-6z" fill="#ff4c06"/><path d="M250 451h6v6h-6z" fill="#ff4a07"/><path d="M256 451h6v6h-6z" fill="#ff4607"/><path d="M262 451h6v6h-6z" fill="#ff4208"/><path d="M268 451h6v6h-6z" fill="#ff3e08"/><path d="M274 451h6v6h-6z" fill="#ff3a07"/><path d="M280 451h6v6h-6z" fill="#ff3707"/><path d="M286 451h6v6h-6z" fill="#ff3306"/><path d="M292 451h6v6h-6z" fill="#ff3006"/><path d="M298 451h6v6h-6z" fill="#ff2d06"/><path d="M304 451h6v6h-6z" fill="#ff2805"/><path d="M310 451h6v6h-6z" fill="#ff2004"/><path d="M316 451h6v6h-6z" fill="#ff1703"/><path d="M322 451h6v6h-6z" fill="#ff0e02"/><path d="M328 451h12v6h-12z" fill="#ff0801"/><path d="M340 451h6v6h-6z" fill="#ff1202"/><path d="M346 451h6v6h-6z" fill="#ff2d06"/><path d="M352 451h6v6h-6z" fill="#ff5705"/><path d="M358 451h6v6h-6z" fill="#ff8800"/><path d="M364 451h6v6h-6z" fill="#ffb400"/><path d="M370 451h6v6h-6z" fill="#ffda02"/><path d="M376 451h6v6h-6z" fill="#feff28"/><path d="M382 451h6v6h-6z" fill="#c0ff1a"/><path d="M388 451h6v6h-6z" fill="#6ffa18"/><path d="M394 451h6v6h-6z" fill="#30f513"/><path d="M400 451h6v6h-6z" fill="#04f009"/><path d="M406 451h6v6h-6z" fill="#00e832"/><path d="M412 451h6v6h-6z" fill="#00e159"/><path d="M418 451h6v6h-6z" fill="#00de74"/><path d="M424 451h6v6h-6z" fill="#00dc85"/><path d="M430 451h6v6h-6z" fill="#00db8d"/><path d="M436 451h6v6h-6z" fill="#00db91"/><path d="M442 451h6v6h-6z" fill="#00da94"/><path d="M448 451h6v6h-6z" fill="#00da99"/><path d="M454 451h6v6h-6z" fill="#00d9a2"/><path d="M460 451h6v6h-6z" fill="#00d7ab"/><path d="M466 451h6v6h-6z" fill="#00d4b3"/><path d="M472 451h6v6h-6z" fill="#00d2bb"/><path d="M478 451h6v6h-6z" fill="#00cfc3"/><path d="M484 451h6v6h-6z" fill="#00cdc8"/><path d="M490 451h6v6h-6z" fill="#00cccc"/><path d="M496 451h6v6h-6z" fill="#00cccd"/><path d="M502 451h6v6h-6z" fill="#00cccc"/><path d="M508 451h6v6h-6z" fill="#00cdca"/><path d="M514 451h6v6h-6z" fill="#00cec7"/><path d="M520 451h6v6h-6z" fill="#00cfc4"/><path d="M526 451h6v6h-6z" fill="#00d0c1"/><path d="M532 451h6v6h-6z" fill="#00d1bd"/><path d="M538 451h6v6h-6z" fill="#00d3b8"/><path d="M544 451h6v6h-6z" fill="#00d4b3"/><path d="M550 451h6v6h-6z" fill="#00d6ad"/><path d="M556 451h6v6h-6z" fill="#00d8a6"/><path d="M562 451h6v6h-6z" fill="#00d99c"/><path d="M568 451h6v6h-6z" fill="#00db91"/><path d="M574 451h6v6h-6z" fill="#00dc87"/><path d="M580 451h6v6h-6z" fill="#00dd7f"/><path d="M586 451h6v6h-6z" fill="#00dd7a"/><path d="M592 451h6v6h-6z" fill="#00de76"/><path d="M598 451h6v6h-6z" fill="#00de73"/><path d="M604 451h6v6h-6z" fill="#00de72"/><path d="M610 451h6v6h-6z" fill="#00de71"/><path d="M616 451h6v6h-6z" fill="#00de70"/><path d="M622 451h6v6h-6z" fill="#00de6f"/><path d="M628 451h84v6h-84z" fill="#00de6e"/><path d="M712 451h6v6h-6z" fill="#00df6d"/><path d="M214 457h6v6h-6z" fill="#ff4a07"/><path d="M220 457h18v6h-18z" fill="#ff4b07"/><path d="M238 457h6v6h-6z" fill="#ff4a07"/><path d="M244 457h6v6h-6z" fill="#ff4907"/><path d="M250 457h6v6h-6z" fill="#ff4707"/><path d="M256 457h6v6h-6z" fill="#ff4408"/><path d="M262 457h6v6h-6z" fill="#ff4008"/><path d="M268 457h6v6h-6z" fill="#ff3c07"/><path d="M274 457h6v6h-6z" fill="#ff3807"/><path d="M280 457h6v6h-6z" fill="#ff3507"/><path d="M286 457h6v6h-6z" fill="#ff3106"/><path d="M292 457h6v6h-6z" fill="#ff2e06"/><path d="M298 457h6v6h-6z" fill="#ff2a05"/><path d="M304 457h6v6h-6z" fill="#ff2505"/><path d="M310 457h6v6h-6z" fill="#ff1f04"/><path d="M316 457h6v6h-6z" fill="#ff1803"/><path d="M322 457h6v6h-6z" fill="#ff1102"/><path d="M328 457h6v6h-6z" fill="#ff0f02"/><path d="M334 457h6v6h-6z" fill="#ff1202"/><path d="M340 457h6v6h-6z" fill="#ff2004"/><path d="M346 457h6v6h-6z" fill="#ff3a07"/><path d="M352 457h6v6h-6z" fill="#ff6204"/><path d="M358 457h6v6h-6z" fill="#ff8e00"/><path d="M364 457h6v6h-6z" fill="#ffb600"/><path d="M370 457h6v6h-6z" fill="#ffda02"/><path d="M376 457h6v6h-6z" fill="#fffd26"/><path d="M382 457h6v6h-6z" fill="#c7ff1b"/><path d="M388 457h6v6h-6z" fill="#7cfb18"/><path d="M394 457h6v6h-6z" fill="#39f615"/><path d="M400 457h6v6h-6z" fill="#0ef20b"/><path d="M406 457h6v6h-6z" fill="#00eb24"/><path d="M412 457h6v6h-6z" fill="#00e44b"/><path d="M418 457h6v6h-6z" fill="#00df68"/><path d="M424 457h6v6h-6z" fill="#00dd79"/><path d="M430 457h6v6h-6z" fill="#00dc84"/><path d="M436 457h6v6h-6z" fill="#00db8a"/><path d="M442 457h6v6h-6z" fill="#00db8f"/><path d="M448 457h6v6h-6z" fill="#00da95"/><path d="M454 457h6v6h-6z" fill="#00d99d"/><path d="M460 457h6v6h-6z" fill="#00d8a7"/><path d="M466 457h6v6h-6z" fill="#00d6af"/><path d="M472 457h6v6h-6z" fill="#00d3b6"/><path d="M478 457h6v6h-6z" fill="#00d1bd"/><path d="M484 457h6v6h-6z" fill="#00cfc3"/><path d="M490 457h6v6h-6z" fill="#00cec6"/><path d="M496 457h6v6h-6z" fill="#00cdc8"/><path d="M502 457h6v6h-6z" fill="#00cec7"/><path d="M508 457h6v6h-6z" fill="#00cec5"/><path d="M514 457h6v6h-6z" fill="#00cfc3"/><path d="M520 457h6v6h-6z" fill="#00d0c0"/><path d="M526 457h6v6h-6z" fill="#00d1bc"/><path d="M532 457h6v6h-6z" fill="#00d3b8"/><path d="M538 457h6v6h-6z" fill="#00d4b3"/><path d="M544 457h6v6h-6z" fill="#00d6ad"/><path d="M550 457h6v6h-6z" fill="#00d8a7"/><path d="M556 457h6v6h-6z" fill="#00d99e"/><path d="M562 457h6v6h-6z" fill="#00da94"/><path d="M568 457h6v6h-6z" fill="#00db8b"/><path d="M574 457h6v6h-6z" fill="#00dc82"/><path d="M580 457h6v6h-6z" fill="#00dd7b"/><path d="M586 457h6v6h-6z" fill="#00de76"/><path d="M592 457h6v6h-6z" fill="#00de73"/><path d="M598 457h6v6h-6z" fill="#00de71"/><path d="M604 457h6v6h-6z" fill="#00de70"/><path d="M610 457h6v6h-6z" fill="#00de6f"/><path d="M616 457h6v6h-6z" fill="#00de6e"/><path d="M622 457h24v6h-24z" fill="#00df6d"/><path d="M646 457h54v6h-54z" fill="#00de6e"/><path d="M700 457h18v6h-18z" fill="#00df6d"/><path d="M214 463h24v6h-24z" fill="#ff4807"/><path d="M238 463h6v6h-6z" fill="#ff4707"/><path d="M244 463h6v6h-6z" fill="#ff4607"/><path d="M250 463h6v6h-6z" fill="#ff4408"/><path d="M256 463h6v6h-6z" fill="#ff4108"/><path d="M262 463h6v6h-6z" fill="#ff3e08"/><path d="M268 463h6v6h-6z" fill="#ff3a07"/><path d="M274 463h6v6h-6z" fill="#ff3607"/><path d="M280 463h6v6h-6z" fill="#ff3306"/><path d="M286 463h6v6h-6z" fill="#ff3006"/><path d="M292 463h6v6h-6z" fill="#ff2d06"/><path d="M298 463h6v6h-6z" fill="#ff2905"/><path d="M304 463h6v6h-6z" fill="#ff2405"/><path d="M310 463h6v6h-6z" fill="#ff2004"/><path d="M316 463h6v6h-6z" fill="#ff1b03"/><path d="M322 463h12v6h-12z" fill="#ff1803"/><path d="M334 463h6v6h-6z" fill="#ff1f04"/><path d="M340 463h6v6h-6z" fill="#ff2f06"/><path d="M346 463h6v6h-6z" fill="#ff4907"/><path d="M352 463h6v6h-6z" fill="#ff6e02"/><path d="M358 463h6v6h-6z" fill="#ff9500"/><path d="M364 463h6v6h-6z" fill="#ffb900"/><path d="M370 463h6v6h-6z" fill="#ffda02"/><path d="M376 463h6v6h-6z" fill="#fffb24"/><path d="M382 463h6v6h-6z" fill="#cfff1d"/><path d="M388 463h6v6h-6z" fill="#8bfc18"/><path d="M394 463h6v6h-6z" fill="#44f817"/><path d="M400 463h6v6h-6z" fill="#1bf30e"/><path d="M406 463h6v6h-6z" fill="#00ee14"/><path d="M412 463h6v6h-6z" fill="#00e73a"/><path d="M418 463h6v6h-6z" fill="#00e158"/><path d="M424 463h6v6h-6z" fill="#00df6c"/><path d="M430 463h6v6h-6z" fill="#00dd78"/><path d="M436 463h6v6h-6z" fill="#00dc81"/><path d="M442 463h6v6h-6z" fill="#00dc88"/><path d="M448 463h6v6h-6z" fill="#00db8f"/><path d="M454 463h6v6h-6z" fill="#00da97"/><path d="M460 463h6v6h-6z" fill="#00d9a1"/><path d="M466 463h6v6h-6z" fill="#00d7aa"/><path d="M472 463h6v6h-6z" fill="#00d5b1"/><path d="M478 463h6v6h-6z" fill="#00d3b7"/><path d="M484 463h6v6h-6z" fill="#00d1bc"/><path d="M490 463h6v6h-6z" fill="#00d0c0"/><path d="M496 463h12v6h-12z" fill="#00d0c1"/><path d="M508 463h6v6h-6z" fill="#00d0c0"/><path d="M514 463h6v6h-6z" fill="#00d1be"/><path d="M520 463h6v6h-6z" fill="#00d2bb"/><path d="M526 463h6v6h-6z" fill="#00d3b7"/><path d="M532 463h6v6h-6z" fill="#00d4b3"/><path d="M538 463h6v6h-6z" fill="#00d6ae"/><path d="M544 463h6v6h-6z" fill="#00d8a9"/><path d="M550 463h6v6h-6z" fill="#00d9a0"/><path d="M556 463h6v6h-6z" fill="#00da97"/><path d="M562 463h6v6h-6z" fill="#00db8e"/><path d="M568 463h6v6h-6z" fill="#00dc85"/><path d="M574 463h6v6h-6z" fill="#00dd7e"/><path d="M580 463h6v6h-6z" fill="#00dd77"/><path d="M586 463h6v6h-6z" fill="#00de73"/><path d="M592 463h6v6h-6z" fill="#00de70"/><path d="M598 463h6v6h-6z" fill="#00de6e"/><path d="M604 463h12v6h-12z" fill="#00df6d"/><path d="M616 463h36v6h-36z" fill="#00df6c"/><path d="M652 463h60v6h-60z" fill="#00df6d"/><path d="M712 463h6v6h-6z" fill="#00df6c"/></g></g><g clip-path="url(#cp)" ><g mask="url(#m2)"><g filter="url(#bl2)"><path d="M312 298h3v3h-3z" fill="#ffca00"/><path d="M315 298h3v3h-3z" fill="#ffcc00"/><path d="M318 298h3v3h-3z" fill="#ffcf00"/><path d="M321 298h3v3h-3z" fill="#ffd200"/><path d="M324 298h3v3h-3z" fill="#ffd500"/><path d="M327 298h3v3h-3z" fill="#ffd902"/><path d="M330 298h3v3h-3z" fill="#ffde06"/><path d="M333 298h3v3h-3z" fill="#ffe40c"/><path d="M336 298h3v3h-3z" fill="#ffe912"/><path d="M339 298h3v3h-3z" fill="#ffef18"/><path d="M342 298h3v3h-3z" fill="#fff51e"/><path d="M345 298h3v3h-3z" fill="#fffb24"/><path d="M348 298h3v3h-3z" fill="#faff27"/><path d="M351 298h3v3h-3z" fill="#ebff24"/><path d="M354 298h3v3h-3z" fill="#ddff20"/><path d="M357 298h3v3h-3z" fill="#cfff1d"/><path d="M360 298h3v3h-3z" fill="#c3ff1a"/><path d="M363 298h3v3h-3z" fill="#b6ff18"/><path d="M366 298h3v3h-3z" fill="#a5fe18"/><path d="M369 298h3v3h-3z" fill="#96fd18"/><path d="M372 298h3v3h-3z" fill="#8afc18"/><path d="M375 298h3v3h-3z" fill="#7efb18"/><path d="M378 298h3v3h-3z" fill="#74fb18"/><path d="M381 298h3v3h-3z" fill="#6bfa18"/><path d="M384 298h3v3h-3z" fill="#62fa18"/><path d="M387 298h3v3h-3z" fill="#5bf918"/><path d="M390 298h3v3h-3z" fill="#55f918"/><path d="M393 298h3v3h-3z" fill="#51f918"/><path d="M396 298h3v3h-3z" fill="#4ef818"/><path d="M399 298h3v3h-3z" fill="#4bf818"/><path d="M402 298h3v3h-3z" fill="#47f818"/><path d="M405 298h9v3h-9z" fill="#45f817"/><path d="M414 298h3v3h-3z" fill="#47f818"/><path d="M417 298h3v3h-3z" fill="#4af818"/><path d="M420 298h12v3h-12z" fill="#4cf818"/><path d="M432 298h6v3h-6z" fill="#4bf818"/><path d="M438 298h6v3h-6z" fill="#4af818"/><path d="M312 301h3v3h-3z" fill="#ffc800"/><path d="M315 301h3v3h-3z" fill="#ffcb00"/><path d="M318 301h3v3h-3z" fill="#ffce00"/><path d="M321 301h3v3h-3z" fill="#ffd200"/><path d="M324 301h3v3h-3z" fill="#ffd600"/><path d="M327 301h3v3h-3z" fill="#ffda03"/><path d="M330 301h3v3h-3z" fill="#ffe008"/><path d="M333 301h3v3h-3z" fill="#ffe60e"/><path d="M336 301h3v3h-3z" fill="#ffec15"/><path d="M339 301h3v3h-3z" fill="#fff31c"/><path d="M342 301h3v3h-3z" fill="#fffa23"/><path d="M345 301h3v3h-3z" fill="#fcff27"/><path d="M348 301h3v3h-3z" fill="#efff24"/><path d="M351 301h3v3h-3z" fill="#e0ff21"/><path d="M354 301h3v3h-3z" fill="#d2ff1e"/><path d="M357 301h3v3h-3z" fill="#c5ff1b"/><path d="M360 301h3v3h-3z" fill="#b9ff18"/><path d="M363 301h3v3h-3z" fill="#a7fe18"/><path d="M366 301h3v3h-3z" fill="#97fd18"/><path d="M369 301h3v3h-3z" fill="#89fc18"/><path d="M372 301h3v3h-3z" fill="#7cfb18"/><path d="M375 301h3v3h-3z" fill="#70fb18"/><path d="M378 301h3v3h-3z" fill="#65fa18"/><path d="M381 301h3v3h-3z" fill="#5bf918"/><path d="M384 301h3v3h-3z" fill="#51f918"/><path d="M387 301h3v3h-3z" fill="#48f818"/><path d="M390 301h3v3h-3z" fill="#43f717"/><path d="M393 301h3v3h-3z" fill="#40f716"/><path d="M396 301h3v3h-3z" fill="#3df716"/><path d="M399 301h3v3h-3z" fill="#3af615"/><path d="M402 301h3v3h-3z" fill="#38f614"/><path d="M405 301h9v3h-9z" fill="#36f614"/><path d="M414 301h3v3h-3z" fill="#39f615"/><path d="M417 301h3v3h-3z" fill="#3cf715"/><path d="M420 301h3v3h-3z" fill="#3ef716"/><path d="M423 301h3v3h-3z" fill="#3ff716"/><path d="M426 301h3v3h-3z" fill="#41f716"/><path d="M429 301h3v3h-3z" fill="#41f717"/><path d="M432 301h12v3h-12z" fill="#42f717"/><path d="M312 304h3v3h-3z" fill="#ffc700"/><path d="M315 304h3v3h-3z" fill="#ffca00"/><path d="M318 304h3v3h-3z" fill="#ffcd00"/><path d="M321 304h3v3h-3z" fill="#ffd100"/><path d="M324 304h3v3h-3z" fill="#ffd600"/><path d="M327 304h3v3h-3z" fill="#ffdc04"/><path d="M330 304h3v3h-3z" fill="#ffe20b"/><path d="M333 304h3v3h-3z" fill="#ffe912"/><path d="M336 304h3v3h-3z" fill="#fff119"/><path d="M339 304h3v3h-3z" fill="#fff821"/><path d="M342 304h3v3h-3z" fill="#feff28"/><path d="M345 304h3v3h-3z" fill="#efff25"/><path d="M348 304h3v3h-3z" fill="#e1ff21"/><path d="M351 304h3v3h-3z" fill="#d3ff1e"/><path d="M354 304h3v3h-3z" fill="#c6ff1b"/><path d="M357 304h3v3h-3z" fill="#b9ff18"/><path d="M360 304h3v3h-3z" fill="#a8fe18"/><path d="M363 304h3v3h-3z" fill="#97fd18"/><path d="M366 304h3v3h-3z" fill="#88fc18"/><path d="M369 304h3v3h-3z" fill="#7afb18"/><path d="M372 304h3v3h-3z" fill="#6efa18"/><path d="M375 304h3v3h-3z" fill="#61fa18"/><path d="M378 304h3v3h-3z" fill="#55f918"/><path d="M381 304h3v3h-3z" fill="#49f818"/><path d="M384 304h3v3h-3z" fill="#41f717"/><path d="M387 304h3v3h-3z" fill="#3bf715"/><path d="M390 304h3v3h-3z" fill="#34f614"/><path d="M393 304h3v3h-3z" fill="#30f513"/><path d="M396 304h3v3h-3z" fill="#2cf512"/><path d="M399 304h3v3h-3z" fill="#28f411"/><path d="M402 304h3v3h-3z" fill="#26f410"/><path d="M405 304h6v3h-6z" fill="#24f410"/><path d="M411 304h3v3h-3z" fill="#26f410"/><path d="M414 304h3v3h-3z" fill="#28f411"/><path d="M417 304h3v3h-3z" fill="#2cf512"/><path d="M420 304h3v3h-3z" fill="#30f513"/><path d="M423 304h3v3h-3z" fill="#33f613"/><path d="M426 304h3v3h-3z" fill="#35f614"/><path d="M429 304h3v3h-3z" fill="#37f614"/><path d="M432 304h3v3h-3z" fill="#39f615"/><path d="M435 304h3v3h-3z" fill="#3af615"/><path d="M438 304h6v3h-6z" fill="#3bf715"/><path d="M312 307h3v3h-3z" fill="#ffc500"/><path d="M315 307h3v3h-3z" fill="#ffc800"/><path d="M318 307h3v3h-3z" fill="#ffcc00"/><path d="M321 307h3v3h-3z" fill="#ffd100"/><path d="M324 307h3v3h-3z" fill="#ffd700"/><path d="M327 307h3v3h-3z" fill="#ffdd06"/><path d="M330 307h3v3h-3z" fill="#ffe50d"/><path d="M333 307h3v3h-3z" fill="#ffed15"/><path d="M336 307h3v3h-3z" fill="#fff51e"/><path d="M339 307h3v3h-3z" fill="#fffe27"/><path d="M342 307h3v3h-3z" fill="#f1ff25"/><path d="M345 307h3v3h-3z" fill="#e1ff21"/><path d="M348 307h3v3h-3z" fill="#d2ff1e"/><path d="M351 307h3v3h-3z" fill="#c4ff1b"/><path d="M354 307h3v3h-3z" fill="#b7ff18"/><path d="M357 307h3v3h-3z" fill="#a5fe18"/><path d="M360 307h3v3h-3z" fill="#95fd18"/><path d="M363 307h3v3h-3z" fill="#86fc18"/><path d="M366 307h3v3h-3z" fill="#78fb18"/><path d="M369 307h3v3h-3z" fill="#6bfa18"/><path d="M372 307h3v3h-3z" fill="#5ff918"/><path d="M375 307h3v3h-3z" fill="#52f918"/><path d="M378 307h3v3h-3z" fill="#46f818"/><path d="M381 307h3v3h-3z" fill="#3df716"/><path d="M384 307h3v3h-3z" fill="#34f614"/><path d="M387 307h3v3h-3z" fill="#2cf512"/><path d="M390 307h3v3h-3z" fill="#24f410"/><path d="M393 307h3v3h-3z" fill="#1df30f"/><path d="M396 307h3v3h-3z" fill="#19f30d"/><path d="M399 307h3v3h-3z" fill="#15f20d"/><path d="M402 307h3v3h-3z" fill="#13f20c"/><path d="M405 307h6v3h-6z" fill="#11f20c"/><path d="M411 307h3v3h-3z" fill="#13f20c"/><path d="M414 307h3v3h-3z" fill="#17f30d"/><path d="M417 307h3v3h-3z" fill="#1cf30e"/><path d="M420 307h3v3h-3z" fill="#21f40f"/><path d="M423 307h3v3h-3z" fill="#25f410"/><path d="M426 307h3v3h-3z" fill="#2af511"/><path d="M429 307h3v3h-3z" fill="#2df512"/><path d="M432 307h3v3h-3z" fill="#30f513"/><path d="M435 307h3v3h-3z" fill="#32f613"/><path d="M438 307h6v3h-6z" fill="#33f613"/><path d="M312 310h3v3h-3z" fill="#ffc200"/><path d="M315 310h3v3h-3z" fill="#ffc600"/><path d="M318 310h3v3h-3z" fill="#ffcb00"/><path d="M321 310h3v3h-3z" fill="#ffd100"/><path d="M324 310h3v3h-3z" fill="#ffd700"/><path d="M327 310h3v3h-3z" fill="#ffdf07"/><path d="M330 310h3v3h-3z" fill="#ffe70f"/><path d="M333 310h3v3h-3z" fill="#fff019"/><path d="M336 310h3v3h-3z" fill="#fff922"/><path d="M339 310h3v3h-3z" fill="#f7ff26"/><path d="M342 310h3v3h-3z" fill="#e5ff22"/><path d="M345 310h3v3h-3z" fill="#d3ff1e"/><path d="M348 310h3v3h-3z" fill="#c3ff1a"/><path d="M351 310h3v3h-3z" fill="#b3ff18"/><path d="M354 310h3v3h-3z" fill="#a1fe18"/><path d="M357 310h3v3h-3z" fill="#90fd18"/><path d="M360 310h3v3h-3z" fill="#82fc18"/><path d="M363 310h3v3h-3z" fill="#75fb18"/><path d="M366 310h3v3h-3z" fill="#68fa18"/><path d="M369 310h3v3h-3z" fill="#5cf918"/><path d="M372 310h3v3h-3z" fill="#4ff818"/><path d="M375 310h3v3h-3z" fill="#44f817"/><path d="M378 310h3v3h-3z" fill="#3bf715"/><path d="M381 310h3v3h-3z" fill="#31f513"/><path d="M384 310h3v3h-3z" fill="#26f410"/><path d="M387 310h3v3h-3z" fill="#1bf30e"/><path d="M390 310h3v3h-3z" fill="#12f20c"/><path d="M393 310h3v3h-3z" fill="#0af10a"/><path d="M396 310h3v3h-3z" fill="#05f109"/><path d="M399 310h3v3h-3z" fill="#01f008"/><path d="M402 310h3v3h-3z" fill="#00f009"/><path d="M405 310h6v3h-6z" fill="#00f00a"/><path d="M411 310h3v3h-3z" fill="#01f008"/><path d="M414 310h3v3h-3z" fill="#06f109"/><path d="M417 310h3v3h-3z" fill="#0cf10b"/><path d="M420 310h3v3h-3z" fill="#12f20c"/><path d="M423 310h3v3h-3z" fill="#18f30d"/><path d="M426 310h3v3h-3z" fill="#1ef30f"/><path d="M429 310h3v3h-3z" fill="#23f410"/><path d="M432 310h3v3h-3z" fill="#27f411"/><path d="M435 310h3v3h-3z" fill="#29f511"/><path d="M438 310h3v3h-3z" fill="#2bf512"/><path d="M441 310h3v3h-3z" fill="#2cf512"/><path d="M312 313h3v3h-3z" fill="#ffc000"/><path d="M315 313h3v3h-3z" fill="#ffc400"/><path d="M318 313h3v3h-3z" fill="#ffca00"/><path d="M321 313h3v3h-3z" fill="#ffd000"/><path d="M324 313h3v3h-3z" fill="#ffd800"/><path d="M327 313h3v3h-3z" fill="#ffe008"/><path d="M330 313h3v3h-3z" fill="#ffe911"/><path d="M333 313h3v3h-3z" fill="#fff31b"/><path d="M336 313h3v3h-3z" fill="#fffd26"/><path d="M339 313h3v3h-3z" fill="#eeff24"/><path d="M342 313h3v3h-3z" fill="#d9ff20"/><path d="M345 313h3v3h-3z" fill="#c6ff1b"/><path d="M348 313h3v3h-3z" fill="#b2ff18"/><path d="M351 313h3v3h-3z" fill="#9dfd18"/><path d="M354 313h3v3h-3z" fill="#8bfc18"/><path d="M357 313h3v3h-3z" fill="#7cfb18"/><path d="M360 313h3v3h-3z" fill="#6ffa18"/><path d="M363 313h3v3h-3z" fill="#63fa18"/><path d="M366 313h3v3h-3z" fill="#57f918"/><path d="M369 313h3v3h-3z" fill="#4bf818"/><path d="M372 313h3v3h-3z" fill="#42f717"/><path d="M375 313h3v3h-3z" fill="#39f615"/><path d="M378 313h3v3h-3z" fill="#2ff512"/><path d="M381 313h3v3h-3z" fill="#24f410"/><path d="M384 313h3v3h-3z" fill="#17f30d"/><path d="M387 313h3v3h-3z" fill="#0bf10a"/><path d="M390 313h3v3h-3z" fill="#00f009"/><path d="M393 313h3v3h-3z" fill="#00ee14"/><path d="M396 313h3v3h-3z" fill="#00ec1c"/><path d="M399 313h3v3h-3z" fill="#00ec1f"/><path d="M402 313h6v3h-6z" fill="#00ec20"/><path d="M408 313h3v3h-3z" fill="#00ec1e"/><path d="M411 313h3v3h-3z" fill="#00ed1a"/><path d="M414 313h3v3h-3z" fill="#00ee13"/><path d="M417 313h3v3h-3z" fill="#00ef0b"/><path d="M420 313h3v3h-3z" fill="#05f109"/><path d="M423 313h3v3h-3z" fill="#0cf10b"/><path d="M426 313h3v3h-3z" fill="#13f20c"/><path d="M429 313h3v3h-3z" fill="#1af30e"/><path d="M432 313h3v3h-3z" fill="#1ff30f"/><path d="M435 313h3v3h-3z" fill="#21f40f"/><path d="M438 313h3v3h-3z" fill="#23f410"/><path d="M441 313h3v3h-3z" fill="#24f410"/><path d="M312 316h3v3h-3z" fill="#ffbd00"/><path d="M315 316h3v3h-3z" fill="#ffc200"/><path d="M318 316h3v3h-3z" fill="#ffc800"/><path d="M321 316h3v3h-3z" fill="#ffcf00"/><path d="M324 316h3v3h-3z" fill="#ffd700"/><path d="M327 316h3v3h-3z" fill="#ffe008"/><path d="M330 316h3v3h-3z" fill="#ffea12"/><path d="M333 316h3v3h-3z" fill="#fff51d"/><path d="M336 316h3v3h-3z" fill="#feff28"/><path d="M339 316h3v3h-3z" fill="#e8ff23"/><path d="M342 316h3v3h-3z" fill="#d1ff1e"/><path d="M345 316h3v3h-3z" fill="#bbff19"/><path d="M348 316h3v3h-3z" fill="#9ffd18"/><path d="M351 316h3v3h-3z" fill="#89fc18"/><path d="M354 316h3v3h-3z" fill="#78fb18"/><path d="M357 316h3v3h-3z" fill="#6afa18"/><path d="M360 316h3v3h-3z" fill="#5df918"/><path d="M363 316h3v3h-3z" fill="#50f918"/><path d="M366 316h3v3h-3z" fill="#46f818"/><path d="M369 316h3v3h-3z" fill="#3ff716"/><path d="M372 316h3v3h-3z" fill="#37f614"/><path d="M375 316h3v3h-3z" fill="#2ef512"/><path d="M378 316h3v3h-3z" fill="#23f410"/><path d="M381 316h3v3h-3z" fill="#16f20d"/><path d="M384 316h3v3h-3z" fill="#08f10a"/><path d="M387 316h3v3h-3z" fill="#00ee11"/><path d="M390 316h3v3h-3z" fill="#00eb21"/><path d="M393 316h3v3h-3z" fill="#00e92e"/><path d="M396 316h3v3h-3z" fill="#00e835"/><path d="M399 316h3v3h-3z" fill="#00e737"/><path d="M402 316h3v3h-3z" fill="#00e836"/><path d="M405 316h3v3h-3z" fill="#00e833"/><path d="M408 316h3v3h-3z" fill="#00e92f"/><path d="M411 316h3v3h-3z" fill="#00ea29"/><path d="M414 316h3v3h-3z" fill="#00eb22"/><path d="M417 316h3v3h-3z" fill="#00ed1a"/><path d="M420 316h3v3h-3z" fill="#00ee12"/><path d="M423 316h3v3h-3z" fill="#01f008"/><path d="M426 316h3v3h-3z" fill="#0af10a"/><path d="M429 316h3v3h-3z" fill="#12f20c"/><path d="M432 316h3v3h-3z" fill="#17f30d"/><path d="M435 316h3v3h-3z" fill="#1af30e"/><path d="M438 316h3v3h-3z" fill="#1bf30e"/><path d="M441 316h3v3h-3z" fill="#1cf30e"/><path d="M312 319h3v3h-3z" fill="#ffba00"/><path d="M315 319h3v3h-3z" fill="#ffbf00"/><path d="M318 319h3v3h-3z" fill="#ffc500"/><path d="M321 319h3v3h-3z" fill="#ffcd00"/><path d="M324 319h3v3h-3z" fill="#ffd600"/><path d="M327 319h3v3h-3z" fill="#ffe008"/><path d="M330 319h3v3h-3z" fill="#ffea13"/><path d="M333 319h3v3h-3z" fill="#fff51e"/><path d="M336 319h3v3h-3z" fill="#fcff27"/><path d="M339 319h3v3h-3z" fill="#e5ff22"/><path d="M342 319h3v3h-3z" fill="#ceff1d"/><path d="M345 319h3v3h-3z" fill="#b4ff18"/><path d="M348 319h3v3h-3z" fill="#92fd18"/><path d="M351 319h3v3h-3z" fill="#7dfb18"/><path d="M354 319h3v3h-3z" fill="#6bfa18"/><path d="M357 319h3v3h-3z" fill="#5af918"/><path d="M360 319h3v3h-3z" fill="#4bf818"/><path d="M363 319h3v3h-3z" fill="#42f717"/><path d="M366 319h3v3h-3z" fill="#3af615"/><path d="M369 319h3v3h-3z" fill="#33f613"/><path d="M372 319h3v3h-3z" fill="#2bf512"/><path d="M375 319h3v3h-3z" fill="#22f40f"/><path d="M378 319h3v3h-3z" fill="#16f20d"/><path d="M381 319h3v3h-3z" fill="#08f10a"/><path d="M384 319h3v3h-3z" fill="#00ee12"/><path d="M387 319h3v3h-3z" fill="#00ea27"/><path d="M390 319h3v3h-3z" fill="#00e73a"/><path d="M393 319h3v3h-3z" fill="#00e449"/><path d="M396 319h3v3h-3z" fill="#00e34e"/><path d="M399 319h3v3h-3z" fill="#00e34d"/><path d="M402 319h3v3h-3z" fill="#00e449"/><path d="M405 319h3v3h-3z" fill="#00e544"/><path d="M408 319h3v3h-3z" fill="#00e63d"/><path d="M411 319h3v3h-3z" fill="#00e836"/><path d="M414 319h3v3h-3z" fill="#00e92e"/><path d="M417 319h3v3h-3z" fill="#00ea27"/><path d="M420 319h3v3h-3z" fill="#00ec1f"/><path d="M423 319h3v3h-3z" fill="#00ee13"/><path d="M426 319h3v3h-3z" fill="#02f009"/><path d="M429 319h3v3h-3z" fill="#0bf10b"/><path d="M432 319h3v3h-3z" fill="#10f20c"/><path d="M435 319h6v3h-6z" fill="#12f20c"/><path d="M441 319h3v3h-3z" fill="#13f20c"/><path d="M312 322h3v3h-3z" fill="#ffb600"/><path d="M315 322h3v3h-3z" fill="#ffbc00"/><path d="M318 322h3v3h-3z" fill="#ffc200"/><path d="M321 322h3v3h-3z" fill="#ffca00"/><path d="M324 322h3v3h-3z" fill="#ffd400"/><path d="M327 322h3v3h-3z" fill="#ffdf07"/><path d="M330 322h3v3h-3z" fill="#ffea13"/><path d="M333 322h3v3h-3z" fill="#fff61e"/><path d="M336 322h3v3h-3z" fill="#fbff27"/><path d="M339 322h3v3h-3z" fill="#e6ff22"/><path d="M342 322h3v3h-3z" fill="#d0ff1d"/><path d="M345 322h3v3h-3z" fill="#baff18"/><path d="M348 322h3v3h-3z" fill="#99fd18"/><path d="M351 322h3v3h-3z" fill="#7dfb18"/><path d="M354 322h3v3h-3z" fill="#63fa18"/><path d="M357 322h3v3h-3z" fill="#4df818"/><path d="M360 322h3v3h-3z" fill="#3ff716"/><path d="M363 322h3v3h-3z" fill="#35f614"/><path d="M366 322h3v3h-3z" fill="#2cf512"/><path d="M369 322h3v3h-3z" fill="#25f410"/><path d="M372 322h3v3h-3z" fill="#1df30e"/><path d="M375 322h3v3h-3z" fill="#13f20c"/><path d="M378 322h3v3h-3z" fill="#07f10a"/><path d="M381 322h3v3h-3z" fill="#00ee11"/><path d="M384 322h3v3h-3z" fill="#00ea28"/><path d="M387 322h3v3h-3z" fill="#00e63f"/><path d="M390 322h3v3h-3z" fill="#00e253"/><path d="M393 322h3v3h-3z" fill="#00e061"/><path d="M396 322h3v3h-3z" fill="#00df65"/><path d="M399 322h3v3h-3z" fill="#00e063"/><path d="M402 322h3v3h-3z" fill="#00e15c"/><path d="M405 322h3v3h-3z" fill="#00e254"/><path d="M408 322h3v3h-3z" fill="#00e44b"/><path d="M411 322h3v3h-3z" fill="#00e542"/><path d="M414 322h3v3h-3z" fill="#00e739"/><path d="M417 322h3v3h-3z" fill="#00e930"/><path d="M420 322h3v3h-3z" fill="#00ea28"/><path d="M423 322h3v3h-3z" fill="#00ec1c"/><path d="M426 322h3v3h-3z" fill="#00ef0b"/><path d="M429 322h3v3h-3z" fill="#06f109"/><path d="M432 322h9v3h-9z" fill="#08f10a"/><path d="M441 322h3v3h-3z" fill="#09f10a"/><path d="M312 325h3v3h-3z" fill="#ffb300"/><path d="M315 325h3v3h-3z" fill="#ffb800"/><path d="M318 325h3v3h-3z" fill="#ffbf00"/><path d="M321 325h3v3h-3z" fill="#ffc700"/><path d="M324 325h3v3h-3z" fill="#ffd100"/><path d="M327 325h3v3h-3z" fill="#ffdd05"/><path d="M330 325h3v3h-3z" fill="#ffe912"/><path d="M333 325h3v3h-3z" fill="#fff61e"/><path d="M336 325h3v3h-3z" fill="#fcff27"/><path d="M339 325h3v3h-3z" fill="#e9ff23"/><path d="M342 325h3v3h-3z" fill="#d6ff1f"/><path d="M345 325h3v3h-3z" fill="#c4ff1b"/><path d="M348 325h3v3h-3z" fill="#acfe18"/><path d="M351 325h3v3h-3z" fill="#82fc18"/><path d="M354 325h3v3h-3z" fill="#5cf918"/><path d="M357 325h3v3h-3z" fill="#41f717"/><path d="M360 325h3v3h-3z" fill="#32f613"/><path d="M363 325h3v3h-3z" fill="#26f410"/><path d="M366 325h3v3h-3z" fill="#1df30e"/><path d="M369 325h3v3h-3z" fill="#15f20d"/><path d="M372 325h3v3h-3z" fill="#0bf10b"/><path d="M375 325h3v3h-3z" fill="#00f008"/><path d="M378 325h3v3h-3z" fill="#00ed17"/><path d="M381 325h3v3h-3z" fill="#00ea2a"/><path d="M384 325h3v3h-3z" fill="#00e543"/><path d="M387 325h3v3h-3z" fill="#00e15a"/><path d="M390 325h3v3h-3z" fill="#00df6b"/><path d="M393 325h3v3h-3z" fill="#00de75"/><path d="M396 325h3v3h-3z" fill="#00dd78"/><path d="M399 325h3v3h-3z" fill="#00de75"/><path d="M402 325h3v3h-3z" fill="#00de6e"/><path d="M405 325h3v3h-3z" fill="#00df65"/><path d="M408 325h3v3h-3z" fill="#00e15b"/><path d="M411 325h3v3h-3z" fill="#00e350"/><path d="M414 325h3v3h-3z" fill="#00e545"/><path d="M417 325h3v3h-3z" fill="#00e738"/><path d="M420 325h3v3h-3z" fill="#00e92d"/><path d="M423 325h3v3h-3z" fill="#00eb21"/><path d="M426 325h3v3h-3z" fill="#00ee12"/><path d="M429 325h3v3h-3z" fill="#00f009"/><path d="M432 325h3v3h-3z" fill="#00ef0c"/><path d="M435 325h3v3h-3z" fill="#00ef0e"/><path d="M438 325h3v3h-3z" fill="#00ef0d"/><path d="M441 325h3v3h-3z" fill="#00f009"/><path d="M312 328h3v3h-3z" fill="#ffaf00"/><path d="M315 328h3v3h-3z" fill="#ffb500"/><path d="M318 328h3v3h-3z" fill="#ffbb00"/><path d="M321 328h3v3h-3z" fill="#ffc400"/><path d="M324 328h3v3h-3z" fill="#ffce00"/><path d="M327 328h3v3h-3z" fill="#ffda02"/><path d="M330 328h3v3h-3z" fill="#ffe70f"/><path d="M333 328h3v3h-3z" fill="#fff31c"/><path d="M336 328h3v3h-3z" fill="#ffff28"/><path d="M339 328h3v3h-3z" fill="#ecff24"/><path d="M342 328h3v3h-3z" fill="#daff20"/><path d="M345 328h3v3h-3z" fill="#c7ff1b"/><path d="M348 328h3v3h-3z" fill="#acfe18"/><path d="M351 328h3v3h-3z" fill="#7cfb18"/><path d="M354 328h3v3h-3z" fill="#4ff818"/><path d="M357 328h3v3h-3z" fill="#34f614"/><path d="M360 328h3v3h-3z" fill="#22f410"/><path d="M363 328h3v3h-3z" fill="#14f20c"/><path d="M366 328h3v3h-3z" fill="#0af10a"/><path d="M369 328h3v3h-3z" fill="#01f008"/><path d="M372 328h3v3h-3z" fill="#00ee14"/><path d="M375 328h3v3h-3z" fill="#00eb25"/><path d="M378 328h3v3h-3z" fill="#00e738"/><path d="M381 328h3v3h-3z" fill="#00e34e"/><path d="M384 328h3v3h-3z" fill="#00df65"/><path d="M387 328h3v3h-3z" fill="#00dd77"/><path d="M390 328h3v3h-3z" fill="#00dc84"/><path d="M393 328h3v3h-3z" fill="#00db8c"/><path d="M396 328h3v3h-3z" fill="#00db8e"/><path d="M399 328h3v3h-3z" fill="#00db8a"/><path d="M402 328h3v3h-3z" fill="#00dc82"/><path d="M405 328h3v3h-3z" fill="#00dd78"/><path d="M408 328h3v3h-3z" fill="#00df6d"/><path d="M411 328h3v3h-3z" fill="#00e064"/><path d="M414 328h3v3h-3z" fill="#00e257"/><path d="M417 328h3v3h-3z" fill="#00e448"/><path d="M420 328h3v3h-3z" fill="#00e73a"/><path d="M423 328h3v3h-3z" fill="#00e92e"/><path d="M426 328h3v3h-3z" fill="#00eb23"/><path d="M429 328h3v3h-3z" fill="#00ec1f"/><path d="M432 328h3v3h-3z" fill="#00eb24"/><path d="M435 328h3v3h-3z" fill="#00eb23"/><path d="M438 328h3v3h-3z" fill="#00ec1d"/><path d="M441 328h3v3h-3z" fill="#00ed16"/><path d="M312 331h3v3h-3z" fill="#ffab00"/><path d="M315 331h3v3h-3z" fill="#ffb100"/><path d="M318 331h3v3h-3z" fill="#ffb800"/><path d="M321 331h3v3h-3z" fill="#ffc000"/><path d="M324 331h3v3h-3z" fill="#ffca00"/><path d="M327 331h3v3h-3z" fill="#ffd600"/><path d="M330 331h3v3h-3z" fill="#ffe20b"/><path d="M333 331h3v3h-3z" fill="#ffef18"/><path d="M336 331h3v3h-3z" fill="#fffb24"/><path d="M339 331h3v3h-3z" fill="#f1ff25"/><path d="M342 331h3v3h-3z" fill="#daff20"/><path d="M345 331h3v3h-3z" fill="#c1ff1a"/><path d="M348 331h3v3h-3z" fill="#99fd18"/><path d="M351 331h3v3h-3z" fill="#69fa18"/><path d="M354 331h3v3h-3z" fill="#3ff716"/><path d="M357 331h3v3h-3z" fill="#25f410"/><path d="M360 331h3v3h-3z" fill="#11f20c"/><path d="M363 331h3v3h-3z" fill="#01f008"/><path d="M366 331h3v3h-3z" fill="#00ee15"/><path d="M369 331h3v3h-3z" fill="#00eb22"/><path d="M372 331h3v3h-3z" fill="#00e833"/><path d="M375 331h3v3h-3z" fill="#00e448"/><path d="M378 331h3v3h-3z" fill="#00e05f"/><path d="M381 331h3v3h-3z" fill="#00de74"/><path d="M384 331h3v3h-3z" fill="#00dc87"/><path d="M387 331h3v3h-3z" fill="#00da98"/><path d="M390 331h3v3h-3z" fill="#00d9a2"/><path d="M393 331h3v3h-3z" fill="#00d8a7"/><path d="M396 331h3v3h-3z" fill="#00d8a8"/><path d="M399 331h3v3h-3z" fill="#00d8a4"/><path d="M402 331h3v3h-3z" fill="#00d99d"/><path d="M405 331h3v3h-3z" fill="#00da92"/><path d="M408 331h3v3h-3z" fill="#00dc87"/><path d="M411 331h3v3h-3z" fill="#00dd7b"/><path d="M414 331h3v3h-3z" fill="#00df6c"/><path d="M417 331h3v3h-3z" fill="#00e05d"/><path d="M420 331h3v3h-3z" fill="#00e34e"/><path d="M423 331h3v3h-3z" fill="#00e542"/><path d="M426 331h3v3h-3z" fill="#00e73c"/><path d="M429 331h3v3h-3z" fill="#00e63d"/><path d="M432 331h3v3h-3z" fill="#00e641"/><path d="M435 331h3v3h-3z" fill="#00e738"/><path d="M438 331h3v3h-3z" fill="#00e92c"/><path d="M441 331h3v3h-3z" fill="#00ec20"/><path d="M312 334h3v3h-3z" fill="#ffa700"/><path d="M315 334h3v3h-3z" fill="#ffad00"/><path d="M318 334h3v3h-3z" fill="#ffb400"/><path d="M321 334h3v3h-3z" fill="#ffbc00"/><path d="M324 334h3v3h-3z" fill="#ffc600"/><path d="M327 334h3v3h-3z" fill="#ffd100"/><path d="M330 334h3v3h-3z" fill="#ffde06"/><path d="M333 334h3v3h-3z" fill="#ffea13"/><path d="M336 334h3v3h-3z" fill="#fff61f"/><path d="M339 334h3v3h-3z" fill="#f7ff26"/><path d="M342 334h3v3h-3z" fill="#dcff20"/><path d="M345 334h3v3h-3z" fill="#bdff19"/><path d="M348 334h3v3h-3z" fill="#8afc18"/><path d="M351 334h3v3h-3z" fill="#59f918"/><path d="M354 334h3v3h-3z" fill="#35f614"/><path d="M357 334h3v3h-3z" fill="#18f30d"/><path d="M360 334h3v3h-3z" fill="#02f008"/><path d="M363 334h3v3h-3z" fill="#00ed1a"/><path d="M366 334h3v3h-3z" fill="#00ea2b"/><path d="M369 334h3v3h-3z" fill="#00e73c"/><path d="M372 334h3v3h-3z" fill="#00e351"/><path d="M375 334h3v3h-3z" fill="#00df68"/><path d="M378 334h3v3h-3z" fill="#00dc80"/><path d="M381 334h3v3h-3z" fill="#00da98"/><path d="M384 334h3v3h-3z" fill="#00d7ac"/><path d="M387 334h3v3h-3z" fill="#00d3b6"/><path d="M390 334h3v3h-3z" fill="#00d1bc"/><path d="M393 334h6v3h-6z" fill="#00d1bd"/><path d="M399 334h3v3h-3z" fill="#00d2bb"/><path d="M402 334h3v3h-3z" fill="#00d3b6"/><path d="M405 334h3v3h-3z" fill="#00d6af"/><path d="M408 334h3v3h-3z" fill="#00d8a6"/><path d="M411 334h3v3h-3z" fill="#00da96"/><path d="M414 334h3v3h-3z" fill="#00dc83"/><path d="M417 334h3v3h-3z" fill="#00de71"/><path d="M420 334h3v3h-3z" fill="#00e062"/><path d="M423 334h3v3h-3z" fill="#00e256"/><path d="M426 334h6v3h-6z" fill="#00e350"/><path d="M432 334h3v3h-3z" fill="#00e34f"/><path d="M435 334h3v3h-3z" fill="#00e545"/><path d="M438 334h3v3h-3z" fill="#00e836"/><path d="M441 334h3v3h-3z" fill="#00ea28"/><path d="M312 337h3v3h-3z" fill="#ffa200"/><path d="M315 337h3v3h-3z" fill="#ffa800"/><path d="M318 337h3v3h-3z" fill="#ffb000"/><path d="M321 337h3v3h-3z" fill="#ffb800"/><path d="M324 337h3v3h-3z" fill="#ffc200"/><path d="M327 337h3v3h-3z" fill="#ffcd00"/><path d="M330 337h3v3h-3z" fill="#ffd901"/><path d="M333 337h3v3h-3z" fill="#ffe50d"/><path d="M336 337h3v3h-3z" fill="#fff21a"/><path d="M339 337h3v3h-3z" fill="#ffff28"/><path d="M342 337h3v3h-3z" fill="#e2ff21"/><path d="M345 337h3v3h-3z" fill="#c1ff1a"/><path d="M348 337h3v3h-3z" fill="#90fd18"/><path d="M351 337h3v3h-3z" fill="#5df918"/><path d="M354 337h3v3h-3z" fill="#35f614"/><path d="M357 337h3v3h-3z" fill="#15f20d"/><path d="M360 337h3v3h-3z" fill="#00ef0d"/><path d="M363 337h3v3h-3z" fill="#00eb22"/><path d="M366 337h3v3h-3z" fill="#00e836"/><path d="M369 337h3v3h-3z" fill="#00e44d"/><path d="M372 337h3v3h-3z" fill="#00df65"/><path d="M375 337h3v3h-3z" fill="#00dd7d"/><path d="M378 337h3v3h-3z" fill="#00d99b"/><path d="M381 337h3v3h-3z" fill="#00d4b3"/><path d="M384 337h3v3h-3z" fill="#00cec5"/><path d="M387 337h3v3h-3z" fill="#00cad2"/><path d="M390 337h6v3h-6z" fill="#00c7d8"/><path d="M396 337h3v3h-3z" fill="#00c8d8"/><path d="M399 337h3v3h-3z" fill="#00c9d4"/><path d="M402 337h3v3h-3z" fill="#00cccd"/><path d="M405 337h3v3h-3z" fill="#00cec6"/><path d="M408 337h3v3h-3z" fill="#00d1bc"/><path d="M411 337h3v3h-3z" fill="#00d6af"/><path d="M414 337h3v3h-3z" fill="#00da9a"/><path d="M417 337h3v3h-3z" fill="#00dc83"/><path d="M420 337h3v3h-3z" fill="#00de71"/><path d="M423 337h3v3h-3z" fill="#00e064"/><path d="M426 337h3v3h-3z" fill="#00e15d"/><path d="M429 337h3v3h-3z" fill="#00e159"/><path d="M432 337h3v3h-3z" fill="#00e254"/><path d="M435 337h3v3h-3z" fill="#00e44a"/><path d="M438 337h3v3h-3z" fill="#00e73c"/><path d="M441 337h3v3h-3z" fill="#00e92d"/><path d="M312 340h3v3h-3z" fill="#ff9d00"/><path d="M315 340h3v3h-3z" fill="#ffa300"/><path d="M318 340h3v3h-3z" fill="#ffab00"/><path d="M321 340h3v3h-3z" fill="#ffb300"/><path d="M324 340h3v3h-3z" fill="#ffbd00"/><path d="M327 340h3v3h-3z" fill="#ffc800"/><path d="M330 340h3v3h-3z" fill="#ffd400"/><path d="M333 340h3v3h-3z" fill="#ffe008"/><path d="M336 340h3v3h-3z" fill="#ffec15"/><path d="M339 340h3v3h-3z" fill="#fffa23"/><path d="M342 340h3v3h-3z" fill="#edff24"/><path d="M345 340h3v3h-3z" fill="#cfff1d"/><path d="M348 340h3v3h-3z" fill="#a9fe18"/><path d="M351 340h3v3h-3z" fill="#75fb18"/><path d="M354 340h3v3h-3z" fill="#43f717"/><path d="M357 340h3v3h-3z" fill="#22f410"/><path d="M360 340h3v3h-3z" fill="#06f109"/><path d="M363 340h3v3h-3z" fill="#00ed19"/><path d="M366 340h3v3h-3z" fill="#00e832"/><path d="M369 340h3v3h-3z" fill="#00e34e"/><path d="M372 340h3v3h-3z" fill="#00df6a"/><path d="M375 340h3v3h-3z" fill="#00dc87"/><path d="M378 340h3v3h-3z" fill="#00d7aa"/><path d="M381 340h3v3h-3z" fill="#00cfc3"/><path d="M384 340h3v3h-3z" fill="#00c6d9"/><path d="M387 340h3v3h-3z" fill="#00b3df"/><path d="M390 340h3v3h-3z" fill="#00a5e4"/><path d="M393 340h3v3h-3z" fill="#00a0e5"/><path d="M396 340h3v3h-3z" fill="#00a5e4"/><path d="M399 340h3v3h-3z" fill="#00b1e0"/><path d="M402 340h3v3h-3z" fill="#00bddc"/><path d="M405 340h3v3h-3z" fill="#00c7d8"/><path d="M408 340h3v3h-3z" fill="#00cbce"/><path d="M411 340h3v3h-3z" fill="#00d1be"/><path d="M414 340h3v3h-3z" fill="#00d7ab"/><path d="M417 340h3v3h-3z" fill="#00da92"/><path d="M420 340h3v3h-3z" fill="#00dd7b"/><path d="M423 340h3v3h-3z" fill="#00df6c"/><path d="M426 340h3v3h-3z" fill="#00e063"/><path d="M429 340h3v3h-3z" fill="#00e05e"/><path d="M432 340h3v3h-3z" fill="#00e257"/><path d="M435 340h3v3h-3z" fill="#00e34d"/><path d="M438 340h3v3h-3z" fill="#00e640"/><path d="M441 340h3v3h-3z" fill="#00e832"/><path d="M312 343h3v3h-3z" fill="#ff9900"/><path d="M315 343h3v3h-3z" fill="#ff9e00"/><path d="M318 343h3v3h-3z" fill="#ffa500"/><path d="M321 343h3v3h-3z" fill="#ffae00"/><path d="M324 343h3v3h-3z" fill="#ffb800"/><path d="M327 343h3v3h-3z" fill="#ffc200"/><path d="M330 343h3v3h-3z" fill="#ffce00"/><path d="M333 343h3v3h-3z" fill="#ffda02"/><path d="M336 343h3v3h-3z" fill="#ffe60f"/><path d="M339 343h3v3h-3z" fill="#fff21b"/><path d="M342 343h3v3h-3z" fill="#feff28"/><path d="M345 343h3v3h-3z" fill="#e3ff22"/><path d="M348 343h3v3h-3z" fill="#c6ff1b"/><path d="M351 343h3v3h-3z" fill="#9dfd18"/><path d="M354 343h3v3h-3z" fill="#6afa18"/><path d="M357 343h3v3h-3z" fill="#3cf715"/><path d="M360 343h3v3h-3z" fill="#1ff30f"/><path d="M363 343h3v3h-3z" fill="#08f10a"/><path d="M366 343h3v3h-3z" fill="#00ed17"/><path d="M369 343h3v3h-3z" fill="#00e738"/><path d="M372 343h3v3h-3z" fill="#00e15d"/><path d="M375 343h3v3h-3z" fill="#00dd7e"/><path d="M378 343h3v3h-3z" fill="#00d8a8"/><path d="M381 343h3v3h-3z" fill="#00cec6"/><path d="M384 343h3v3h-3z" fill="#00bcdc"/><path d="M387 343h3v3h-3z" fill="#00a0e5"/><path d="M390 343h3v3h-3z" fill="#0091ed"/><path d="M393 343h3v3h-3z" fill="#008bf1"/><path d="M396 343h3v3h-3z" fill="#008fee"/><path d="M399 343h3v3h-3z" fill="#009ae7"/><path d="M402 343h3v3h-3z" fill="#00ace1"/><path d="M405 343h3v3h-3z" fill="#00b9dd"/><path d="M408 343h3v3h-3z" fill="#00c7d8"/><path d="M411 343h3v3h-3z" fill="#00cdc8"/><path d="M414 343h3v3h-3z" fill="#00d4b4"/><path d="M417 343h3v3h-3z" fill="#00d99d"/><path d="M420 343h3v3h-3z" fill="#00dc83"/><path d="M423 343h3v3h-3z" fill="#00de72"/><path d="M426 343h3v3h-3z" fill="#00df68"/><path d="M429 343h3v3h-3z" fill="#00e062"/><path d="M432 343h3v3h-3z" fill="#00e15b"/><path d="M435 343h3v3h-3z" fill="#00e352"/><path d="M438 343h3v3h-3z" fill="#00e547"/><path d="M441 343h3v3h-3z" fill="#00e73b"/><path d="M312 346h3v3h-3z" fill="#ff9400"/><path d="M315 346h3v3h-3z" fill="#ff9900"/><path d="M318 346h3v3h-3z" fill="#ff9f00"/><path d="M321 346h3v3h-3z" fill="#ffa800"/><path d="M324 346h3v3h-3z" fill="#ffb200"/><path d="M327 346h3v3h-3z" fill="#ffbc00"/><path d="M330 346h3v3h-3z" fill="#ffc700"/><path d="M333 346h3v3h-3z" fill="#ffd300"/><path d="M336 346h3v3h-3z" fill="#ffde07"/><path d="M339 346h3v3h-3z" fill="#ffe912"/><path d="M342 346h3v3h-3z" fill="#fff51d"/><path d="M345 346h3v3h-3z" fill="#fcff27"/><path d="M348 346h3v3h-3z" fill="#e2ff22"/><path d="M351 346h3v3h-3z" fill="#c5ff1b"/><path d="M354 346h3v3h-3z" fill="#9cfd18"/><path d="M357 346h3v3h-3z" fill="#6bfa18"/><path d="M360 346h3v3h-3z" fill="#43f717"/><path d="M363 346h3v3h-3z" fill="#2ff512"/><path d="M366 346h3v3h-3z" fill="#23f410"/><path d="M369 346h3v3h-3z" fill="#0cf10b"/><path d="M372 346h3v3h-3z" fill="#00eb26"/><path d="M375 346h3v3h-3z" fill="#00e15b"/><path d="M378 346h3v3h-3z" fill="#00db90"/><path d="M381 346h3v3h-3z" fill="#00d1bd"/><path d="M384 346h3v3h-3z" fill="#00bfdb"/><path d="M387 346h3v3h-3z" fill="#009de6"/><path d="M390 346h3v3h-3z" fill="#008cf0"/><path d="M393 346h3v3h-3z" fill="#0084f5"/><path d="M396 346h3v3h-3z" fill="#0088f3"/><path d="M399 346h3v3h-3z" fill="#0092ec"/><path d="M402 346h3v3h-3z" fill="#009fe6"/><path d="M405 346h3v3h-3z" fill="#00afe0"/><path d="M408 346h3v3h-3z" fill="#00bfdb"/><path d="M411 346h3v3h-3z" fill="#00cbce"/><path d="M414 346h3v3h-3z" fill="#00d2bb"/><path d="M417 346h3v3h-3z" fill="#00d8a6"/><path d="M420 346h3v3h-3z" fill="#00db8c"/><path d="M423 346h3v3h-3z" fill="#00dd7a"/><path d="M426 346h3v3h-3z" fill="#00de6f"/><path d="M429 346h3v3h-3z" fill="#00df68"/><path d="M432 346h3v3h-3z" fill="#00e061"/><path d="M435 346h3v3h-3z" fill="#00e159"/><path d="M438 346h3v3h-3z" fill="#00e350"/><path d="M441 346h3v3h-3z" fill="#00e547"/><path d="M312 349h3v3h-3z" fill="#ff8f00"/><path d="M315 349h3v3h-3z" fill="#ff9300"/><path d="M318 349h3v3h-3z" fill="#ff9900"/><path d="M321 349h3v3h-3z" fill="#ffa100"/><path d="M324 349h3v3h-3z" fill="#ffaa00"/><path d="M327 349h3v3h-3z" fill="#ffb500"/><path d="M330 349h3v3h-3z" fill="#ffbf00"/><path d="M333 349h3v3h-3z" fill="#ffca00"/><path d="M336 349h3v3h-3z" fill="#ffd500"/><path d="M339 349h3v3h-3z" fill="#ffdf07"/><path d="M342 349h3v3h-3z" fill="#ffe911"/><path d="M345 349h3v3h-3z" fill="#fff31c"/><path d="M348 349h3v3h-3z" fill="#ffff28"/><path d="M351 349h3v3h-3z" fill="#e5ff22"/><path d="M354 349h3v3h-3z" fill="#c9ff1c"/><path d="M357 349h3v3h-3z" fill="#abfe18"/><path d="M360 349h3v3h-3z" fill="#8dfc18"/><path d="M363 349h3v3h-3z" fill="#80fc18"/><path d="M366 349h3v3h-3z" fill="#87fc18"/><path d="M369 349h3v3h-3z" fill="#6bfa18"/><path d="M372 349h3v3h-3z" fill="#2df512"/><path d="M375 349h3v3h-3z" fill="#00ed1b"/><path d="M378 349h3v3h-3z" fill="#00df68"/><path d="M381 349h3v3h-3z" fill="#00d8a9"/><path d="M384 349h3v3h-3z" fill="#00cad2"/><path d="M387 349h3v3h-3z" fill="#00a8e3"/><path d="M390 349h3v3h-3z" fill="#0091ec"/><path d="M393 349h6v3h-6z" fill="#0089f2"/><path d="M399 349h3v3h-3z" fill="#0090ed"/><path d="M402 349h3v3h-3z" fill="#0099e8"/><path d="M405 349h3v3h-3z" fill="#00aae2"/><path d="M408 349h3v3h-3z" fill="#00bbdc"/><path d="M411 349h3v3h-3z" fill="#00cad3"/><path d="M414 349h3v3h-3z" fill="#00d0bf"/><path d="M417 349h3v3h-3z" fill="#00d6ad"/><path d="M420 349h3v3h-3z" fill="#00da97"/><path d="M423 349h3v3h-3z" fill="#00dc84"/><path d="M426 349h3v3h-3z" fill="#00dd78"/><path d="M429 349h3v3h-3z" fill="#00de6f"/><path d="M432 349h3v3h-3z" fill="#00df69"/><path d="M435 349h3v3h-3z" fill="#00e063"/><path d="M438 349h3v3h-3z" fill="#00e15c"/><path d="M441 349h3v3h-3z" fill="#00e255"/><path d="M312 352h3v3h-3z" fill="#ff8a00"/><path d="M315 352h3v3h-3z" fill="#ff8e00"/><path d="M318 352h3v3h-3z" fill="#ff9200"/><path d="M321 352h3v3h-3z" fill="#ff9900"/><path d="M324 352h3v3h-3z" fill="#ffa100"/><path d="M327 352h3v3h-3z" fill="#ffab00"/><path d="M330 352h3v3h-3z" fill="#ffb600"/><path d="M333 352h3v3h-3z" fill="#ffc000"/><path d="M336 352h3v3h-3z" fill="#ffca00"/><path d="M339 352h3v3h-3z" fill="#ffd400"/><path d="M342 352h3v3h-3z" fill="#ffdd06"/><path d="M345 352h3v3h-3z" fill="#ffe60f"/><path d="M348 352h3v3h-3z" fill="#fff019"/><path d="M351 352h3v3h-3z" fill="#fffc25"/><path d="M354 352h3v3h-3z" fill="#efff24"/><path d="M357 352h3v3h-3z" fill="#dbff20"/><path d="M360 352h3v3h-3z" fill="#d1ff1e"/><path d="M363 352h3v3h-3z" fill="#d7ff1f"/><path d="M366 352h3v3h-3z" fill="#e6ff22"/><path d="M369 352h3v3h-3z" fill="#d2ff1e"/><path d="M372 352h3v3h-3z" fill="#83fc18"/><path d="M375 352h3v3h-3z" fill="#27f411"/><path d="M378 352h3v3h-3z" fill="#00e832"/><path d="M381 352h3v3h-3z" fill="#00dc82"/><path d="M384 352h3v3h-3z" fill="#00d1bc"/><path d="M387 352h3v3h-3z" fill="#00bedb"/><path d="M390 352h3v3h-3z" fill="#009fe6"/><path d="M393 352h3v3h-3z" fill="#0093ec"/><path d="M396 352h3v3h-3z" fill="#0090ed"/><path d="M399 352h3v3h-3z" fill="#0093eb"/><path d="M402 352h3v3h-3z" fill="#009be7"/><path d="M405 352h3v3h-3z" fill="#00aae2"/><path d="M408 352h3v3h-3z" fill="#00badd"/><path d="M411 352h3v3h-3z" fill="#00c9d5"/><path d="M414 352h3v3h-3z" fill="#00cfc3"/><path d="M417 352h3v3h-3z" fill="#00d5b2"/><path d="M420 352h3v3h-3z" fill="#00d9a0"/><path d="M423 352h3v3h-3z" fill="#00db8e"/><path d="M426 352h3v3h-3z" fill="#00dc81"/><path d="M429 352h3v3h-3z" fill="#00dd78"/><path d="M432 352h3v3h-3z" fill="#00de72"/><path d="M435 352h3v3h-3z" fill="#00df6d"/><path d="M438 352h3v3h-3z" fill="#00df68"/><path d="M441 352h3v3h-3z" fill="#00e064"/><path d="M312 355h3v3h-3z" fill="#ff8500"/><path d="M315 355h3v3h-3z" fill="#ff8800"/><path d="M318 355h3v3h-3z" fill="#ff8b00"/><path d="M321 355h3v3h-3z" fill="#ff9100"/><path d="M324 355h3v3h-3z" fill="#ff9700"/><path d="M327 355h3v3h-3z" fill="#ffa000"/><path d="M330 355h3v3h-3z" fill="#ffaa00"/><path d="M333 355h3v3h-3z" fill="#ffb400"/><path d="M336 355h3v3h-3z" fill="#ffbe00"/><path d="M339 355h3v3h-3z" fill="#ffc800"/><path d="M342 355h3v3h-3z" fill="#ffd200"/><path d="M345 355h3v3h-3z" fill="#ffda02"/><path d="M348 355h3v3h-3z" fill="#ffe109"/><path d="M351 355h3v3h-3z" fill="#ffe912"/><path d="M354 355h3v3h-3z" fill="#fff21b"/><path d="M357 355h3v3h-3z" fill="#fffb24"/><path d="M360 355h3v3h-3z" fill="#ffff28"/><path d="M363 355h3v3h-3z" fill="#fffa23"/><path d="M366 355h3v3h-3z" fill="#fff71f"/><path d="M369 355h3v3h-3z" fill="#f8ff26"/><path d="M372 355h3v3h-3z" fill="#c2ff1a"/><path d="M375 355h3v3h-3z" fill="#59f918"/><path d="M378 355h3v3h-3z" fill="#08f10a"/><path d="M381 355h3v3h-3z" fill="#00e159"/><path d="M384 355h3v3h-3z" fill="#00d99e"/><path d="M387 355h3v3h-3z" fill="#00cdc9"/><path d="M390 355h3v3h-3z" fill="#00b9dd"/><path d="M393 355h3v3h-3z" fill="#00a5e4"/><path d="M396 355h6v3h-6z" fill="#009ce7"/><path d="M402 355h3v3h-3z" fill="#00a3e4"/><path d="M405 355h3v3h-3z" fill="#00afe0"/><path d="M408 355h3v3h-3z" fill="#00bddc"/><path d="M411 355h3v3h-3z" fill="#00c9d4"/><path d="M414 355h3v3h-3z" fill="#00cfc4"/><path d="M417 355h3v3h-3z" fill="#00d4b5"/><path d="M420 355h3v3h-3z" fill="#00d8a7"/><path d="M423 355h3v3h-3z" fill="#00da96"/><path d="M426 355h3v3h-3z" fill="#00db8a"/><path d="M429 355h3v3h-3z" fill="#00dc81"/><path d="M432 355h3v3h-3z" fill="#00dd7b"/><path d="M435 355h3v3h-3z" fill="#00dd77"/><path d="M438 355h3v3h-3z" fill="#00de74"/><path d="M441 355h3v3h-3z" fill="#00de71"/><path d="M312 358h3v3h-3z" fill="#ff8000"/><path d="M315 358h3v3h-3z" fill="#ff8200"/><path d="M318 358h3v3h-3z" fill="#ff8400"/><path d="M321 358h3v3h-3z" fill="#ff8800"/><path d="M324 358h3v3h-3z" fill="#ff8d00"/><path d="M327 358h3v3h-3z" fill="#ff9400"/><path d="M330 358h3v3h-3z" fill="#ff9d00"/><path d="M333 358h3v3h-3z" fill="#ffa700"/><path d="M336 358h3v3h-3z" fill="#ffb300"/><path d="M339 358h3v3h-3z" fill="#ffbd00"/><path d="M342 358h3v3h-3z" fill="#ffc600"/><path d="M345 358h3v3h-3z" fill="#ffcd00"/><path d="M348 358h3v3h-3z" fill="#ffd100"/><path d="M351 358h3v3h-3z" fill="#ffd600"/><path d="M354 358h3v3h-3z" fill="#ffdc04"/><path d="M357 358h3v3h-3z" fill="#ffe30b"/><path d="M360 358h3v3h-3z" fill="#ffe60e"/><path d="M363 358h3v3h-3z" fill="#ffe50d"/><path d="M366 358h3v3h-3z" fill="#ffe811"/><path d="M369 358h3v3h-3z" fill="#fff720"/><path d="M372 358h3v3h-3z" fill="#dcff20"/><path d="M375 358h3v3h-3z" fill="#8bfc18"/><path d="M378 358h3v3h-3z" fill="#2bf512"/><path d="M381 358h3v3h-3z" fill="#00ea2b"/><path d="M384 358h3v3h-3z" fill="#00dd77"/><path d="M387 358h3v3h-3z" fill="#00d6ae"/><path d="M390 358h3v3h-3z" fill="#00cccd"/><path d="M393 358h3v3h-3z" fill="#00bddc"/><path d="M396 358h3v3h-3z" fill="#00b1e0"/><path d="M399 358h3v3h-3z" fill="#00ade1"/><path d="M402 358h3v3h-3z" fill="#00b0e0"/><path d="M405 358h3v3h-3z" fill="#00b7de"/><path d="M408 358h3v3h-3z" fill="#00c2da"/><path d="M411 358h3v3h-3z" fill="#00cad1"/><path d="M414 358h3v3h-3z" fill="#00cfc4"/><path d="M417 358h3v3h-3z" fill="#00d3b7"/><path d="M420 358h3v3h-3z" fill="#00d7ab"/><path d="M423 358h3v3h-3z" fill="#00d99d"/><path d="M426 358h3v3h-3z" fill="#00da92"/><path d="M429 358h3v3h-3z" fill="#00db8a"/><path d="M432 358h3v3h-3z" fill="#00dc85"/><path d="M435 358h3v3h-3z" fill="#00dc81"/><path d="M438 358h3v3h-3z" fill="#00dd7f"/><path d="M441 358h3v3h-3z" fill="#00dd7d"/><path d="M312 361h3v3h-3z" fill="#ff7a01"/><path d="M315 361h3v3h-3z" fill="#ff7b01"/><path d="M318 361h3v3h-3z" fill="#ff7d00"/><path d="M321 361h3v3h-3z" fill="#ff7f00"/><path d="M324 361h3v3h-3z" fill="#ff8300"/><path d="M327 361h3v3h-3z" fill="#ff8800"/><path d="M330 361h3v3h-3z" fill="#ff8f00"/><path d="M333 361h3v3h-3z" fill="#ff9900"/><path d="M336 361h3v3h-3z" fill="#ffa500"/><path d="M339 361h3v3h-3z" fill="#ffb100"/><path d="M342 361h3v3h-3z" fill="#ffba00"/><path d="M345 361h3v3h-3z" fill="#ffc000"/><path d="M348 361h6v3h-6z" fill="#ffc100"/><path d="M354 361h3v3h-3z" fill="#ffc700"/><path d="M357 361h3v3h-3z" fill="#ffce00"/><path d="M360 361h3v3h-3z" fill="#ffd200"/><path d="M363 361h3v3h-3z" fill="#ffd500"/><path d="M366 361h3v3h-3z" fill="#ffde06"/><path d="M369 361h3v3h-3z" fill="#ffef18"/><path d="M372 361h3v3h-3z" fill="#edff24"/><path d="M375 361h3v3h-3z" fill="#aefe18"/><path d="M378 361h3v3h-3z" fill="#47f818"/><path d="M381 361h3v3h-3z" fill="#04f009"/><path d="M384 361h3v3h-3z" fill="#00e350"/><path d="M387 361h3v3h-3z" fill="#00db8b"/><path d="M390 361h3v3h-3z" fill="#00d4b4"/><path d="M393 361h3v3h-3z" fill="#00cccb"/><path d="M396 361h3v3h-3z" fill="#00c6d9"/><path d="M399 361h3v3h-3z" fill="#00bfdb"/><path d="M402 361h3v3h-3z" fill="#00bedb"/><path d="M405 361h3v3h-3z" fill="#00c2da"/><path d="M408 361h3v3h-3z" fill="#00c8d7"/><path d="M411 361h3v3h-3z" fill="#00cccd"/><path d="M414 361h3v3h-3z" fill="#00cfc2"/><path d="M417 361h3v3h-3z" fill="#00d3b7"/><path d="M420 361h3v3h-3z" fill="#00d6ad"/><path d="M423 361h3v3h-3z" fill="#00d9a2"/><path d="M426 361h3v3h-3z" fill="#00da98"/><path d="M429 361h3v3h-3z" fill="#00da92"/><path d="M432 361h3v3h-3z" fill="#00db8d"/><path d="M435 361h3v3h-3z" fill="#00db8b"/><path d="M438 361h3v3h-3z" fill="#00db89"/><path d="M441 361h3v3h-3z" fill="#00dc88"/><path d="M312 364h9v3h-9z" fill="#ff7401"/><path d="M321 364h3v3h-3z" fill="#ff7501"/><path d="M324 364h3v3h-3z" fill="#ff7601"/><path d="M327 364h3v3h-3z" fill="#ff7a01"/><path d="M330 364h3v3h-3z" fill="#ff8100"/><path d="M333 364h3v3h-3z" fill="#ff8a00"/><path d="M336 364h3v3h-3z" fill="#ff9700"/><path d="M339 364h3v3h-3z" fill="#ffa500"/><path d="M342 364h3v3h-3z" fill="#ffb000"/><path d="M345 364h3v3h-3z" fill="#ffb400"/><path d="M348 364h3v3h-3z" fill="#ffb100"/><path d="M351 364h3v3h-3z" fill="#ffab00"/><path d="M354 364h3v3h-3z" fill="#ffb300"/><path d="M357 364h3v3h-3z" fill="#ffbe00"/><path d="M360 364h3v3h-3z" fill="#ffc600"/><path d="M363 364h3v3h-3z" fill="#ffcd00"/><path d="M366 364h3v3h-3z" fill="#ffd800"/><path d="M369 364h3v3h-3z" fill="#ffea12"/><path d="M372 364h3v3h-3z" fill="#f9ff27"/><path d="M375 364h3v3h-3z" fill="#c2ff1a"/><path d="M378 364h3v3h-3z" fill="#6afa18"/><path d="M381 364h3v3h-3z" fill="#1ff30f"/><path d="M384 364h3v3h-3z" fill="#00ea2a"/><path d="M387 364h3v3h-3z" fill="#00df6a"/><path d="M390 364h3v3h-3z" fill="#00da97"/><path d="M393 364h3v3h-3z" fill="#00d4b4"/><path d="M396 364h3v3h-3z" fill="#00cec5"/><path d="M399 364h3v3h-3z" fill="#00cbcf"/><path d="M402 364h6v3h-6z" fill="#00cad3"/><path d="M408 364h3v3h-3z" fill="#00cbce"/><path d="M411 364h3v3h-3z" fill="#00cdc8"/><path d="M414 364h3v3h-3z" fill="#00d0c0"/><path d="M417 364h3v3h-3z" fill="#00d3b7"/><path d="M420 364h3v3h-3z" fill="#00d6ae"/><path d="M423 364h3v3h-3z" fill="#00d8a6"/><path d="M426 364h3v3h-3z" fill="#00d99e"/><path d="M429 364h3v3h-3z" fill="#00da99"/><path d="M432 364h3v3h-3z" fill="#00da95"/><path d="M435 364h3v3h-3z" fill="#00da93"/><path d="M438 364h3v3h-3z" fill="#00db91"/><path d="M441 364h3v3h-3z" fill="#00db90"/><path d="M312 367h3v3h-3z" fill="#ff7002"/><path d="M315 367h3v3h-3z" fill="#ff6f02"/><path d="M318 367h3v3h-3z" fill="#ff6e02"/><path d="M321 367h3v3h-3z" fill="#ff6c02"/><path d="M324 367h3v3h-3z" fill="#ff6b03"/><path d="M327 367h3v3h-3z" fill="#ff6c02"/><path d="M330 367h3v3h-3z" fill="#ff7102"/><path d="M333 367h3v3h-3z" fill="#ff7b01"/><path d="M336 367h3v3h-3z" fill="#ff8b00"/><path d="M339 367h3v3h-3z" fill="#ff9b00"/><path d="M342 367h3v3h-3z" fill="#ffa700"/><path d="M345 367h3v3h-3z" fill="#ffa900"/><path d="M348 367h3v3h-3z" fill="#ff9f00"/><path d="M351 367h3v3h-3z" fill="#ff9700"/><path d="M354 367h3v3h-3z" fill="#ffa600"/><path d="M357 367h3v3h-3z" fill="#ffb600"/><path d="M360 367h3v3h-3z" fill="#ffbf00"/><path d="M363 367h3v3h-3z" fill="#ffc800"/><path d="M366 367h3v3h-3z" fill="#ffd500"/><path d="M369 367h3v3h-3z" fill="#ffe70f"/><path d="M372 367h3v3h-3z" fill="#fffe27"/><path d="M375 367h3v3h-3z" fill="#cfff1d"/><path d="M378 367h3v3h-3z" fill="#85fc18"/><path d="M381 367h3v3h-3z" fill="#36f614"/><path d="M384 367h3v3h-3z" fill="#00f00a"/><path d="M387 367h3v3h-3z" fill="#00e448"/><path d="M390 367h3v3h-3z" fill="#00dd79"/><path d="M393 367h3v3h-3z" fill="#00d99c"/><path d="M396 367h3v3h-3z" fill="#00d5b2"/><path d="M399 367h3v3h-3z" fill="#00d1be"/><path d="M402 367h3v3h-3z" fill="#00cec5"/><path d="M405 367h3v3h-3z" fill="#00cec7"/><path d="M408 367h3v3h-3z" fill="#00cec6"/><path d="M411 367h3v3h-3z" fill="#00cfc2"/><path d="M414 367h3v3h-3z" fill="#00d1bc"/><path d="M417 367h3v3h-3z" fill="#00d3b6"/><path d="M420 367h3v3h-3z" fill="#00d6af"/><path d="M423 367h3v3h-3z" fill="#00d8a9"/><path d="M426 367h3v3h-3z" fill="#00d8a4"/><path d="M429 367h3v3h-3z" fill="#00d99f"/><path d="M432 367h3v3h-3z" fill="#00d99c"/><path d="M435 367h3v3h-3z" fill="#00da9a"/><path d="M438 367h3v3h-3z" fill="#00da98"/><path d="M441 367h3v3h-3z" fill="#00da97"/><path d="M312 370h3v3h-3z" fill="#ff6c02"/><path d="M315 370h3v3h-3z" fill="#ff6b03"/><path d="M318 370h3v3h-3z" fill="#ff6903"/><path d="M321 370h3v3h-3z" fill="#ff6603"/><path d="M324 370h3v3h-3z" fill="#ff6304"/><path d="M327 370h3v3h-3z" fill="#ff6204"/><path d="M330 370h3v3h-3z" fill="#ff6404"/><path d="M333 370h3v3h-3z" fill="#ff6c02"/><path d="M336 370h3v3h-3z" fill="#ff8200"/><path d="M339 370h3v3h-3z" fill="#ff9500"/><path d="M342 370h3v3h-3z" fill="#ffa300"/><path d="M345 370h3v3h-3z" fill="#ffa400"/><path d="M348 370h3v3h-3z" fill="#ff9a00"/><path d="M351 370h3v3h-3z" fill="#ff9600"/><path d="M354 370h3v3h-3z" fill="#ffa300"/><path d="M357 370h3v3h-3z" fill="#ffb200"/><path d="M360 370h3v3h-3z" fill="#ffba00"/><path d="M363 370h3v3h-3z" fill="#ffc400"/><path d="M366 370h3v3h-3z" fill="#ffd200"/><path d="M369 370h3v3h-3z" fill="#ffe40c"/><path d="M372 370h3v3h-3z" fill="#fffa23"/><path d="M375 370h3v3h-3z" fill="#d9ff20"/><path d="M378 370h3v3h-3z" fill="#9cfd18"/><path d="M381 370h3v3h-3z" fill="#49f818"/><path d="M384 370h3v3h-3z" fill="#14f20c"/><path d="M387 370h3v3h-3z" fill="#00ea2a"/><path d="M390 370h3v3h-3z" fill="#00e05e"/><path d="M393 370h3v3h-3z" fill="#00dc82"/><path d="M396 370h3v3h-3z" fill="#00d99e"/><path d="M399 370h3v3h-3z" fill="#00d6af"/><path d="M402 370h3v3h-3z" fill="#00d3b7"/><path d="M405 370h3v3h-3z" fill="#00d1bc"/><path d="M408 370h3v3h-3z" fill="#00d1bd"/><path d="M411 370h3v3h-3z" fill="#00d2bb"/><path d="M414 370h3v3h-3z" fill="#00d3b8"/><path d="M417 370h3v3h-3z" fill="#00d4b4"/><path d="M420 370h3v3h-3z" fill="#00d6af"/><path d="M423 370h3v3h-3z" fill="#00d7ab"/><path d="M426 370h3v3h-3z" fill="#00d8a8"/><path d="M429 370h3v3h-3z" fill="#00d8a4"/><path d="M432 370h3v3h-3z" fill="#00d9a1"/><path d="M435 370h3v3h-3z" fill="#00d9a0"/><path d="M438 370h3v3h-3z" fill="#00d99e"/><path d="M441 370h3v3h-3z" fill="#00d99d"/><path d="M312 373h3v3h-3z" fill="#ff6903"/><path d="M315 373h3v3h-3z" fill="#ff6803"/><path d="M318 373h3v3h-3z" fill="#ff6503"/><path d="M321 373h3v3h-3z" fill="#ff6104"/><path d="M324 373h3v3h-3z" fill="#ff5d04"/><path d="M327 373h3v3h-3z" fill="#ff5c05"/><path d="M330 373h3v3h-3z" fill="#ff5e04"/><path d="M333 373h3v3h-3z" fill="#ff6703"/><path d="M336 373h3v3h-3z" fill="#ff7c01"/><path d="M339 373h3v3h-3z" fill="#ff9000"/><path d="M342 373h6v3h-6z" fill="#ffa000"/><path d="M348 373h3v3h-3z" fill="#ff9400"/><path d="M351 373h3v3h-3z" fill="#ff9000"/><path d="M354 373h3v3h-3z" fill="#ff9a00"/><path d="M357 373h3v3h-3z" fill="#ffa700"/><path d="M360 373h3v3h-3z" fill="#ffb300"/><path d="M363 373h3v3h-3z" fill="#ffbf00"/><path d="M366 373h3v3h-3z" fill="#ffce00"/><path d="M369 373h3v3h-3z" fill="#ffe009"/><path d="M372 373h3v3h-3z" fill="#fff61f"/><path d="M375 373h3v3h-3z" fill="#e2ff21"/><path d="M378 373h3v3h-3z" fill="#aefe18"/><path d="M381 373h3v3h-3z" fill="#60fa18"/><path d="M384 373h3v3h-3z" fill="#26f411"/><path d="M387 373h3v3h-3z" fill="#00ee11"/><path d="M390 373h3v3h-3z" fill="#00e543"/><path d="M393 373h3v3h-3z" fill="#00df6b"/><path d="M396 373h3v3h-3z" fill="#00dc88"/><path d="M399 373h3v3h-3z" fill="#00d99d"/><path d="M402 373h3v3h-3z" fill="#00d7ab"/><path d="M405 373h3v3h-3z" fill="#00d5b2"/><path d="M408 373h6v3h-6z" fill="#00d4b5"/><path d="M414 373h3v3h-3z" fill="#00d4b4"/><path d="M417 373h3v3h-3z" fill="#00d5b2"/><path d="M420 373h3v3h-3z" fill="#00d6af"/><path d="M423 373h3v3h-3z" fill="#00d7ac"/><path d="M426 373h3v3h-3z" fill="#00d7aa"/><path d="M429 373h3v3h-3z" fill="#00d8a8"/><path d="M432 373h3v3h-3z" fill="#00d8a6"/><path d="M435 373h3v3h-3z" fill="#00d8a5"/><path d="M438 373h3v3h-3z" fill="#00d8a4"/><path d="M441 373h3v3h-3z" fill="#00d9a2"/><path d="M312 376h3v3h-3z" fill="#ff6603"/><path d="M315 376h3v3h-3z" fill="#ff6503"/><path d="M318 376h3v3h-3z" fill="#ff6204"/><path d="M321 376h3v3h-3z" fill="#ff5d04"/><path d="M324 376h3v3h-3z" fill="#ff5a05"/><path d="M327 376h3v3h-3z" fill="#ff5905"/><path d="M330 376h3v3h-3z" fill="#ff5c04"/><path d="M333 376h3v3h-3z" fill="#ff6603"/><path d="M336 376h3v3h-3z" fill="#ff7601"/><path d="M339 376h3v3h-3z" fill="#ff8700"/><path d="M342 376h3v3h-3z" fill="#ff9200"/><path d="M345 376h3v3h-3z" fill="#ff9000"/><path d="M348 376h3v3h-3z" fill="#ff8600"/><path d="M351 376h3v3h-3z" fill="#ff8100"/><path d="M354 376h3v3h-3z" fill="#ff8a00"/><path d="M357 376h3v3h-3z" fill="#ff9800"/><path d="M360 376h3v3h-3z" fill="#ffa800"/><path d="M363 376h3v3h-3z" fill="#ffb800"/><path d="M366 376h3v3h-3z" fill="#ffc900"/><path d="M369 376h3v3h-3z" fill="#ffdd05"/><path d="M372 376h3v3h-3z" fill="#fff31b"/><path d="M375 376h3v3h-3z" fill="#eaff23"/><path d="M378 376h3v3h-3z" fill="#bcff19"/><path d="M381 376h3v3h-3z" fill="#74fb18"/><path d="M384 376h3v3h-3z" fill="#35f614"/><path d="M387 376h3v3h-3z" fill="#0af10a"/><path d="M390 376h3v3h-3z" fill="#00e92d"/><path d="M393 376h3v3h-3z" fill="#00e256"/><path d="M396 376h3v3h-3z" fill="#00de75"/><path d="M399 376h3v3h-3z" fill="#00db8c"/><path d="M402 376h3v3h-3z" fill="#00d99d"/><path d="M405 376h3v3h-3z" fill="#00d8a8"/><path d="M408 376h3v3h-3z" fill="#00d6ad"/><path d="M411 376h9v3h-9z" fill="#00d5b0"/><path d="M420 376h3v3h-3z" fill="#00d6ae"/><path d="M423 376h3v3h-3z" fill="#00d6ad"/><path d="M426 376h3v3h-3z" fill="#00d7ab"/><path d="M429 376h6v3h-6z" fill="#00d7aa"/><path d="M435 376h3v3h-3z" fill="#00d8a9"/><path d="M438 376h3v3h-3z" fill="#00d8a8"/><path d="M441 376h3v3h-3z" fill="#00d8a7"/><path d="M312 379h3v3h-3z" fill="#ff6204"/><path d="M315 379h3v3h-3z" fill="#ff6004"/><path d="M318 379h3v3h-3z" fill="#ff5e04"/><path d="M321 379h3v3h-3z" fill="#ff5a05"/><path d="M324 379h3v3h-3z" fill="#ff5805"/><path d="M327 379h3v3h-3z" fill="#ff5705"/><path d="M330 379h3v3h-3z" fill="#ff5b05"/><path d="M333 379h3v3h-3z" fill="#ff6204"/><path d="M336 379h3v3h-3z" fill="#ff6e02"/><path d="M339 379h3v3h-3z" fill="#ff7901"/><path d="M342 379h3v3h-3z" fill="#ff8000"/><path d="M345 379h3v3h-3z" fill="#ff7b01"/><path d="M348 379h3v3h-3z" fill="#ff7002"/><path d="M351 379h3v3h-3z" fill="#ff6b03"/><path d="M354 379h3v3h-3z" fill="#ff7901"/><path d="M357 379h3v3h-3z" fill="#ff8b00"/><path d="M360 379h3v3h-3z" fill="#ff9d00"/><path d="M363 379h3v3h-3z" fill="#ffb100"/><path d="M366 379h3v3h-3z" fill="#ffc400"/><path d="M369 379h3v3h-3z" fill="#ffd901"/><path d="M372 379h3v3h-3z" fill="#ffef17"/><path d="M375 379h3v3h-3z" fill="#f1ff25"/><path d="M378 379h3v3h-3z" fill="#c4ff1b"/><path d="M381 379h3v3h-3z" fill="#84fc18"/><path d="M384 379h3v3h-3z" fill="#42f717"/><path d="M387 379h3v3h-3z" fill="#18f30d"/><path d="M390 379h3v3h-3z" fill="#00ed1a"/><path d="M393 379h3v3h-3z" fill="#00e543"/><path d="M396 379h3v3h-3z" fill="#00df65"/><path d="M399 379h3v3h-3z" fill="#00dd7c"/><path d="M402 379h3v3h-3z" fill="#00db8f"/><path d="M405 379h3v3h-3z" fill="#00d99c"/><path d="M408 379h3v3h-3z" fill="#00d8a6"/><path d="M411 379h3v3h-3z" fill="#00d7aa"/><path d="M414 379h15v3h-15z" fill="#00d6ad"/><path d="M429 379h12v3h-12z" fill="#00d7ac"/><path d="M441 379h3v3h-3z" fill="#00d7ab"/><path d="M312 382h3v3h-3z" fill="#ff5e04"/><path d="M315 382h3v3h-3z" fill="#ff5c04"/><path d="M318 382h3v3h-3z" fill="#ff5a05"/><path d="M321 382h3v3h-3z" fill="#ff5705"/><path d="M324 382h3v3h-3z" fill="#ff5605"/><path d="M327 382h3v3h-3z" fill="#ff5505"/><path d="M330 382h3v3h-3z" fill="#ff5805"/><path d="M333 382h3v3h-3z" fill="#ff5d04"/><path d="M336 382h3v3h-3z" fill="#ff6404"/><path d="M339 382h3v3h-3z" fill="#ff6903"/><path d="M342 382h3v3h-3z" fill="#ff6b03"/><path d="M345 382h3v3h-3z" fill="#ff6703"/><path d="M348 382h6v3h-6z" fill="#ff6004"/><path d="M354 382h3v3h-3z" fill="#ff6c02"/><path d="M357 382h3v3h-3z" fill="#ff8100"/><path d="M360 382h3v3h-3z" fill="#ff9400"/><path d="M363 382h3v3h-3z" fill="#ffaa00"/><path d="M366 382h3v3h-3z" fill="#ffbf00"/><path d="M369 382h3v3h-3z" fill="#ffd500"/><path d="M372 382h3v3h-3z" fill="#ffeb14"/><path d="M375 382h3v3h-3z" fill="#f7ff26"/><path d="M378 382h3v3h-3z" fill="#cbff1c"/><path d="M381 382h3v3h-3z" fill="#90fd18"/><path d="M384 382h3v3h-3z" fill="#4df818"/><path d="M387 382h3v3h-3z" fill="#23f410"/><path d="M390 382h3v3h-3z" fill="#00ef0b"/><path d="M393 382h3v3h-3z" fill="#00e833"/><path d="M396 382h3v3h-3z" fill="#00e256"/><path d="M399 382h3v3h-3z" fill="#00de6f"/><path d="M402 382h3v3h-3z" fill="#00dc83"/><path d="M405 382h3v3h-3z" fill="#00db91"/><path d="M408 382h3v3h-3z" fill="#00d99d"/><path d="M411 382h3v3h-3z" fill="#00d8a4"/><path d="M414 382h3v3h-3z" fill="#00d8a9"/><path d="M417 382h3v3h-3z" fill="#00d7ab"/><path d="M420 382h6v3h-6z" fill="#00d6ad"/><path d="M426 382h9v3h-9z" fill="#00d6ae"/><path d="M435 382h9v3h-9z" fill="#00d6af"/><path d="M312 385h3v3h-3z" fill="#ff5a05"/><path d="M315 385h3v3h-3z" fill="#ff5805"/><path d="M318 385h3v3h-3z" fill="#ff5605"/><path d="M321 385h3v3h-3z" fill="#ff5405"/><path d="M324 385h6v3h-6z" fill="#ff5306"/><path d="M330 385h3v3h-3z" fill="#ff5406"/><path d="M333 385h3v3h-3z" fill="#ff5705"/><path d="M336 385h3v3h-3z" fill="#ff5a05"/><path d="M339 385h3v3h-3z" fill="#ff5c04"/><path d="M342 385h3v3h-3z" fill="#ff5c05"/><path d="M345 385h3v3h-3z" fill="#ff5905"/><path d="M348 385h3v3h-3z" fill="#ff5605"/><path d="M351 385h3v3h-3z" fill="#ff5905"/><path d="M354 385h3v3h-3z" fill="#ff6503"/><path d="M357 385h3v3h-3z" fill="#ff7901"/><path d="M360 385h3v3h-3z" fill="#ff8e00"/><path d="M363 385h3v3h-3z" fill="#ffa500"/><path d="M366 385h3v3h-3z" fill="#ffbb00"/><path d="M369 385h3v3h-3z" fill="#ffd100"/><path d="M372 385h3v3h-3z" fill="#ffe911"/><path d="M375 385h3v3h-3z" fill="#fdff27"/><path d="M378 385h3v3h-3z" fill="#d1ff1e"/><path d="M381 385h3v3h-3z" fill="#9bfd18"/><path d="M384 385h3v3h-3z" fill="#59f918"/><path d="M387 385h3v3h-3z" fill="#2bf512"/><path d="M390 385h3v3h-3z" fill="#07f10a"/><path d="M393 385h3v3h-3z" fill="#00ea26"/><path d="M396 385h3v3h-3z" fill="#00e449"/><path d="M399 385h3v3h-3z" fill="#00df65"/><path d="M402 385h3v3h-3z" fill="#00dd78"/><path d="M405 385h3v3h-3z" fill="#00dc88"/><path d="M408 385h3v3h-3z" fill="#00da95"/><path d="M411 385h3v3h-3z" fill="#00d99e"/><path d="M414 385h3v3h-3z" fill="#00d8a5"/><path d="M417 385h3v3h-3z" fill="#00d8a9"/><path d="M420 385h3v3h-3z" fill="#00d7ac"/><path d="M423 385h3v3h-3z" fill="#00d6ad"/><path d="M426 385h3v3h-3z" fill="#00d6af"/><path d="M429 385h3v3h-3z" fill="#00d5b0"/><path d="M432 385h6v3h-6z" fill="#00d5b1"/><path d="M438 385h6v3h-6z" fill="#00d5b2"/></g></g></g><polygon points="226.5,234.5 702.5,234.5 687.3,455.5 241.8,455.5" fill="none" stroke="#000" stroke-width="1.2"/><polygon points="372.5,349.3 419,349.3 419.7,460 410,557 352.2,557 347.5,426.3" fill="#6c6c6b" /><polygon points="372.5,349.3 419,349.3 406,426.3 347.5,426.3" fill="#6d6d6d" /><polygon points="419,349.3 419.7,460 410,557 408,557 406,426.3" fill="#6a6b69" /><polygon points="347.5,426.3 406,426.3 408,557 352.2,557" fill="#767874" /><path d="M512.2 235.3 L509.8 462.5 A23.6 5 0 0 0 557 462.5 L561.5 235.3 A24.65 3.2 0 0 0 512.2 235.3 Z" fill="url(#cyl)"/><ellipse cx="536.85" cy="235.3" rx="24.65" ry="3.2" fill="url(#captop)"/><path d="M523.2 274.6 L519 547.5 A27.5 9.5 0 0 0 574 547.5 L583.9 274.6 A30.35 4.3 0 0 0 523.2 274.6 Z" fill="url(#cyl)"/><ellipse cx="553.55" cy="274.6" rx="30.35" ry="4.3" fill="url(#captop)"/><line x1="158.6" y1="282.5" x2="770.4" y2="282.5" stroke="#ff0000" stroke-width="1" shape-rendering="crispEdges"/><line x1="158.6" y1="282.5" x2="184.2" y2="557.5" stroke="#ff0000" stroke-width="1" shape-rendering="crispEdges"/><line x1="770.4" y1="282.5" x2="744.9" y2="557.5" stroke="#ff0000" stroke-width="1" shape-rendering="crispEdges"/><line x1="184.2" y1="557.5" x2="744.9" y2="557.5" stroke="#ff0000" stroke-width="1" shape-rendering="crispEdges"/><line x1="158.6" y1="282.5" x2="273" y2="201.5" stroke="#ff0000" stroke-width="1" shape-rendering="crispEdges"/><line x1="770.4" y1="282.5" x2="656.2" y2="201.5" stroke="#ff0000" stroke-width="1" shape-rendering="crispEdges"/><line x1="184.2" y1="557.5" x2="241.8" y2="455.5" stroke="#ff0000" stroke-width="1" shape-rendering="crispEdges"/><line x1="744.9" y1="557.5" x2="687.3" y2="455.5" stroke="#ff0000" stroke-width="1" shape-rendering="crispEdges"/><line x1="155.4" y1="581.3" x2="226.8" y2="581.3" stroke="#3399ff" stroke-width="1" shape-rendering="crispEdges"/><line x1="155.4" y1="581.3" x2="149.2" y2="518.3" stroke="#ffb020" stroke-width="1" shape-rendering="crispEdges"/><line x1="155.4" y1="581.3" x2="175.5" y2="548.4" stroke="#30c8b0" stroke-width="1" shape-rendering="crispEdges"/><path d="M231.5 553.5 L248 578 M248 553.5 L231.5 578" stroke="#3399ff" fill="none"/><path d="M153 489 H170 L153 513.5 H170" stroke="#ffb020" fill="none"/><path d="M179.5 522 L187.5 533 L195 522 M187.5 533 V543.5" stroke="#5a9ad0" fill="none"/><line x1="156.5" y1="268" x2="157.4" y2="281.5" stroke="#ffb020" stroke-width="1" shape-rendering="crispEdges"/><rect x="24.5" y="103.5" width="10" height="20" fill="#ff0000" stroke="rgba(0,0,0,0.45)" stroke-width="1"/><rect x="24.5" y="123.5" width="10" height="20" fill="#ff4008" stroke="rgba(0,0,0,0.45)" stroke-width="1"/><rect x="24.5" y="143.5" width="10" height="20" fill="#ff8000" stroke="rgba(0,0,0,0.45)" stroke-width="1"/><rect x="24.5" y="163.5" width="10" height="20" fill="#ffb000" stroke="rgba(0,0,0,0.45)" stroke-width="1"/><rect x="24.5" y="183.5" width="10" height="20" fill="#ffd800" stroke="rgba(0,0,0,0.45)" stroke-width="1"/><rect x="24.5" y="203.5" width="10" height="20" fill="#ffff28" stroke="rgba(0,0,0,0.45)" stroke-width="1"/><rect x="24.5" y="223.5" width="10" height="20" fill="#b8ff18" stroke="rgba(0,0,0,0.45)" stroke-width="1"/><rect x="24.5" y="243.5" width="10" height="20" fill="#48f818" stroke="rgba(0,0,0,0.45)" stroke-width="1"/><rect x="24.5" y="263.5" width="10" height="20" fill="#00f008" stroke="rgba(0,0,0,0.45)" stroke-width="1"/><rect x="24.5" y="283.5" width="10" height="20" fill="#00e060" stroke="rgba(0,0,0,0.45)" stroke-width="1"/><rect x="24.5" y="303.5" width="10" height="20" fill="#00d8a8" stroke="rgba(0,0,0,0.45)" stroke-width="1"/><rect x="24.5" y="323.5" width="10" height="20" fill="#00c8d8" stroke="rgba(0,0,0,0.45)" stroke-width="1"/><rect x="24.5" y="343.5" width="10" height="20" fill="#0098e8" stroke="rgba(0,0,0,0.45)" stroke-width="1"/><rect x="24.5" y="363.5" width="10" height="20" fill="#0080f8" stroke="rgba(0,0,0,0.45)" stroke-width="1"/><rect x="24.5" y="383.5" width="10" height="20" fill="#2828e8" stroke="rgba(0,0,0,0.45)" stroke-width="1"/><rect x="24.5" y="403.5" width="10" height="20" fill="#0000ff" stroke="rgba(0,0,0,0.45)" stroke-width="1"/><text class="m2" x="35" y="88" font-size="14.5" textLength="118.7" lengthAdjust="spacing" xml:space="preserve">Pressure, Pa</text><text class="m2" x="44" y="109" font-size="14.5" textLength="78.7" lengthAdjust="spacing" xml:space="preserve">429.9741</text><text class="m2" x="44" y="129" font-size="14.5" textLength="78.7" lengthAdjust="spacing" xml:space="preserve">387.7146</text><text class="m2" x="44" y="149" font-size="14.5" textLength="78.7" lengthAdjust="spacing" xml:space="preserve">345.4550</text><text class="m2" x="44" y="169" font-size="14.5" textLength="78.7" lengthAdjust="spacing" xml:space="preserve">303.1954</text><text class="m2" x="44" y="189" font-size="14.5" textLength="78.7" lengthAdjust="spacing" xml:space="preserve">260.9359</text><text class="m2" x="44" y="209" font-size="14.5" textLength="78.7" lengthAdjust="spacing" xml:space="preserve">218.6763</text><text class="m2" x="44" y="229" font-size="14.5" textLength="78.7" lengthAdjust="spacing" xml:space="preserve">176.4168</text><text class="m2" x="44" y="249" font-size="14.5" textLength="78.7" lengthAdjust="spacing" xml:space="preserve">134.1572</text><text class="m2" x="44" y="269" font-size="14.5" textLength="78.7" lengthAdjust="spacing" xml:space="preserve">91.89767</text><text class="m2" x="44" y="289" font-size="14.5" textLength="78.7" lengthAdjust="spacing" xml:space="preserve">49.63812</text><text class="m2" x="44" y="309" font-size="14.5" textLength="78.7" lengthAdjust="spacing" xml:space="preserve">7.378571</text><text class="m2" x="44" y="329" font-size="14.5" textLength="88.7" lengthAdjust="spacing" xml:space="preserve">-34.88098</text><text class="m2" x="44" y="349" font-size="14.5" textLength="88.7" lengthAdjust="spacing" xml:space="preserve">-77.14053</text><text class="m2" x="44" y="369" font-size="14.5" textLength="88.7" lengthAdjust="spacing" xml:space="preserve">-119.4001</text><text class="m2" x="44" y="389" font-size="14.5" textLength="88.7" lengthAdjust="spacing" xml:space="preserve">-161.6596</text><text class="m2" x="44" y="409" font-size="14.5" textLength="88.7" lengthAdjust="spacing" xml:space="preserve">-203.9192</text><text class="m2" x="44" y="429" font-size="14.5" textLength="88.7" lengthAdjust="spacing" xml:space="preserve">-246.1787</text><text class="m2" x="745" y="87" font-size="14.5" textLength="88.7" lengthAdjust="spacing" xml:space="preserve">Sweep 135</text><text class="m2" x="745" y="110" font-size="14.5" textLength="108.7" lengthAdjust="spacing" xml:space="preserve">Probe value</text><text class="m2" x="745" y="131" font-size="14.5" textLength="88.7" lengthAdjust="spacing" xml:space="preserve">-20.21219</text><text class="m2" x="745" y="154" font-size="14.5" textLength="128.7" lengthAdjust="spacing" xml:space="preserve">Average value</text><text class="m2" x="745" y="175" font-size="14.5" textLength="78.7" lengthAdjust="spacing" xml:space="preserve">102.7358</text><text class="m2" x="233" y="614" font-size="14.5" textLength="238.7" lengthAdjust="spacing" xml:space="preserve">My first flow simulation</text></svg></div>
<div id="status"><span>Current directory= P:\phoenics\d_priv1</span><svg class="abs" style="right:0;bottom:0" width="13" height="13"><path d="M12.5 1.5 L1.5 12.5 M12.5 5.5 L5.5 12.5 M12.5 9.5 L9.5 12.5" stroke="#808080" stroke-width="1.8"/><path d="M12.5 0 L0 12.5 M12.5 4 L4 12.5 M12.5 8 L8 12.5" stroke="#fff" stroke-width="1"/></svg></div>
</body></html>
